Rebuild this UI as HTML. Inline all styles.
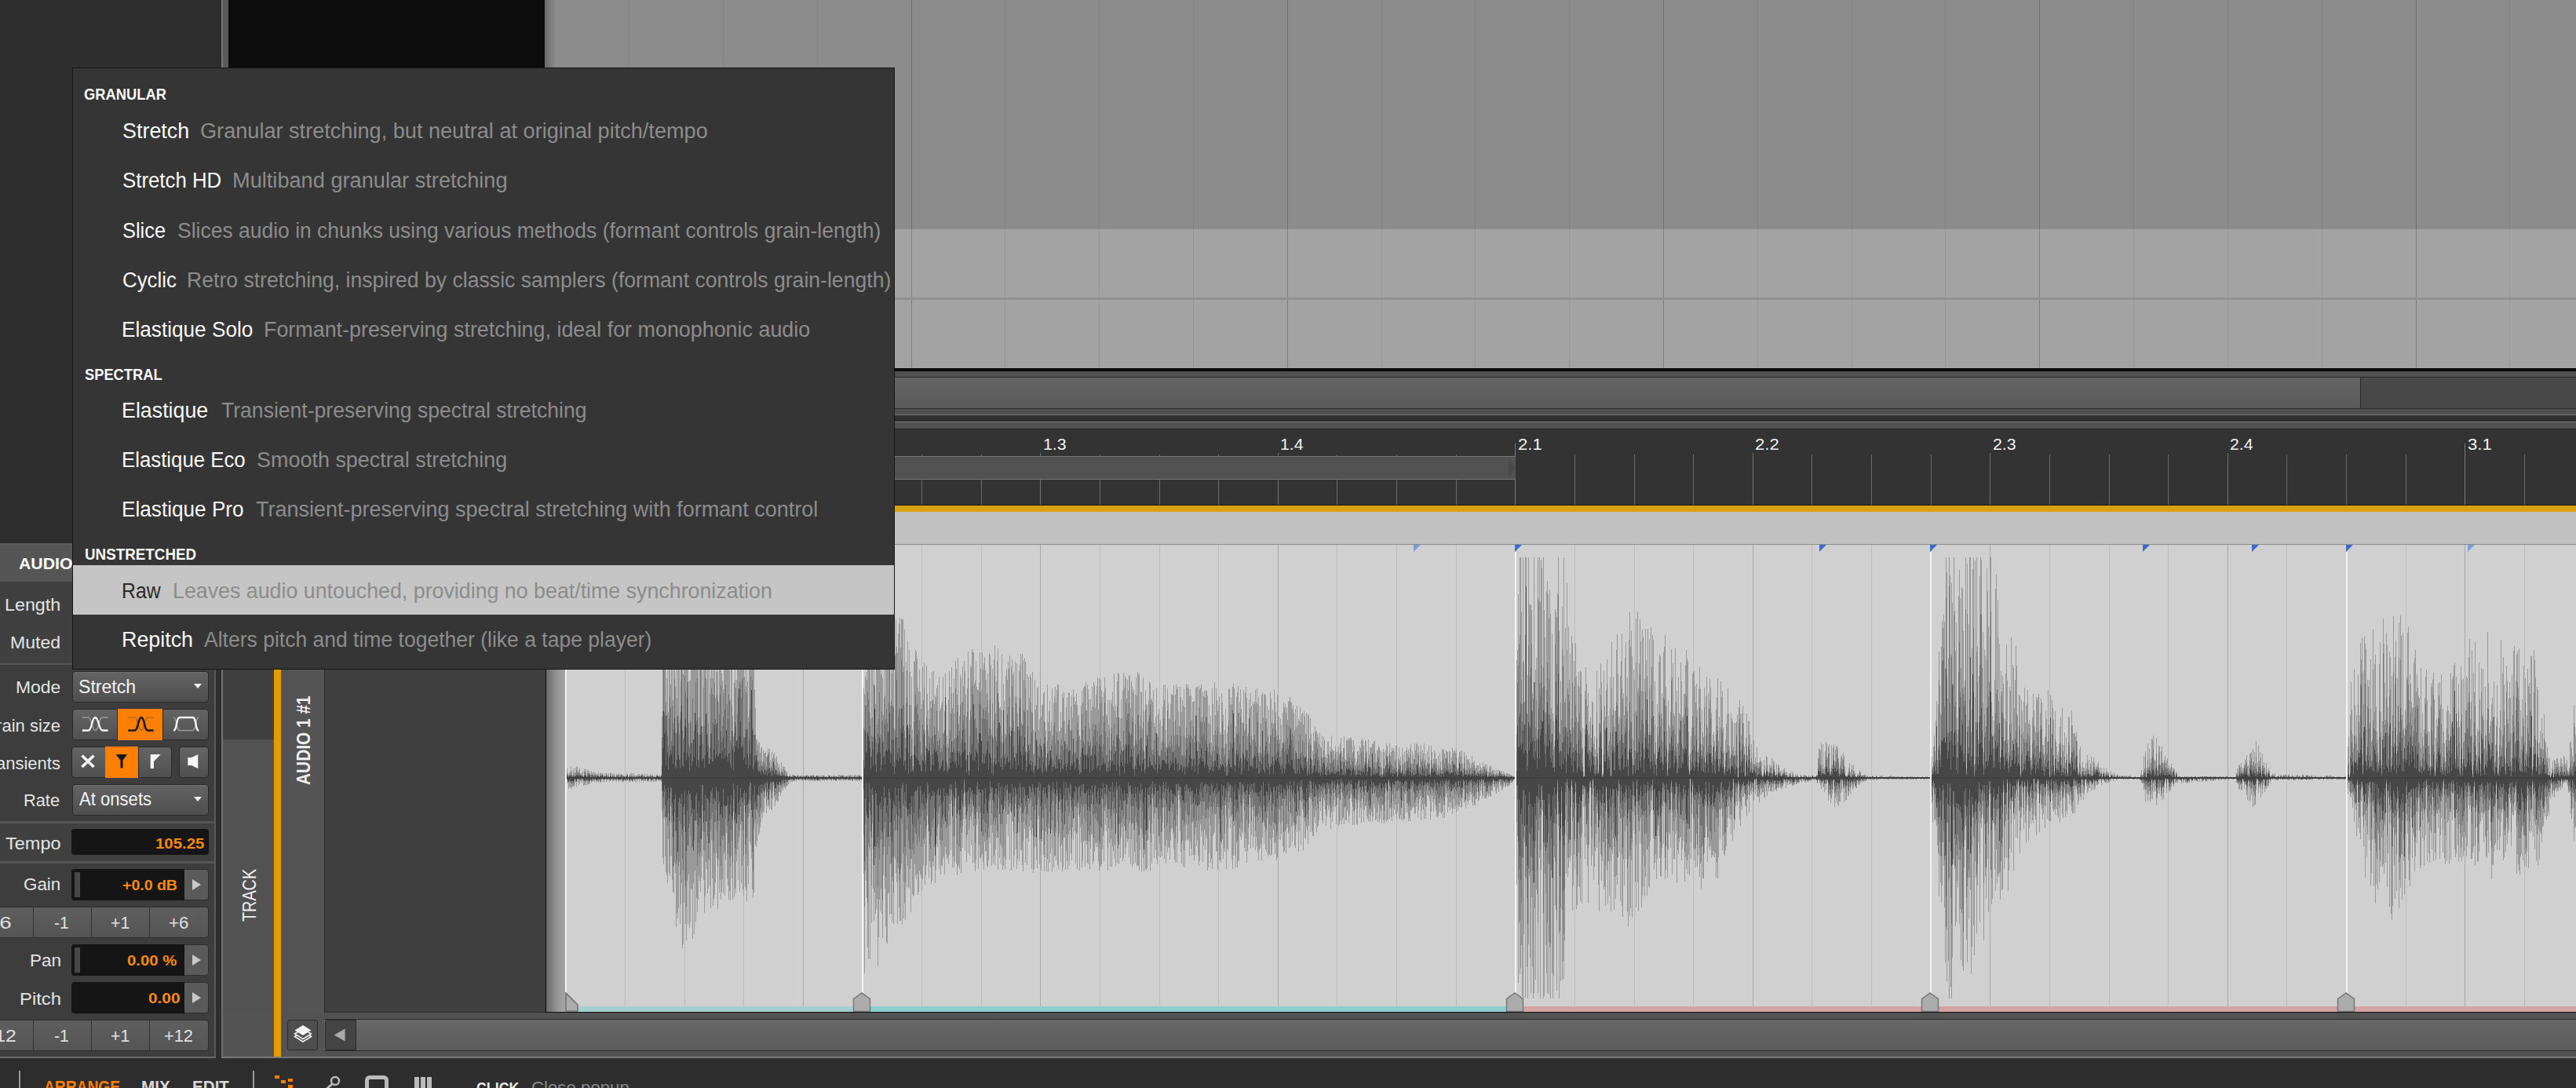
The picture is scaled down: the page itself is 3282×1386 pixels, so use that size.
<!DOCTYPE html><html><head><meta charset="utf-8"><style>
*{margin:0;padding:0;box-sizing:border-box}
html,body{width:3282px;height:1386px;overflow:hidden;background:#2e2e2e;font-family:"Liberation Sans",sans-serif}
#r{position:relative;width:3282px;height:1386px;overflow:hidden}
#r div{position:absolute}
#r svg{position:absolute}
.t{white-space:nowrap;line-height:1}
</style></head><body><div id="r"><div style="left:0px;top:0px;width:282px;height:692px;background:#2e2e2e"></div><div style="left:282px;top:0px;width:9px;height:692px;background:#5a5a5a;border-left:2px solid #777"></div><div style="left:291px;top:0px;width:403px;height:470px;background:#0c0c0c"></div><div style="left:694px;top:0px;width:2588px;height:292px;background:#8c8c8c"></div><div style="left:694px;top:292px;width:2588px;height:178px;background:#a3a3a3"></div><div style="left:801px;top:0;width:1px;height:292px;background:#838383"></div><div style="left:801px;top:292px;width:1px;height:178px;background:#979797"></div><div style="left:921px;top:0;width:1px;height:292px;background:#838383"></div><div style="left:921px;top:292px;width:1px;height:178px;background:#979797"></div><div style="left:1041px;top:0;width:1px;height:292px;background:#838383"></div><div style="left:1041px;top:292px;width:1px;height:178px;background:#979797"></div><div style="left:1161px;top:0;width:1px;height:292px;background:#6f6f6f"></div><div style="left:1161px;top:292px;width:1px;height:178px;background:#7e7e7e"></div><div style="left:1280px;top:0;width:1px;height:292px;background:#838383"></div><div style="left:1280px;top:292px;width:1px;height:178px;background:#979797"></div><div style="left:1400px;top:0;width:1px;height:292px;background:#838383"></div><div style="left:1400px;top:292px;width:1px;height:178px;background:#979797"></div><div style="left:1520px;top:0;width:1px;height:292px;background:#838383"></div><div style="left:1520px;top:292px;width:1px;height:178px;background:#979797"></div><div style="left:1640px;top:0;width:1px;height:292px;background:#6f6f6f"></div><div style="left:1640px;top:292px;width:1px;height:178px;background:#7e7e7e"></div><div style="left:1760px;top:0;width:1px;height:292px;background:#838383"></div><div style="left:1760px;top:292px;width:1px;height:178px;background:#979797"></div><div style="left:1879px;top:0;width:1px;height:292px;background:#838383"></div><div style="left:1879px;top:292px;width:1px;height:178px;background:#979797"></div><div style="left:1999px;top:0;width:1px;height:292px;background:#838383"></div><div style="left:1999px;top:292px;width:1px;height:178px;background:#979797"></div><div style="left:2119px;top:0;width:1px;height:292px;background:#6f6f6f"></div><div style="left:2119px;top:292px;width:1px;height:178px;background:#7e7e7e"></div><div style="left:2239px;top:0;width:1px;height:292px;background:#838383"></div><div style="left:2239px;top:292px;width:1px;height:178px;background:#979797"></div><div style="left:2359px;top:0;width:1px;height:292px;background:#838383"></div><div style="left:2359px;top:292px;width:1px;height:178px;background:#979797"></div><div style="left:2478px;top:0;width:1px;height:292px;background:#838383"></div><div style="left:2478px;top:292px;width:1px;height:178px;background:#979797"></div><div style="left:2598px;top:0;width:1px;height:292px;background:#6f6f6f"></div><div style="left:2598px;top:292px;width:1px;height:178px;background:#7e7e7e"></div><div style="left:2718px;top:0;width:1px;height:292px;background:#838383"></div><div style="left:2718px;top:292px;width:1px;height:178px;background:#979797"></div><div style="left:2838px;top:0;width:1px;height:292px;background:#838383"></div><div style="left:2838px;top:292px;width:1px;height:178px;background:#979797"></div><div style="left:2958px;top:0;width:1px;height:292px;background:#838383"></div><div style="left:2958px;top:292px;width:1px;height:178px;background:#979797"></div><div style="left:3078px;top:0;width:1px;height:292px;background:#6f6f6f"></div><div style="left:3078px;top:292px;width:1px;height:178px;background:#7e7e7e"></div><div style="left:3197px;top:0;width:1px;height:292px;background:#838383"></div><div style="left:3197px;top:292px;width:1px;height:178px;background:#979797"></div><div style="left:694px;top:379px;width:2588px;height:3px;background:#919191"></div><div style="left:694px;top:0px;width:14px;height:470px;background:linear-gradient(90deg,#6a6a6a,rgba(140,140,140,0))"></div><div style="left:694px;top:469px;width:2588px;height:4px;background:#0a0a0a"></div><div style="left:694px;top:473px;width:2588px;height:7px;background:#505050"></div><div style="left:694px;top:480px;width:2588px;height:1px;background:#2a2a2a"></div><div style="left:694px;top:481px;width:2313px;height:39px;background:linear-gradient(180deg,#646464,#5a5a5a)"></div><div style="left:3007px;top:481px;width:275px;height:39px;background:#484848;border-left:1px solid #2a2a2a"></div><div style="left:694px;top:520px;width:2588px;height:1px;background:#2a2a2a"></div><div style="left:694px;top:521px;width:2588px;height:7px;background:#505050"></div><div style="left:694px;top:528px;width:2588px;height:1px;background:#7a7a7a"></div><div style="left:694px;top:529px;width:2588px;height:8px;background:#2e2e2e"></div><div style="left:694px;top:537px;width:2588px;height:1px;background:#7a7a7a"></div><div style="left:694px;top:538px;width:2588px;height:8px;background:#505050"></div><div style="left:694px;top:546px;width:2588px;height:1px;background:#1e1e1e"></div><div style="left:694px;top:547px;width:2588px;height:96px;background:#333333"></div><div style="left:720px;top:565px;width:1px;height:78px;background:#7a7a7a"></div><div style="left:796px;top:579px;width:1px;height:64px;background:#6a6a6a"></div><div style="left:872px;top:579px;width:1px;height:64px;background:#6a6a6a"></div><div style="left:947px;top:579px;width:1px;height:64px;background:#6a6a6a"></div><div style="left:1023px;top:577px;width:1px;height:66px;background:#747474"></div><div style="left:1099px;top:579px;width:1px;height:64px;background:#6a6a6a"></div><div style="left:1174px;top:579px;width:1px;height:64px;background:#6a6a6a"></div><div style="left:1250px;top:579px;width:1px;height:64px;background:#6a6a6a"></div><div style="left:1325px;top:577px;width:1px;height:66px;background:#747474"></div><div style="left:1401px;top:579px;width:1px;height:64px;background:#6a6a6a"></div><div style="left:1477px;top:579px;width:1px;height:64px;background:#6a6a6a"></div><div style="left:1552px;top:579px;width:1px;height:64px;background:#6a6a6a"></div><div style="left:1628px;top:577px;width:1px;height:66px;background:#747474"></div><div style="left:1703px;top:579px;width:1px;height:64px;background:#6a6a6a"></div><div style="left:1779px;top:579px;width:1px;height:64px;background:#6a6a6a"></div><div style="left:1855px;top:579px;width:1px;height:64px;background:#6a6a6a"></div><div style="left:1930px;top:565px;width:1px;height:78px;background:#7a7a7a"></div><div style="left:2006px;top:579px;width:1px;height:64px;background:#6a6a6a"></div><div style="left:2082px;top:579px;width:1px;height:64px;background:#6a6a6a"></div><div style="left:2157px;top:579px;width:1px;height:64px;background:#6a6a6a"></div><div style="left:2233px;top:577px;width:1px;height:66px;background:#747474"></div><div style="left:2308px;top:579px;width:1px;height:64px;background:#6a6a6a"></div><div style="left:2384px;top:579px;width:1px;height:64px;background:#6a6a6a"></div><div style="left:2460px;top:579px;width:1px;height:64px;background:#6a6a6a"></div><div style="left:2535px;top:577px;width:1px;height:66px;background:#747474"></div><div style="left:2611px;top:579px;width:1px;height:64px;background:#6a6a6a"></div><div style="left:2687px;top:579px;width:1px;height:64px;background:#6a6a6a"></div><div style="left:2762px;top:579px;width:1px;height:64px;background:#6a6a6a"></div><div style="left:2838px;top:577px;width:1px;height:66px;background:#747474"></div><div style="left:2913px;top:579px;width:1px;height:64px;background:#6a6a6a"></div><div style="left:2989px;top:579px;width:1px;height:64px;background:#6a6a6a"></div><div style="left:3065px;top:579px;width:1px;height:64px;background:#6a6a6a"></div><div style="left:3140px;top:565px;width:1px;height:78px;background:#7a7a7a"></div><div style="left:3216px;top:579px;width:1px;height:64px;background:#6a6a6a"></div><div style="left:694px;top:581px;width:1237px;height:30px;background:#525252;border-top:1px solid #777;border-bottom:1px solid #777"></div><svg style="left:1922px;top:582px" width="9" height="28"><path d="M0 0 L8 14 L0 28 Z" fill="#4a4a4a"/></svg><div class="t" style="left:1328.6px;top:554.5px;font-size:21px;color:#f2f2f2;transform:scaleX(1.0143);transform-origin:0 0;">1.3</div><div class="t" style="left:1631.1px;top:554.5px;font-size:21px;color:#f2f2f2;transform:scaleX(1.0143);transform-origin:0 0;">1.4</div><div class="t" style="left:1933.5px;top:554.5px;font-size:21px;color:#f2f2f2;transform:scaleX(1.0519);transform-origin:0 0;">2.1</div><div class="t" style="left:2236.0px;top:554.5px;font-size:21px;color:#f2f2f2;transform:scaleX(1.0519);transform-origin:0 0;">2.2</div><div class="t" style="left:2538.6px;top:554.5px;font-size:21px;color:#f2f2f2;transform:scaleX(1.0143);transform-origin:0 0;">2.3</div><div class="t" style="left:2841.1px;top:554.5px;font-size:21px;color:#f2f2f2;transform:scaleX(1.0143);transform-origin:0 0;">2.4</div><div class="t" style="left:3143.5px;top:554.5px;font-size:21px;color:#f2f2f2;transform:scaleX(1.0519);transform-origin:0 0;">3.1</div><div style="left:694px;top:643px;width:2588px;height:1px;background:#1a1a1a"></div><div style="left:694px;top:644px;width:2588px;height:8px;background:#d9a010"></div><div style="left:694px;top:652px;width:2588px;height:41px;background:#c1c1c1"></div><div style="left:694px;top:693px;width:2588px;height:1px;background:#8c8c8c"></div><div style="left:695px;top:694px;width:2587px;height:595px;background:#d0d0d0"></div><svg style="position:absolute;left:0;top:0" width="3282" height="1386"><rect x="720" y="694" width="1" height="595" fill="#a9a9a9"/><rect x="796" y="694" width="1" height="595" fill="#bdbdbd"/><rect x="872" y="694" width="1" height="595" fill="#bdbdbd"/><rect x="947" y="694" width="1" height="595" fill="#bdbdbd"/><rect x="1023" y="694" width="1" height="595" fill="#a9a9a9"/><rect x="1099" y="694" width="1" height="595" fill="#bdbdbd"/><rect x="1174" y="694" width="1" height="595" fill="#bdbdbd"/><rect x="1250" y="694" width="1" height="595" fill="#bdbdbd"/><rect x="1325" y="694" width="1" height="595" fill="#a9a9a9"/><rect x="1401" y="694" width="1" height="595" fill="#bdbdbd"/><rect x="1477" y="694" width="1" height="595" fill="#bdbdbd"/><rect x="1552" y="694" width="1" height="595" fill="#bdbdbd"/><rect x="1628" y="694" width="1" height="595" fill="#a9a9a9"/><rect x="1703" y="694" width="1" height="595" fill="#bdbdbd"/><rect x="1779" y="694" width="1" height="595" fill="#bdbdbd"/><rect x="1855" y="694" width="1" height="595" fill="#bdbdbd"/><rect x="1930" y="694" width="1" height="595" fill="#a9a9a9"/><rect x="2006" y="694" width="1" height="595" fill="#bdbdbd"/><rect x="2082" y="694" width="1" height="595" fill="#bdbdbd"/><rect x="2157" y="694" width="1" height="595" fill="#bdbdbd"/><rect x="2233" y="694" width="1" height="595" fill="#a9a9a9"/><rect x="2308" y="694" width="1" height="595" fill="#bdbdbd"/><rect x="2384" y="694" width="1" height="595" fill="#bdbdbd"/><rect x="2460" y="694" width="1" height="595" fill="#bdbdbd"/><rect x="2535" y="694" width="1" height="595" fill="#a9a9a9"/><rect x="2611" y="694" width="1" height="595" fill="#bdbdbd"/><rect x="2687" y="694" width="1" height="595" fill="#bdbdbd"/><rect x="2762" y="694" width="1" height="595" fill="#bdbdbd"/><rect x="2838" y="694" width="1" height="595" fill="#a9a9a9"/><rect x="2913" y="694" width="1" height="595" fill="#bdbdbd"/><rect x="2989" y="694" width="1" height="595" fill="#bdbdbd"/><rect x="3065" y="694" width="1" height="595" fill="#bdbdbd"/><rect x="3140" y="694" width="1" height="595" fill="#a9a9a9"/><rect x="3216" y="694" width="1" height="595" fill="#bdbdbd"/><path d="M721.5 981V997M722.5 978V994M723.5 985V998M724.5 987V1005M725.5 984V1002M726.5 983V1003M727.5 976V1003M728.5 982V1005M729.5 988V1002M730.5 979V1001M731.5 987V1002M732.5 978V993M733.5 985V997M734.5 977V1002M735.5 976V996M736.5 983V992M737.5 981V1000M738.5 978V998M739.5 985V996M740.5 986V995M741.5 984V997M742.5 982V994M743.5 989V1001M744.5 979V1000M745.5 982V1000M746.5 980V1000M747.5 989V996M748.5 980V1000M749.5 982V999M750.5 982V999M751.5 985V998M752.5 987V994M753.5 982V997M754.5 984V996M755.5 987V995M756.5 983V995M757.5 985V996M758.5 984V994M759.5 986V997M760.5 986V995M761.5 986V996M762.5 984V997M763.5 989V995M764.5 985V996M765.5 985V997M766.5 985V993M767.5 985V992M768.5 987V996M769.5 989V994M770.5 985V996M771.5 989V992M772.5 985V996M773.5 986V994M774.5 988V993M775.5 985V994M776.5 990V996M777.5 985V995M778.5 984V994M779.5 989V993M780.5 985V996M781.5 988V995M782.5 985V994M783.5 988V995M784.5 990V994M785.5 986V996M786.5 986V992M787.5 989V995M788.5 985V996M789.5 989V994M790.5 986V995M791.5 986V992M792.5 988V996M793.5 987V996M794.5 988V996M795.5 989V994M796.5 987V995M797.5 990V995M798.5 985V994M799.5 986V995M800.5 990V991M801.5 988V996M802.5 986V996M803.5 987V995M804.5 985V994M805.5 985V996M806.5 990V996M807.5 985V993M808.5 988V995M809.5 988V996M810.5 989V993M811.5 987V996M812.5 988V992M813.5 986V993M814.5 986V996M815.5 987V991M816.5 988V993M817.5 986V996M818.5 986V994M819.5 987V995M820.5 988V995M821.5 986V995M822.5 990V995M823.5 988V992M824.5 986V995M825.5 988V996M826.5 988V995M827.5 989V992M828.5 986V996M829.5 987V994M830.5 988V996M831.5 986V994M832.5 988V996M833.5 990V992M834.5 988V996M835.5 991V995M836.5 987V996M837.5 986V993M838.5 988V994M839.5 989V995M840.5 987V994M841.5 989V995M842.5 987V995M843.5 913V1033M844.5 808V1093M845.5 813V1101M846.5 806V1041M847.5 805V1091M848.5 894V1111M849.5 864V1115M850.5 854V1125M851.5 907V1069M852.5 819V1112M853.5 850V1116M854.5 872V1027M855.5 839V1090M856.5 824V1121M857.5 892V1136M858.5 800V1138M859.5 809V1099M860.5 875V1112M861.5 816V1181M862.5 889V1163M863.5 841V1170M864.5 823V1157M865.5 836V1098M866.5 917V1177M867.5 833V1152M868.5 808V1125M869.5 810V1208M870.5 859V1203M871.5 832V1150M872.5 803V1122M873.5 804V1177M874.5 844V1198M875.5 839V1122M876.5 798V1178M877.5 921V1114M878.5 867V1182M879.5 867V1175M880.5 801V1132M881.5 844V1133M882.5 840V1196M883.5 844V1125M884.5 830V1190M885.5 810V1109M886.5 805V1174M887.5 815V1144M888.5 815V1162M889.5 812V1146M890.5 936V1115M891.5 807V1122M892.5 801V1136M893.5 829V1118M894.5 805V1091M895.5 925V1059M896.5 828V1121M897.5 806V1163M898.5 812V1142M899.5 816V1098M900.5 865V1107M901.5 810V1138M902.5 820V1132M903.5 965V1096M904.5 838V1128M905.5 864V1157M906.5 826V1070M907.5 847V1119M908.5 864V1154M909.5 834V1146M910.5 811V1140M911.5 889V1124M912.5 811V1087M913.5 856V1093M914.5 849V1158M915.5 895V1095M916.5 838V1137M917.5 808V1121M918.5 810V1146M919.5 858V1136M920.5 867V1120M921.5 878V1138M922.5 834V1087M923.5 835V1141M924.5 806V1095M925.5 853V1061M926.5 847V1119M927.5 807V1128M928.5 817V1146M929.5 854V1135M930.5 891V1147M931.5 846V1090M932.5 841V1119M933.5 912V1146M934.5 938V1034M935.5 870V1143M936.5 811V1132M937.5 876V1138M938.5 866V1097M939.5 843V1082M940.5 814V1121M941.5 807V1066M942.5 831V1136M943.5 811V1050M944.5 842V1125M945.5 815V1103M946.5 807V1133M947.5 829V1141M948.5 862V1026M949.5 811V1130M950.5 874V1134M951.5 819V1148M952.5 868V1103M953.5 914V1126M954.5 846V1036M955.5 849V1072M956.5 826V1076M957.5 823V1094M958.5 820V1133M959.5 844V1144M960.5 828V1137M961.5 878V1049M962.5 902V1076M963.5 942V1079M964.5 942V1071M965.5 949V1050M966.5 945V1064M967.5 946V1061M968.5 959V1054M969.5 953V1048M970.5 951V1035M971.5 970V1042M972.5 955V1033M973.5 959V1035M974.5 959V1017M975.5 957V1006M976.5 964V1036M977.5 964V1009M978.5 953V1028M979.5 958V1026M980.5 954V1031M981.5 968V1007M982.5 977V1031M983.5 958V1032M984.5 966V1018M985.5 961V1001M986.5 959V1015M987.5 975V1027M988.5 966V1021M989.5 963V1019M990.5 971V1021M991.5 977V1021M992.5 973V1009M993.5 979V1009M994.5 985V1014M995.5 971V1010M996.5 980V1004M997.5 976V1007M998.5 977V1002M999.5 977V1003M1000.5 981V1005M1001.5 983V1002M1002.5 983V1002M1003.5 988V1000M1004.5 989V999M1005.5 989V994M1006.5 986V997M1007.5 989V994M1008.5 989V996M1009.5 987V996M1010.5 987V995M1011.5 987V995M1012.5 988V995M1013.5 988V993M1014.5 989V995M1015.5 987V992M1016.5 987V994M1017.5 988V994M1018.5 988V994M1019.5 988V994M1020.5 988V993M1021.5 988V994M1022.5 988V995M1023.5 988V995M1024.5 988V994M1025.5 989V994M1026.5 988V995M1027.5 987V993M1028.5 987V994M1029.5 988V994M1030.5 988V995M1031.5 989V994M1032.5 987V995M1033.5 988V994M1034.5 988V995M1035.5 987V994M1036.5 987V995M1037.5 988V995M1038.5 989V995M1039.5 989V994M1040.5 988V994M1041.5 988V995M1042.5 988V995M1043.5 988V994M1044.5 989V995M1045.5 988V995M1046.5 988V993M1047.5 988V994M1048.5 988V994M1049.5 987V994M1050.5 988V995M1051.5 989V993M1052.5 989V994M1053.5 989V995M1054.5 990V994M1055.5 987V993M1056.5 987V994M1057.5 988V993M1058.5 989V994M1059.5 988V995M1060.5 989V993M1061.5 988V994M1062.5 987V994M1063.5 989V994M1064.5 988V995M1065.5 989V995M1066.5 990V993M1067.5 988V993M1068.5 987V994M1069.5 987V994M1070.5 987V995M1071.5 988V993M1072.5 987V994M1073.5 987V993M1074.5 988V995M1075.5 988V993M1076.5 989V994M1077.5 989V994M1078.5 988V994M1079.5 988V993M1080.5 989V994M1081.5 987V995M1082.5 988V994M1083.5 987V994M1084.5 989V992M1085.5 987V995M1086.5 989V995M1087.5 989V992M1088.5 987V994M1089.5 987V993M1090.5 989V995M1091.5 988V994M1092.5 987V995M1093.5 989V993M1094.5 987V995M1095.5 988V994M1096.5 988V994M1097.5 989V994M1098.5 955V1033M1099.5 932V1068M1100.5 876V1113M1101.5 884V1240M1102.5 862V1109M1103.5 856V1122M1104.5 866V1144M1105.5 846V1207M1106.5 850V1222M1107.5 850V1079M1108.5 835V1222M1109.5 915V1059M1110.5 846V1176M1111.5 827V1049M1112.5 939V1132M1113.5 830V1173M1114.5 874V1137M1115.5 897V1164M1116.5 845V1158M1117.5 836V1145M1118.5 814V1230M1119.5 836V1194M1120.5 830V1146M1121.5 840V1161M1122.5 859V1132M1123.5 847V1164M1124.5 864V1195M1125.5 911V1115M1126.5 805V1079M1127.5 886V1132M1128.5 802V1181M1129.5 804V1200M1130.5 817V1202M1131.5 812V1139M1132.5 815V1137M1133.5 788V1165M1134.5 899V1101M1135.5 820V1164M1136.5 858V1175M1137.5 827V1122M1138.5 803V1177M1139.5 928V1091M1140.5 835V1094M1141.5 789V1112M1142.5 824V1124M1143.5 832V1177M1144.5 807V1106M1145.5 795V1156M1146.5 787V1173M1147.5 825V1173M1148.5 788V1100M1149.5 790V1178M1150.5 788V1087M1151.5 849V1170M1152.5 802V1151M1153.5 940V1172M1154.5 843V1090M1155.5 854V1131M1156.5 817V1103M1157.5 927V1130M1158.5 828V1132M1159.5 856V1107M1160.5 898V1162M1161.5 862V1094M1162.5 929V1139M1163.5 976V1142M1164.5 843V1140M1165.5 842V1101M1166.5 828V1116M1167.5 830V1120M1168.5 839V1113M1169.5 876V1140M1170.5 881V1136M1171.5 853V1109M1172.5 881V1114M1173.5 903V1118M1174.5 897V1135M1175.5 850V1120M1176.5 892V1102M1177.5 844V1075M1178.5 931V1127M1179.5 950V1115M1180.5 848V1102M1181.5 884V1039M1182.5 904V1050M1183.5 938V1118M1184.5 864V1097M1185.5 893V1105M1186.5 902V1126M1187.5 856V1122M1188.5 891V1098M1189.5 855V1104M1190.5 897V1079M1191.5 886V1125M1192.5 888V1108M1193.5 877V1065M1194.5 873V1079M1195.5 931V1050M1196.5 862V1107M1197.5 905V1070M1198.5 902V1114M1199.5 898V1102M1200.5 894V1104M1201.5 862V1094M1202.5 933V1091M1203.5 906V1114M1204.5 857V1079M1205.5 898V1088M1206.5 937V1095M1207.5 948V1092M1208.5 891V1101M1209.5 855V1089M1210.5 875V1051M1211.5 909V1083M1212.5 850V1020M1213.5 902V1105M1214.5 883V1091M1215.5 865V1106M1216.5 941V1097M1217.5 842V1017M1218.5 852V1100M1219.5 885V1115M1220.5 838V1104M1221.5 922V1102M1222.5 912V1107M1223.5 859V1084M1224.5 863V1112M1225.5 895V1061M1226.5 849V1080M1227.5 874V1043M1228.5 842V1010M1229.5 855V1084M1230.5 885V1043M1231.5 913V1098M1232.5 877V1063M1233.5 830V1087M1234.5 981V1057M1235.5 917V1090M1236.5 848V1040M1237.5 850V1077M1238.5 827V1035M1239.5 831V1099M1240.5 831V1052M1241.5 871V1099M1242.5 867V1110M1243.5 842V1096M1244.5 875V1051M1245.5 879V1034M1246.5 879V1107M1247.5 869V1076M1248.5 831V1092M1249.5 852V1094M1250.5 880V1091M1251.5 831V1088M1252.5 853V1098M1253.5 845V1108M1254.5 837V1072M1255.5 854V1085M1256.5 866V1084M1257.5 883V1103M1258.5 858V1105M1259.5 908V1096M1260.5 832V1067M1261.5 834V1074M1262.5 847V1051M1263.5 936V1103M1264.5 852V1061M1265.5 941V1100M1266.5 840V1090M1267.5 822V1102M1268.5 908V1082M1269.5 868V1068M1270.5 842V1059M1271.5 826V1108M1272.5 894V1017M1273.5 902V1093M1274.5 900V1075M1275.5 904V1101M1276.5 834V1050M1277.5 947V1108M1278.5 871V1103M1279.5 893V1091M1280.5 935V1107M1281.5 861V1095M1282.5 852V1050M1283.5 866V1038M1284.5 843V1065M1285.5 852V1037M1286.5 835V1095M1287.5 938V1033M1288.5 849V1109M1289.5 840V1046M1290.5 860V1047M1291.5 856V1105M1292.5 932V1090M1293.5 843V1024M1294.5 896V1082M1295.5 845V1107M1296.5 908V1094M1297.5 925V1048M1298.5 855V1097M1299.5 847V1027M1300.5 833V1083M1301.5 921V1083M1302.5 833V1102M1303.5 841V1110M1304.5 866V1047M1305.5 839V1056M1306.5 843V1099M1307.5 957V1068M1308.5 859V1102M1309.5 905V1067M1310.5 862V1072M1311.5 889V1053M1312.5 859V1058M1313.5 863V1045M1314.5 907V1107M1315.5 856V1055M1316.5 930V1112M1317.5 960V1107M1318.5 866V1066M1319.5 904V1078M1320.5 898V1095M1321.5 877V1106M1322.5 875V1044M1323.5 930V1039M1324.5 916V1101M1325.5 868V1088M1326.5 913V1109M1327.5 898V1072M1328.5 897V1058M1329.5 883V1089M1330.5 881V1110M1331.5 920V1092M1332.5 931V1059M1333.5 965V1110M1334.5 872V1094M1335.5 920V1111M1336.5 906V1055M1337.5 893V1099M1338.5 931V1087M1339.5 919V1056M1340.5 877V1110M1341.5 937V1020M1342.5 895V1105M1343.5 887V1091M1344.5 875V1090M1345.5 895V1096M1346.5 879V1015M1347.5 872V1102M1348.5 872V1107M1349.5 932V1062M1350.5 931V1079M1351.5 907V1098M1352.5 927V1076M1353.5 884V1110M1354.5 889V1105M1355.5 882V1067M1356.5 918V1067M1357.5 934V1108M1358.5 901V1084M1359.5 888V1097M1360.5 923V1108M1361.5 882V1063M1362.5 883V1102M1363.5 930V1058M1364.5 900V1087M1365.5 886V1096M1366.5 914V1054M1367.5 878V1070M1368.5 888V1042M1369.5 897V1059M1370.5 893V1100M1371.5 884V1062M1372.5 898V1107M1373.5 912V1029M1374.5 910V1038M1375.5 937V1109M1376.5 942V1054M1377.5 899V1073M1378.5 880V1105M1379.5 896V1097M1380.5 876V1072M1381.5 874V1071M1382.5 875V1104M1383.5 869V1071M1384.5 905V1076M1385.5 872V1099M1386.5 878V1101M1387.5 891V1072M1388.5 928V1107M1389.5 890V1081M1390.5 905V1064M1391.5 875V1062M1392.5 900V1101M1393.5 869V1097M1394.5 873V1085M1395.5 902V1074M1396.5 885V1079M1397.5 874V1073M1398.5 863V1079M1399.5 904V1097M1400.5 864V1109M1401.5 874V1103M1402.5 866V1105M1403.5 880V1101M1404.5 888V1082M1405.5 912V1065M1406.5 882V1097M1407.5 863V1033M1408.5 876V1051M1409.5 910V1059M1410.5 913V1041M1411.5 891V1109M1412.5 923V1055M1413.5 892V1074M1414.5 968V1104M1415.5 891V1069M1416.5 896V1104M1417.5 881V1078M1418.5 900V1084M1419.5 858V1094M1420.5 906V1076M1421.5 898V1104M1422.5 914V1036M1423.5 868V1099M1424.5 857V1081M1425.5 859V1101M1426.5 941V1049M1427.5 915V1093M1428.5 891V1066M1429.5 915V1054M1430.5 879V1097M1431.5 857V1093M1432.5 876V1052M1433.5 861V1088M1434.5 864V1080M1435.5 890V1068M1436.5 866V1073M1437.5 880V1069M1438.5 861V1092M1439.5 860V1046M1440.5 902V1101M1441.5 868V1069M1442.5 874V1105M1443.5 882V1049M1444.5 878V1101M1445.5 949V1085M1446.5 885V1099M1447.5 863V1048M1448.5 886V1103M1449.5 856V1102M1450.5 860V1103M1451.5 858V1109M1452.5 925V1083M1453.5 881V1054M1454.5 882V1110M1455.5 928V1068M1456.5 863V1093M1457.5 906V1110M1458.5 966V1088M1459.5 879V1107M1460.5 897V1109M1461.5 898V1106M1462.5 920V1056M1463.5 892V1070M1464.5 868V1045M1465.5 870V1109M1466.5 892V1073M1467.5 890V1100M1468.5 894V1017M1469.5 879V1062M1470.5 921V1093M1471.5 926V1036M1472.5 913V1083M1473.5 876V1094M1474.5 935V1101M1475.5 910V1043M1476.5 903V1091M1477.5 921V1075M1478.5 917V1092M1479.5 945V1084M1480.5 925V1091M1481.5 900V1048M1482.5 873V1029M1483.5 892V1094M1484.5 872V1077M1485.5 930V1100M1486.5 952V1070M1487.5 877V1086M1488.5 896V1079M1489.5 915V1080M1490.5 916V1095M1491.5 897V1071M1492.5 884V1056M1493.5 884V1055M1494.5 886V1062M1495.5 873V1081M1496.5 937V1095M1497.5 885V1099M1498.5 872V1052M1499.5 878V1099M1500.5 875V1074M1501.5 906V1013M1502.5 925V1019M1503.5 875V1058M1504.5 888V1085M1505.5 907V1100M1506.5 892V1071M1507.5 899V1104M1508.5 878V1083M1509.5 901V1105M1510.5 940V1071M1511.5 871V1051M1512.5 876V1070M1513.5 872V1071M1514.5 877V1069M1515.5 887V1091M1516.5 878V1072M1517.5 886V1081M1518.5 917V1090M1519.5 894V1047M1520.5 894V1089M1521.5 893V1096M1522.5 937V1089M1523.5 877V1054M1524.5 875V1078M1525.5 875V1070M1526.5 944V1090M1527.5 874V1103M1528.5 879V1097M1529.5 876V1050M1530.5 872V1066M1531.5 920V1059M1532.5 882V1098M1533.5 887V1077M1534.5 880V1057M1535.5 888V1083M1536.5 879V1064M1537.5 880V1068M1538.5 886V1109M1539.5 921V1105M1540.5 898V1087M1541.5 923V1028M1542.5 912V1099M1543.5 946V1094M1544.5 877V1107M1545.5 897V1065M1546.5 936V1062M1547.5 869V1060M1548.5 911V1038M1549.5 877V1085M1550.5 892V1084M1551.5 906V1108M1552.5 898V1049M1553.5 887V1096M1554.5 933V1096M1555.5 936V1099M1556.5 883V1075M1557.5 895V1069M1558.5 911V1094M1559.5 953V1081M1560.5 930V1085M1561.5 903V1026M1562.5 947V1107M1563.5 934V1081M1564.5 925V1084M1565.5 878V1030M1566.5 877V1042M1567.5 898V1055M1568.5 888V1039M1569.5 897V1095M1570.5 875V1107M1571.5 871V1090M1572.5 877V1052M1573.5 940V1090M1574.5 925V1105M1575.5 888V1073M1576.5 882V1105M1577.5 874V1098M1578.5 908V1096M1579.5 894V1055M1580.5 878V1066M1581.5 903V1070M1582.5 921V1059M1583.5 920V1062M1584.5 879V1018M1585.5 931V1080M1586.5 882V1085M1587.5 875V1068M1588.5 889V1099M1589.5 938V1084M1590.5 934V1076M1591.5 891V1049M1592.5 902V1016M1593.5 883V1081M1594.5 899V1063M1595.5 942V1028M1596.5 894V1080M1597.5 897V1066M1598.5 894V1040M1599.5 879V1083M1600.5 895V1066M1601.5 877V1078M1602.5 897V1086M1603.5 888V1096M1604.5 959V1082M1605.5 899V1080M1606.5 922V1075M1607.5 885V1096M1608.5 882V1067M1609.5 914V1045M1610.5 884V1075M1611.5 884V1053M1612.5 886V1082M1613.5 916V1085M1614.5 899V1042M1615.5 938V1089M1616.5 904V1091M1617.5 947V1088M1618.5 882V1069M1619.5 890V1090M1620.5 920V1088M1621.5 904V1067M1622.5 922V1057M1623.5 878V1074M1624.5 895V1088M1625.5 907V1073M1626.5 937V1096M1627.5 885V1092M1628.5 910V1050M1629.5 913V1069M1630.5 942V1031M1631.5 915V1070M1632.5 924V1062M1633.5 953V1046M1634.5 908V1078M1635.5 895V1086M1636.5 901V1084M1637.5 897V1059M1638.5 908V1087M1639.5 901V1050M1640.5 917V1054M1641.5 894V1061M1642.5 893V1080M1643.5 888V1021M1644.5 894V1079M1645.5 895V1053M1646.5 903V1072M1647.5 899V1051M1648.5 908V1048M1649.5 930V1077M1650.5 903V1080M1651.5 926V1050M1652.5 899V1060M1653.5 924V1039M1654.5 916V1085M1655.5 919V1059M1656.5 901V1019M1657.5 920V1076M1658.5 910V1021M1659.5 908V1031M1660.5 923V1083M1661.5 906V1042M1662.5 913V1067M1663.5 935V1069M1664.5 908V1053M1665.5 970V1057M1666.5 910V1075M1667.5 911V1052M1668.5 941V1016M1669.5 915V1060M1670.5 935V1018M1671.5 968V1059M1672.5 957V1065M1673.5 933V1065M1674.5 945V1041M1675.5 925V1049M1676.5 932V1033M1677.5 931V1060M1678.5 935V1054M1679.5 939V1052M1680.5 948V1045M1681.5 933V1021M1682.5 951V1033M1683.5 953V1016M1684.5 937V1045M1685.5 965V1049M1686.5 939V1017M1687.5 943V1020M1688.5 965V1031M1689.5 961V1052M1690.5 966V1040M1691.5 945V1026M1692.5 944V1032M1693.5 962V1027M1694.5 951V1041M1695.5 957V1056M1696.5 937V1035M1697.5 954V1047M1698.5 957V1027M1699.5 956V1034M1700.5 966V1010M1701.5 950V1028M1702.5 958V1050M1703.5 968V1025M1704.5 957V1016M1705.5 951V1052M1706.5 962V1050M1707.5 947V1046M1708.5 940V1005M1709.5 957V1050M1710.5 964V1044M1711.5 953V1041M1712.5 938V1050M1713.5 967V1028M1714.5 968V1045M1715.5 943V1045M1716.5 941V1032M1717.5 944V1035M1718.5 940V1048M1719.5 942V1039M1720.5 940V1017M1721.5 940V1011M1722.5 943V1021M1723.5 959V1051M1724.5 943V1033M1725.5 950V1051M1726.5 966V1031M1727.5 975V1018M1728.5 971V1050M1729.5 957V1051M1730.5 957V1019M1731.5 962V1005M1732.5 950V1041M1733.5 953V1029M1734.5 943V1048M1735.5 941V1017M1736.5 944V1031M1737.5 950V1047M1738.5 970V1032M1739.5 943V1027M1740.5 944V1027M1741.5 957V1040M1742.5 973V1043M1743.5 942V1046M1744.5 961V1037M1745.5 952V1047M1746.5 953V1039M1747.5 952V1034M1748.5 947V1047M1749.5 948V1040M1750.5 944V1024M1751.5 944V1029M1752.5 960V1045M1753.5 971V1044M1754.5 956V1035M1755.5 954V1047M1756.5 950V1025M1757.5 952V1047M1758.5 956V1043M1759.5 978V1033M1760.5 958V1049M1761.5 986V1025M1762.5 954V1045M1763.5 958V1049M1764.5 979V1045M1765.5 956V1004M1766.5 947V1047M1767.5 950V1044M1768.5 973V1045M1769.5 962V996M1770.5 947V1043M1771.5 963V1029M1772.5 958V1041M1773.5 953V1046M1774.5 956V1012M1775.5 953V1039M1776.5 957V1031M1777.5 969V1025M1778.5 950V1037M1779.5 949V1043M1780.5 982V1034M1781.5 966V1024M1782.5 952V1042M1783.5 968V1044M1784.5 964V1038M1785.5 982V1044M1786.5 953V1020M1787.5 962V1046M1788.5 973V1043M1789.5 958V1044M1790.5 971V1012M1791.5 956V1035M1792.5 952V1023M1793.5 960V1035M1794.5 955V1046M1795.5 966V1042M1796.5 953V1046M1797.5 948V1032M1798.5 973V1033M1799.5 957V1029M1800.5 962V1027M1801.5 967V1029M1802.5 947V1037M1803.5 956V1036M1804.5 948V1028M1805.5 947V1015M1806.5 959V1041M1807.5 950V1032M1808.5 977V1018M1809.5 958V1014M1810.5 949V1045M1811.5 970V1033M1812.5 956V1025M1813.5 960V1031M1814.5 947V1043M1815.5 968V1024M1816.5 960V1043M1817.5 975V1028M1818.5 957V1013M1819.5 972V1013M1820.5 950V1015M1821.5 972V1020M1822.5 984V1044M1823.5 950V1034M1824.5 958V1014M1825.5 973V1022M1826.5 967V1034M1827.5 956V1018M1828.5 959V1025M1829.5 967V1032M1830.5 967V1040M1831.5 981V1041M1832.5 963V1039M1833.5 980V1035M1834.5 960V1023M1835.5 970V1035M1836.5 981V1037M1837.5 954V1034M1838.5 956V1042M1839.5 954V1025M1840.5 960V1042M1841.5 965V1015M1842.5 956V1010M1843.5 957V1016M1844.5 958V1035M1845.5 972V1028M1846.5 956V1022M1847.5 958V1032M1848.5 974V1022M1849.5 965V1029M1850.5 953V1037M1851.5 959V1030M1852.5 956V1018M1853.5 956V1031M1854.5 959V1027M1855.5 955V1035M1856.5 978V1025M1857.5 980V1033M1858.5 965V1027M1859.5 958V1028M1860.5 957V1020M1861.5 963V1029M1862.5 956V1028M1863.5 973V1018M1864.5 979V1005M1865.5 958V1023M1866.5 964V1021M1867.5 980V1030M1868.5 962V1010M1869.5 967V1021M1870.5 968V1025M1871.5 967V1015M1872.5 971V1019M1873.5 978V1009M1874.5 973V1012M1875.5 963V1022M1876.5 971V1026M1877.5 971V1015M1878.5 969V1026M1879.5 979V1026M1880.5 978V1018M1881.5 975V1018M1882.5 975V1003M1883.5 975V1021M1884.5 982V1019M1885.5 972V1014M1886.5 977V1007M1887.5 979V999M1888.5 981V1017M1889.5 971V1014M1890.5 977V1002M1891.5 975V1017M1892.5 973V1017M1893.5 979V1017M1894.5 974V1014M1895.5 988V1011M1896.5 983V1015M1897.5 978V1011M1898.5 975V1014M1899.5 976V1015M1900.5 983V1007M1901.5 981V1008M1902.5 980V995M1903.5 986V1003M1904.5 981V1002M1905.5 986V1008M1906.5 981V1011M1907.5 987V1005M1908.5 981V1003M1909.5 986V1009M1910.5 981V996M1911.5 982V1000M1912.5 984V1002M1913.5 982V1007M1914.5 986V1005M1915.5 983V1003M1916.5 985V998M1917.5 985V1003M1918.5 989V1002M1919.5 985V1000M1920.5 985V1002M1921.5 986V1001M1922.5 986V1001M1923.5 987V1000M1924.5 987V997M1925.5 987V997M1926.5 988V997M1927.5 989V996M1928.5 988V994M1929.5 991V993M1930.5 967V1056M1931.5 901V1123M1932.5 841V1127M1933.5 828V1065M1934.5 757V1252M1935.5 820V1176M1936.5 710V1242M1937.5 710V1233M1938.5 780V1204M1939.5 897V1269M1940.5 710V1272M1941.5 842V1190M1942.5 894V1073M1943.5 710V1271M1944.5 710V1119M1945.5 909V1232M1946.5 860V1272M1947.5 710V1203M1948.5 769V1116M1949.5 771V1220M1950.5 770V1265M1951.5 777V1143M1952.5 883V1232M1953.5 890V1272M1954.5 710V1265M1955.5 869V1157M1956.5 853V1248M1957.5 838V1133M1958.5 940V1139M1959.5 710V1265M1960.5 765V1058M1961.5 710V1093M1962.5 767V1272M1963.5 713V1108M1964.5 723V1031M1965.5 876V1034M1966.5 710V1272M1967.5 777V1269M1968.5 812V1113M1969.5 907V1204M1970.5 753V1240M1971.5 740V1265M1972.5 757V1100M1973.5 788V1267M1974.5 751V1207M1975.5 782V1272M1976.5 902V1109M1977.5 807V1239M1978.5 909V1272M1979.5 919V1243M1980.5 951V1092M1981.5 776V1153M1982.5 780V1159M1983.5 786V1262M1984.5 756V1009M1985.5 710V1052M1986.5 804V1272M1987.5 935V1186M1988.5 867V1250M1989.5 917V1036M1990.5 773V1248M1991.5 849V1224M1992.5 710V1247M1993.5 895V1198M1994.5 800V1044M1995.5 927V1113M1996.5 743V1000M1997.5 877V1117M1998.5 798V1105M1999.5 866V1093M2000.5 833V1097M2001.5 935V1090M2002.5 810V1000M2003.5 819V1160M2004.5 927V1128M2005.5 842V1089M2006.5 863V1108M2007.5 819V1009M2008.5 861V1158M2009.5 959V1153M2010.5 873V1129M2011.5 856V1086M2012.5 875V1130M2013.5 854V1148M2014.5 856V1066M2015.5 954V1151M2016.5 927V1012M2017.5 983V1028M2018.5 989V1005M2019.5 880V1094M2020.5 850V1025M2021.5 871V1076M2022.5 899V1103M2023.5 883V1150M2024.5 935V1076M2025.5 919V1003M2026.5 914V1003M2027.5 940V1103M2028.5 893V1090M2029.5 895V995M2030.5 948V1121M2031.5 938V1104M2032.5 955V1084M2033.5 964V1062M2034.5 855V1080M2035.5 959V1036M2036.5 982V1127M2037.5 877V1161M2038.5 922V1046M2039.5 845V1088M2040.5 869V1122M2041.5 987V1097M2042.5 984V1072M2043.5 855V1133M2044.5 899V1130M2045.5 913V1154M2046.5 879V1005M2047.5 840V1109M2048.5 957V1151M2049.5 912V1097M2050.5 944V1141M2051.5 862V1079M2052.5 988V1161M2053.5 818V1083M2054.5 911V1088M2055.5 862V1068M2056.5 926V1159M2057.5 906V1117M2058.5 905V1145M2059.5 828V1115M2060.5 808V1127M2061.5 858V1092M2062.5 922V1008M2063.5 914V1086M2064.5 861V1148M2065.5 842V1043M2066.5 807V1154M2067.5 890V1168M2068.5 883V1095M2069.5 911V1128M2070.5 838V1059M2071.5 818V1094M2072.5 887V1052M2073.5 863V1161M2074.5 968V1180M2075.5 815V1031M2076.5 780V1167M2077.5 824V1157M2078.5 804V1096M2079.5 836V1168M2080.5 975V1034M2081.5 853V1058M2082.5 866V1039M2083.5 956V1123M2084.5 788V1156M2085.5 912V1005M2086.5 779V1124M2087.5 877V1161M2088.5 845V1059M2089.5 789V1074M2090.5 817V1041M2091.5 880V1156M2092.5 802V1141M2093.5 812V1130M2094.5 954V1034M2095.5 865V1142M2096.5 801V1117M2097.5 841V1062M2098.5 861V1141M2099.5 801V1007M2100.5 936V1129M2101.5 814V1131M2102.5 937V1072M2103.5 799V1019M2104.5 850V1032M2105.5 809V1007M2106.5 815V1068M2107.5 959V1108M2108.5 868V1099M2109.5 946V1089M2110.5 967V1120M2111.5 897V1094M2112.5 937V1051M2113.5 843V1065M2114.5 834V1093M2115.5 836V1116M2116.5 909V1117M2117.5 883V1080M2118.5 945V1027M2119.5 831V1075M2120.5 824V1022M2121.5 809V1120M2122.5 875V1108M2123.5 899V1060M2124.5 981V1118M2125.5 892V1083M2126.5 923V1060M2127.5 927V1063M2128.5 907V1080M2129.5 827V1009M2130.5 863V1114M2131.5 845V1059M2132.5 909V1094M2133.5 912V1095M2134.5 826V1062M2135.5 894V1002M2136.5 880V1125M2137.5 947V1083M2138.5 862V1088M2139.5 908V1073M2140.5 910V1067M2141.5 844V1066M2142.5 868V1096M2143.5 913V1081M2144.5 915V1071M2145.5 884V1045M2146.5 884V1123M2147.5 847V1092M2148.5 828V1107M2149.5 839V1096M2150.5 842V1113M2151.5 932V1089M2152.5 984V1115M2153.5 960V992M2154.5 938V1094M2155.5 927V1037M2156.5 858V1001M2157.5 856V1081M2158.5 855V1096M2159.5 874V1082M2160.5 895V1105M2161.5 871V1062M2162.5 904V1104M2163.5 958V1090M2164.5 877V1025M2165.5 850V1117M2166.5 877V1100M2167.5 956V1132M2168.5 904V1079M2169.5 933V1119M2170.5 939V1119M2171.5 876V1087M2172.5 971V1067M2173.5 887V1021M2174.5 862V1053M2175.5 927V1098M2176.5 883V1067M2177.5 903V1079M2178.5 865V1083M2179.5 876V1077M2180.5 908V1093M2181.5 964V1089M2182.5 936V1091M2183.5 933V1084M2184.5 944V1092M2185.5 957V1087M2186.5 903V1118M2187.5 888V1099M2188.5 864V1119M2189.5 944V1092M2190.5 913V1032M2191.5 926V1069M2192.5 868V1032M2193.5 888V1030M2194.5 880V1083M2195.5 927V1064M2196.5 957V1088M2197.5 980V1090M2198.5 942V1083M2199.5 922V1078M2200.5 910V1054M2201.5 877V1042M2202.5 909V1027M2203.5 950V1043M2204.5 965V1038M2205.5 908V1063M2206.5 915V1038M2207.5 919V1071M2208.5 951V997M2209.5 921V1057M2210.5 963V1045M2211.5 921V1027M2212.5 919V1021M2213.5 910V1026M2214.5 990V999M2215.5 901V1021M2216.5 892V1044M2217.5 909V1052M2218.5 937V1027M2219.5 909V1032M2220.5 899V1015M2221.5 921V1015M2222.5 951V1010M2223.5 988V1026M2224.5 940V1028M2225.5 909V1040M2226.5 962V1018M2227.5 919V1000M2228.5 918V1035M2229.5 936V1013M2230.5 971V1008M2231.5 948V1012M2232.5 972V1004M2233.5 959V1017M2234.5 943V1020M2235.5 973V994M2236.5 965V1011M2237.5 976V992M2238.5 952V1015M2239.5 978V1015M2240.5 972V1015M2241.5 971V1022M2242.5 965V1013M2243.5 969V1005M2244.5 971V1012M2245.5 988V1009M2246.5 987V1009M2247.5 968V1015M2248.5 975V1017M2249.5 986V1002M2250.5 963V1008M2251.5 965V1014M2252.5 981V995M2253.5 984V1008M2254.5 974V1001M2255.5 975V1008M2256.5 978V1008M2257.5 966V1009M2258.5 985V999M2259.5 969V1008M2260.5 971V998M2261.5 983V1006M2262.5 987V1006M2263.5 973V1008M2264.5 987V1003M2265.5 974V1004M2266.5 975V1003M2267.5 983V998M2268.5 982V1004M2269.5 989V1004M2270.5 981V1005M2271.5 985V1002M2272.5 980V998M2273.5 978V996M2274.5 984V996M2275.5 983V1004M2276.5 984V996M2277.5 987V1000M2278.5 989V995M2279.5 985V999M2280.5 985V999M2281.5 983V998M2282.5 991V998M2283.5 983V1001M2284.5 985V1001M2285.5 989V999M2286.5 990V1000M2287.5 986V996M2288.5 989V999M2289.5 986V999M2290.5 988V997M2291.5 989V998M2292.5 990V997M2293.5 991V994M2294.5 987V995M2295.5 989V996M2296.5 990V992M2297.5 989V995M2298.5 987V993M2299.5 987V996M2300.5 988V997M2301.5 988V994M2302.5 990V996M2303.5 990V996M2304.5 988V995M2305.5 991V995M2306.5 988V995M2307.5 990V994M2308.5 988V993M2309.5 988V992M2310.5 990V994M2311.5 989V993M2312.5 989V993M2313.5 989V994M2314.5 987V994M2315.5 987V998M2316.5 966V994M2317.5 953V994M2318.5 955V997M2319.5 955V1000M2320.5 947V1005M2321.5 979V997M2322.5 948V1003M2323.5 980V1002M2324.5 979V1009M2325.5 957V999M2326.5 945V1006M2327.5 948V998M2328.5 965V995M2329.5 951V1020M2330.5 948V1013M2331.5 979V1011M2332.5 983V1023M2333.5 950V1017M2334.5 974V1012M2335.5 952V1006M2336.5 948V994M2337.5 975V1028M2338.5 955V1016M2339.5 951V1022M2340.5 950V1005M2341.5 953V1025M2342.5 966V1027M2343.5 979V1021M2344.5 975V1021M2345.5 964V994M2346.5 962V1009M2347.5 966V996M2348.5 959V1005M2349.5 963V1022M2350.5 977V1004M2351.5 988V1019M2352.5 988V1020M2353.5 988V1001M2354.5 984V1014M2355.5 978V1013M2356.5 972V1002M2357.5 983V1011M2358.5 990V1002M2359.5 975V999M2360.5 987V1006M2361.5 974V1004M2362.5 982V999M2363.5 985V1002M2364.5 990V1004M2365.5 990V1004M2366.5 987V994M2367.5 986V999M2368.5 985V1000M2369.5 981V999M2370.5 984V996M2371.5 988V993M2372.5 988V997M2373.5 987V995M2374.5 988V996M2375.5 986V995M2376.5 987V995M2377.5 988V995M2378.5 990V993M2379.5 988V992M2380.5 990V993M2381.5 989V993M2382.5 989V993M2383.5 989V994M2384.5 990V992M2385.5 988V993M2386.5 989V993M2387.5 990V994M2388.5 990V992M2389.5 991V992M2390.5 988V994M2391.5 989V994M2392.5 990V993M2393.5 990V993M2394.5 990V991M2395.5 988V993M2396.5 991V992M2397.5 988V992M2398.5 988V992M2399.5 990V993M2400.5 990V991M2401.5 990V993M2402.5 990V992M2403.5 989V993M2404.5 991V993M2405.5 989V993M2406.5 989V994M2407.5 989V992M2408.5 988V992M2409.5 988V992M2410.5 990V993M2411.5 989V993M2412.5 989V993M2413.5 989V993M2414.5 991V992M2415.5 989V993M2416.5 990V993M2417.5 989V992M2418.5 989V993M2419.5 989V992M2420.5 990V993M2421.5 991V993M2422.5 989V993M2423.5 989V993M2424.5 990V993M2425.5 990V993M2426.5 990V992M2427.5 990V991M2428.5 990V993M2429.5 989V993M2430.5 989V993M2431.5 990V992M2432.5 991V993M2433.5 989V992M2434.5 990V993M2435.5 989V993M2436.5 989V992M2437.5 990V993M2438.5 990V992M2439.5 989V992M2440.5 990V993M2441.5 990V993M2442.5 990V992M2443.5 989V992M2444.5 990V992M2445.5 990V992M2446.5 991V992M2447.5 990V993M2448.5 990V992M2449.5 989V992M2450.5 990V992M2451.5 990V993M2452.5 990V993M2453.5 989V992M2454.5 990V993M2455.5 989V991M2456.5 990V992M2457.5 990V991M2458.5 990V992M2459.5 990V993M2460.5 976V1010M2461.5 964V1023M2462.5 977V1048M2463.5 951V1005M2464.5 937V1045M2465.5 957V1043M2466.5 918V1046M2467.5 893V1052M2468.5 968V1077M2469.5 897V1086M2470.5 830V1142M2471.5 873V1072M2472.5 909V1124M2473.5 824V1150M2474.5 791V1128M2475.5 800V1073M2476.5 783V1103M2477.5 792V1156M2478.5 851V1226M2479.5 710V1181M2480.5 729V1250M2481.5 890V1049M2482.5 839V1224M2483.5 710V1272M2484.5 733V1027M2485.5 833V1257M2486.5 743V1272M2487.5 768V1220M2488.5 871V1094M2489.5 710V1102M2490.5 778V1107M2491.5 829V1180M2492.5 793V1174M2493.5 914V1122M2494.5 945V1131M2495.5 759V1095M2496.5 726V1177M2497.5 762V1158M2498.5 851V1223M2499.5 748V1163M2500.5 750V1231M2501.5 804V1237M2502.5 875V1105M2503.5 867V1070M2504.5 710V1052M2505.5 979V1197M2506.5 718V1226M2507.5 925V1118M2508.5 795V1171M2509.5 710V1118M2510.5 710V1133M2511.5 933V1241M2512.5 826V1206M2513.5 725V1041M2514.5 710V1179M2515.5 975V1217M2516.5 714V1097M2517.5 920V1118M2518.5 710V1189M2519.5 823V1128M2520.5 942V1073M2521.5 861V1021M2522.5 734V1175M2523.5 710V1049M2524.5 713V1055M2525.5 851V1038M2526.5 805V1020M2527.5 958V1198M2528.5 827V1050M2529.5 835V1116M2530.5 925V1145M2531.5 724V1049M2532.5 753V1094M2533.5 798V1162M2534.5 869V1012M2535.5 710V1011M2536.5 710V1108M2537.5 894V1152M2538.5 912V1145M2539.5 937V1048M2540.5 918V1049M2541.5 866V1107M2542.5 750V1135M2543.5 732V1082M2544.5 878V1125M2545.5 765V1114M2546.5 893V1117M2547.5 820V1112M2548.5 965V1146M2549.5 855V1097M2550.5 881V1134M2551.5 861V1133M2552.5 871V1009M2553.5 944V1107M2554.5 916V1092M2555.5 858V1046M2556.5 821V1093M2557.5 867V998M2558.5 942V1135M2559.5 958V1109M2560.5 875V1081M2561.5 880V1031M2562.5 812V1086M2563.5 956V1021M2564.5 847V1021M2565.5 851V1109M2566.5 902V1044M2567.5 866V1017M2568.5 823V1067M2569.5 848V1006M2570.5 912V1068M2571.5 952V996M2572.5 885V1033M2573.5 886V1087M2574.5 986V1058M2575.5 892V1041M2576.5 906V1002M2577.5 933V1029M2578.5 894V1056M2579.5 876V1001M2580.5 921V1048M2581.5 899V1074M2582.5 896V1025M2583.5 879V1009M2584.5 922V1071M2585.5 917V1055M2586.5 923V1034M2587.5 968V1050M2588.5 965V1029M2589.5 914V1045M2590.5 884V1049M2591.5 905V992M2592.5 926V1039M2593.5 932V1044M2594.5 888V1064M2595.5 892V1010M2596.5 888V995M2597.5 884V1011M2598.5 958V1060M2599.5 908V1012M2600.5 890V1025M2601.5 895V1030M2602.5 949V1044M2603.5 949V1037M2604.5 960V1026M2605.5 939V1055M2606.5 906V1027M2607.5 916V998M2608.5 945V1043M2609.5 879V1013M2610.5 923V1045M2611.5 988V1047M2612.5 885V1046M2613.5 953V1005M2614.5 891V1012M2615.5 902V1030M2616.5 917V1034M2617.5 982V1031M2618.5 906V1038M2619.5 945V1015M2620.5 951V1031M2621.5 962V1039M2622.5 958V1042M2623.5 947V1013M2624.5 926V1048M2625.5 913V1020M2626.5 965V1008M2627.5 902V1037M2628.5 957V1042M2629.5 949V1016M2630.5 933V1005M2631.5 972V1041M2632.5 939V1033M2633.5 961V1037M2634.5 985V1010M2635.5 913V1013M2636.5 914V1024M2637.5 969V1009M2638.5 965V1026M2639.5 905V1033M2640.5 924V1036M2641.5 934V1036M2642.5 935V995M2643.5 934V1036M2644.5 938V1001M2645.5 932V1004M2646.5 944V1011M2647.5 977V1025M2648.5 983V1020M2649.5 955V1011M2650.5 951V1015M2651.5 988V1019M2652.5 977V994M2653.5 970V1010M2654.5 978V1019M2655.5 978V1011M2656.5 982V997M2657.5 972V993M2658.5 979V1001M2659.5 962V1010M2660.5 980V1008M2661.5 968V1004M2662.5 986V1004M2663.5 973V996M2664.5 964V1007M2665.5 988V1000M2666.5 970V1006M2667.5 965V996M2668.5 971V1006M2669.5 980V1004M2670.5 975V996M2671.5 977V1000M2672.5 973V1000M2673.5 971V999M2674.5 981V993M2675.5 978V995M2676.5 984V993M2677.5 978V1000M2678.5 990V991M2679.5 984V994M2680.5 978V994M2681.5 984V996M2682.5 986V997M2683.5 979V998M2684.5 983V993M2685.5 984V997M2686.5 984V997M2687.5 990V996M2688.5 991V995M2689.5 983V994M2690.5 987V992M2691.5 986V991M2692.5 988V995M2693.5 984V993M2694.5 986V992M2695.5 989V991M2696.5 988V994M2697.5 987V993M2698.5 986V991M2699.5 990V992M2700.5 988V992M2701.5 990V992M2702.5 988V991M2703.5 988V993M2704.5 988V991M2705.5 989V993M2706.5 988V993M2707.5 989V992M2708.5 988V993M2709.5 988V992M2710.5 990V993M2711.5 989V993M2712.5 989V993M2713.5 988V992M2714.5 988V991M2715.5 991V992M2716.5 990V992M2717.5 990V993M2718.5 990V993M2719.5 989V993M2720.5 989V992M2721.5 991V992M2722.5 991V993M2723.5 990V993M2724.5 990V992M2725.5 990V993M2726.5 990V994M2727.5 985V994M2728.5 981V997M2729.5 987V998M2730.5 987V998M2731.5 963V1007M2732.5 979V1004M2733.5 957V1021M2734.5 990V1006M2735.5 978V1011M2736.5 947V1020M2737.5 978V1012M2738.5 954V1008M2739.5 967V1021M2740.5 972V1018M2741.5 941V994M2742.5 943V1018M2743.5 937V998M2744.5 967V1009M2745.5 969V994M2746.5 969V1008M2747.5 940V1026M2748.5 975V1017M2749.5 981V1011M2750.5 950V1006M2751.5 951V1011M2752.5 975V1002M2753.5 957V1014M2754.5 951V1019M2755.5 972V1003M2756.5 971V1018M2757.5 968V1003M2758.5 963V997M2759.5 972V992M2760.5 969V1010M2761.5 966V993M2762.5 978V997M2763.5 975V1007M2764.5 980V1009M2765.5 978V1006M2766.5 973V1003M2767.5 984V996M2768.5 978V998M2769.5 979V1002M2770.5 980V992M2771.5 988V997M2772.5 983V997M2773.5 984V996M2774.5 991V997M2775.5 989V993M2776.5 989V994M2777.5 989V994M2778.5 990V995M2779.5 990V998M2780.5 989V991M2781.5 990V997M2782.5 990V995M2783.5 989V993M2784.5 990V997M2785.5 989V996M2786.5 989V998M2787.5 989V997M2788.5 991V996M2789.5 990V997M2790.5 989V993M2791.5 990V993M2792.5 989V997M2793.5 991V995M2794.5 991V992M2795.5 990V993M2796.5 989V995M2797.5 989V994M2798.5 991V995M2799.5 991V996M2800.5 989V992M2801.5 991V993M2802.5 989V996M2803.5 989V992M2804.5 989V992M2805.5 989V996M2806.5 989V995M2807.5 991V995M2808.5 989V993M2809.5 989V993M2810.5 989V995M2811.5 989V996M2812.5 989V993M2813.5 989V994M2814.5 990V993M2815.5 989V993M2816.5 989V995M2817.5 989V994M2818.5 991V992M2819.5 989V995M2820.5 989V995M2821.5 989V992M2822.5 989V994M2823.5 989V993M2824.5 990V992M2825.5 989V992M2826.5 990V994M2827.5 989V992M2828.5 989V994M2829.5 989V992M2830.5 991V994M2831.5 989V992M2832.5 989V993M2833.5 990V992M2834.5 990V994M2835.5 989V994M2836.5 989V992M2837.5 989V992M2838.5 990V993M2839.5 990V994M2840.5 991V992M2841.5 990V992M2842.5 989V991M2843.5 990V992M2844.5 990V993M2845.5 990V993M2846.5 990V993M2847.5 990V992M2848.5 989V992M2849.5 985V997M2850.5 979V998M2851.5 988V998M2852.5 975V1005M2853.5 974V1006M2854.5 977V1000M2855.5 972V1007M2856.5 983V1006M2857.5 978V991M2858.5 979V996M2859.5 974V1005M2860.5 967V999M2861.5 969V1000M2862.5 962V1013M2863.5 976V1019M2864.5 975V995M2865.5 987V1021M2866.5 960V1001M2867.5 959V1020M2868.5 958V1012M2869.5 975V1003M2870.5 954V1028M2871.5 971V1008M2872.5 958V1026M2873.5 973V1025M2874.5 944V1006M2875.5 982V993M2876.5 971V995M2877.5 949V1010M2878.5 969V1001M2879.5 958V1004M2880.5 965V1016M2881.5 986V998M2882.5 960V1011M2883.5 975V1000M2884.5 971V993M2885.5 978V1009M2886.5 986V1004M2887.5 972V1005M2888.5 988V994M2889.5 983V1003M2890.5 978V997M2891.5 982V993M2892.5 988V998M2893.5 989V994M2894.5 987V992M2895.5 985V993M2896.5 986V992M2897.5 987V992M2898.5 985V994M2899.5 991V992M2900.5 989V994M2901.5 989V994M2902.5 989V994M2903.5 987V992M2904.5 991V991M2905.5 987V993M2906.5 987V991M2907.5 989V993M2908.5 989V994M2909.5 987V993M2910.5 987V993M2911.5 987V993M2912.5 986V991M2913.5 988V993M2914.5 989V993M2915.5 987V994M2916.5 986V994M2917.5 989V993M2918.5 989V992M2919.5 989V994M2920.5 987V992M2921.5 989V994M2922.5 988V994M2923.5 989V994M2924.5 990V994M2925.5 988V993M2926.5 987V992M2927.5 987V992M2928.5 989V994M2929.5 988V991M2930.5 990V994M2931.5 989V993M2932.5 990V994M2933.5 987V993M2934.5 987V993M2935.5 989V993M2936.5 990V993M2937.5 988V993M2938.5 988V994M2939.5 987V993M2940.5 987V993M2941.5 989V993M2942.5 988V994M2943.5 990V993M2944.5 988V992M2945.5 987V994M2946.5 989V993M2947.5 990V992M2948.5 991V992M2949.5 988V992M2950.5 988V991M2951.5 990V992M2952.5 989V992M2953.5 990V993M2954.5 989V993M2955.5 990V993M2956.5 989V993M2957.5 989V992M2958.5 990V992M2959.5 990V991M2960.5 990V993M2961.5 989V992M2962.5 989V992M2963.5 990V992M2964.5 988V993M2965.5 989V993M2966.5 989V993M2967.5 988V992M2968.5 988V991M2969.5 988V993M2970.5 989V993M2971.5 989V993M2972.5 989V993M2973.5 989V992M2974.5 990V992M2975.5 990V992M2976.5 990V992M2977.5 989V993M2978.5 990V993M2979.5 989V993M2980.5 990V993M2981.5 989V993M2982.5 990V993M2983.5 990V991M2984.5 990V993M2985.5 990V993M2986.5 990V993M2987.5 989V993M2988.5 989V991M2989.5 991V996M2990.5 976V1009M2991.5 951V1012M2992.5 938V997M2993.5 989V1008M2994.5 910V1014M2995.5 869V1016M2996.5 904V1010M2997.5 935V1029M2998.5 953V1013M2999.5 852V1047M3000.5 898V1025M3001.5 947V1032M3002.5 911V1065M3003.5 956V1000M3004.5 859V1055M3005.5 920V1042M3006.5 911V1061M3007.5 819V1069M3008.5 840V1021M3009.5 813V1004M3010.5 975V1040M3011.5 855V1078M3012.5 811V1038M3013.5 820V1118M3014.5 827V1033M3015.5 962V1091M3016.5 866V1063M3017.5 875V1016M3018.5 866V1070M3019.5 921V1003M3020.5 840V1128M3021.5 945V1112M3022.5 942V1070M3023.5 802V1027M3024.5 928V1129M3025.5 846V1069M3026.5 834V1151M3027.5 900V1127M3028.5 932V1094M3029.5 942V1133M3030.5 971V1062M3031.5 846V1124M3032.5 818V1097M3033.5 907V1104M3034.5 975V1067M3035.5 919V1104M3036.5 788V1101M3037.5 820V1113M3038.5 870V1050M3039.5 917V1099M3040.5 806V999M3041.5 822V1130M3042.5 901V1087M3043.5 937V1016M3044.5 830V1155M3045.5 837V1033M3046.5 976V1164M3047.5 861V1172M3048.5 911V1154M3049.5 785V1054M3050.5 947V1102M3051.5 837V1145M3052.5 816V1061M3053.5 960V1135M3054.5 864V1034M3055.5 899V1043M3056.5 793V1157M3057.5 933V1121M3058.5 784V1131M3059.5 810V1088M3060.5 911V1146M3061.5 806V1034M3062.5 927V1097M3063.5 937V1140M3064.5 904V1120M3065.5 907V1046M3066.5 863V1037M3067.5 806V1062M3068.5 799V1096M3069.5 892V1121M3070.5 859V1129M3071.5 871V1030M3072.5 894V1042M3073.5 902V1093M3074.5 901V1061M3075.5 844V1065M3076.5 838V1110M3077.5 828V1091M3078.5 881V1034M3079.5 859V1074M3080.5 876V1034M3081.5 886V1016M3082.5 889V1058M3083.5 969V1106M3084.5 851V1102M3085.5 976V1033M3086.5 908V1068M3087.5 950V1030M3088.5 929V1103M3089.5 889V1032M3090.5 862V1064M3091.5 853V1002M3092.5 892V1097M3093.5 931V1049M3094.5 950V1087M3095.5 933V1099M3096.5 977V1058M3097.5 871V1061M3098.5 875V1082M3099.5 866V1015M3100.5 857V1097M3101.5 891V1061M3102.5 985V1086M3103.5 940V1095M3104.5 916V1032M3105.5 925V1037M3106.5 870V1055M3107.5 886V1030M3108.5 869V1094M3109.5 898V1064M3110.5 859V1042M3111.5 980V1014M3112.5 903V1086M3113.5 932V998M3114.5 947V1093M3115.5 970V1101M3116.5 943V1022M3117.5 906V1097M3118.5 899V1048M3119.5 905V1045M3120.5 944V1100M3121.5 910V1030M3122.5 857V1095M3123.5 922V1008M3124.5 865V1045M3125.5 861V1011M3126.5 847V1032M3127.5 844V1082M3128.5 967V1092M3129.5 862V1087M3130.5 919V1036M3131.5 927V1077M3132.5 871V1097M3133.5 926V1050M3134.5 979V1092M3135.5 849V1080M3136.5 866V1097M3137.5 973V1066M3138.5 864V1091M3139.5 944V1084M3140.5 868V1024M3141.5 905V1066M3142.5 861V1091M3143.5 864V1078M3144.5 895V1015M3145.5 837V1026M3146.5 814V1030M3147.5 916V1026M3148.5 894V1094M3149.5 828V1094M3150.5 986V1086M3151.5 857V1079M3152.5 882V1002M3153.5 818V1102M3154.5 937V1054M3155.5 962V1026M3156.5 928V1097M3157.5 932V1098M3158.5 844V1085M3159.5 891V1050M3160.5 973V1046M3161.5 851V1035M3162.5 913V1042M3163.5 852V1035M3164.5 917V1073M3165.5 953V1035M3166.5 875V1065M3167.5 937V1091M3168.5 917V1093M3169.5 805V1058M3170.5 870V1086M3171.5 934V1032M3172.5 925V1026M3173.5 919V1071M3174.5 897V1120M3175.5 889V1101M3176.5 914V1102M3177.5 868V1085M3178.5 972V1077M3179.5 949V1074M3180.5 925V1000M3181.5 873V1083M3182.5 984V1070M3183.5 964V1044M3184.5 927V1083M3185.5 905V1066M3186.5 815V1047M3187.5 952V1035M3188.5 857V1031M3189.5 837V1096M3190.5 872V1092M3191.5 924V1064M3192.5 973V1085M3193.5 848V1042M3194.5 867V1075M3195.5 922V1061M3196.5 890V1057M3197.5 869V1016M3198.5 889V1023M3199.5 976V1078M3200.5 860V1035M3201.5 911V1038M3202.5 829V1039M3203.5 823V1022M3204.5 947V1033M3205.5 867V1005M3206.5 834V1113M3207.5 830V1089M3208.5 876V1101M3209.5 827V1109M3210.5 966V1114M3211.5 905V1091M3212.5 938V1088M3213.5 891V1052M3214.5 915V1096M3215.5 848V1063M3216.5 945V1103M3217.5 864V1088M3218.5 960V1104M3219.5 911V1085M3220.5 852V1014M3221.5 874V1106M3222.5 870V1058M3223.5 884V1061M3224.5 835V1032M3225.5 836V1059M3226.5 979V1000M3227.5 951V1066M3228.5 828V1011M3229.5 841V1082M3230.5 863V1051M3231.5 977V1097M3232.5 875V1063M3233.5 879V1102M3234.5 965V1056M3235.5 946V1095M3236.5 931V1059M3237.5 954V1062M3238.5 915V1073M3239.5 934V1054M3240.5 955V1052M3241.5 910V1036M3242.5 944V1040M3243.5 946V1015M3244.5 966V1044M3245.5 952V1040M3246.5 965V1034M3247.5 987V1039M3248.5 966V1014M3249.5 990V1017M3250.5 985V998M3251.5 979V1011M3252.5 970V1014M3253.5 991V1007M3254.5 968V1016M3255.5 969V1006M3256.5 973V1004M3257.5 966V1008M3258.5 966V1005M3259.5 972V1008M3260.5 976V1004M3261.5 984V1002M3262.5 965V1006M3263.5 967V994M3264.5 973V1004M3265.5 985V997M3266.5 963V998M3267.5 965V996M3268.5 974V997M3269.5 972V995M3270.5 968V998M3271.5 981V1001M3272.5 983V1010M3273.5 978V1009M3274.5 946V1008M3275.5 944V1037M3276.5 953V1043M3277.5 963V1030M3278.5 970V1015M3279.5 898V1071M3280.5 926V1055M3281.5 937V1053" stroke="#9a9a9a" stroke-width="1"/><path d="M721.5 985V993M722.5 985V992M723.5 987V997M724.5 989V996M725.5 987V996M726.5 987V996M727.5 985V998M728.5 988V998M729.5 989V998M730.5 984V998M731.5 989V1000M732.5 984V992M733.5 988V996M734.5 981V996M735.5 985V993M736.5 987V991M737.5 984V994M738.5 985V994M739.5 988V992M740.5 988V992M741.5 988V993M742.5 988V992M743.5 990V995M744.5 983V995M745.5 987V995M746.5 984V995M747.5 990V994M748.5 986V995M749.5 985V995M750.5 985V996M751.5 986V995M752.5 989V993M753.5 987V995M754.5 985V994M755.5 989V993M756.5 987V993M757.5 988V993M758.5 987V993M759.5 989V994M760.5 988V994M761.5 988V994M762.5 988V994M763.5 990V993M764.5 987V993M765.5 988V996M766.5 988V992M767.5 988V991M768.5 989V993M769.5 990V993M770.5 988V993M771.5 990V992M772.5 986V993M773.5 988V994M774.5 990V992M775.5 988V992M776.5 991V993M777.5 988V994M778.5 986V993M779.5 990V992M780.5 987V993M781.5 990V994M782.5 988V992M783.5 990V993M784.5 991V993M785.5 988V993M786.5 987V992M787.5 990V994M788.5 987V993M789.5 990V993M790.5 989V994M791.5 988V992M792.5 990V994M793.5 988V994M794.5 990V994M795.5 990V993M796.5 990V994M797.5 990V994M798.5 988V992M799.5 987V994M800.5 990V991M801.5 990V994M802.5 989V994M803.5 989V992M804.5 989V993M805.5 988V995M806.5 990V994M807.5 988V992M808.5 990V994M809.5 990V993M810.5 990V992M811.5 988V994M812.5 990V992M813.5 989V992M814.5 989V993M815.5 989V991M816.5 990V992M817.5 989V994M818.5 987V993M819.5 989V992M820.5 990V993M821.5 989V993M822.5 990V993M823.5 990V991M824.5 989V994M825.5 990V995M826.5 988V993M827.5 990V992M828.5 989V993M829.5 989V992M830.5 990V995M831.5 989V993M832.5 990V993M833.5 990V992M834.5 989V993M835.5 991V994M836.5 988V993M837.5 988V992M838.5 990V993M839.5 990V992M840.5 988V993M841.5 990V993M842.5 988V994M843.5 939V1008M844.5 906V1042M845.5 849V1030M846.5 908V1009M847.5 854V1044M848.5 932V1040M849.5 912V1041M850.5 937V1052M851.5 949V1036M852.5 915V1046M853.5 888V1091M854.5 902V1009M855.5 944V1048M856.5 899V1039M857.5 921V1104M858.5 929V1103M859.5 865V1035M860.5 933V1059M861.5 935V1101M862.5 932V1096M863.5 913V1084M864.5 921V1104M865.5 935V1046M866.5 966V1115M867.5 868V1050M868.5 846V1064M869.5 931V1094M870.5 942V1108M871.5 940V1053M872.5 861V1038M873.5 881V1129M874.5 927V1155M875.5 889V1033M876.5 869V1076M877.5 948V1055M878.5 952V1049M879.5 918V1065M880.5 920V1040M881.5 946V1080M882.5 890V1078M883.5 943V1083M884.5 931V1071M885.5 909V1044M886.5 869V1046M887.5 918V1045M888.5 864V1103M889.5 914V1087M890.5 968V1074M891.5 914V1090M892.5 854V1085M893.5 925V1068M894.5 933V1026M895.5 948V1033M896.5 876V1083M897.5 925V1060M898.5 864V1084M899.5 911V1046M900.5 908V1047M901.5 934V1065M902.5 921V1094M903.5 973V1074M904.5 884V1045M905.5 935V1059M906.5 876V1043M907.5 884V1035M908.5 921V1071M909.5 885V1087M910.5 870V1048M911.5 916V1047M912.5 923V1032M913.5 885V1059M914.5 892V1102M915.5 943V1024M916.5 910V1045M917.5 884V1079M918.5 873V1103M919.5 945V1065M920.5 925V1070M921.5 913V1063M922.5 883V1065M923.5 904V1084M924.5 872V1043M925.5 931V1026M926.5 897V1052M927.5 916V1087M928.5 884V1074M929.5 894V1093M930.5 943V1104M931.5 947V1057M932.5 898V1071M933.5 931V1099M934.5 950V1018M935.5 934V1048M936.5 866V1080M937.5 926V1089M938.5 945V1049M939.5 910V1041M940.5 888V1073M941.5 877V1037M942.5 868V1058M943.5 872V1027M944.5 889V1045M945.5 866V1047M946.5 863V1057M947.5 939V1090M948.5 940V1018M949.5 881V1076M950.5 929V1088M951.5 883V1067M952.5 928V1042M953.5 966V1040M954.5 919V1018M955.5 903V1024M956.5 862V1020M957.5 879V1032M958.5 866V1085M959.5 928V1110M960.5 936V1057M961.5 936V1025M962.5 936V1043M963.5 962V1030M964.5 956V1028M965.5 970V1035M966.5 970V1013M967.5 977V1041M968.5 969V1032M969.5 976V1029M970.5 975V1010M971.5 976V1012M972.5 970V1008M973.5 975V1015M974.5 972V1009M975.5 980V1003M976.5 977V1026M977.5 980V998M978.5 962V1019M979.5 979V1018M980.5 972V1012M981.5 981V999M982.5 982V1016M983.5 970V1010M984.5 982V1006M985.5 971V995M986.5 966V1009M987.5 980V1013M988.5 982V1003M989.5 981V1011M990.5 982V1002M991.5 986V1013M992.5 984V1000M993.5 982V997M994.5 988V1000M995.5 983V1001M996.5 984V999M997.5 984V997M998.5 986V998M999.5 981V1000M1000.5 987V997M1001.5 989V997M1002.5 985V996M1003.5 989V996M1004.5 990V994M1005.5 990V992M1006.5 988V995M1007.5 990V993M1008.5 989V993M1009.5 989V993M1010.5 989V993M1011.5 988V994M1012.5 989V993M1013.5 989V992M1014.5 990V994M1015.5 989V992M1016.5 989V993M1017.5 990V993M1018.5 990V992M1019.5 990V992M1020.5 989V992M1021.5 990V992M1022.5 990V993M1023.5 990V992M1024.5 989V992M1025.5 990V993M1026.5 989V993M1027.5 988V992M1028.5 989V993M1029.5 989V992M1030.5 989V993M1031.5 990V992M1032.5 989V993M1033.5 988V993M1034.5 989V993M1035.5 990V993M1036.5 989V993M1037.5 990V993M1038.5 990V994M1039.5 990V992M1040.5 988V993M1041.5 990V993M1042.5 989V993M1043.5 990V994M1044.5 990V992M1045.5 990V992M1046.5 990V992M1047.5 990V993M1048.5 990V993M1049.5 989V993M1050.5 990V993M1051.5 990V992M1052.5 990V993M1053.5 990V993M1054.5 990V992M1055.5 989V992M1056.5 988V992M1057.5 989V992M1058.5 990V993M1059.5 990V993M1060.5 990V992M1061.5 990V992M1062.5 989V993M1063.5 990V993M1064.5 990V994M1065.5 990V994M1066.5 990V992M1067.5 989V992M1068.5 990V993M1069.5 990V992M1070.5 990V993M1071.5 989V992M1072.5 989V992M1073.5 988V992M1074.5 989V993M1075.5 990V992M1076.5 990V993M1077.5 990V993M1078.5 989V993M1079.5 990V992M1080.5 990V992M1081.5 990V993M1082.5 990V993M1083.5 989V994M1084.5 990V992M1085.5 990V994M1086.5 990V993M1087.5 990V992M1088.5 989V992M1089.5 989V993M1090.5 990V994M1091.5 990V993M1092.5 990V993M1093.5 990V992M1094.5 989V994M1095.5 989V993M1096.5 989V992M1097.5 990V993M1098.5 977V1022M1099.5 958V1024M1100.5 927V1064M1101.5 930V1155M1102.5 899V1050M1103.5 898V1034M1104.5 935V1091M1105.5 881V1150M1106.5 891V1074M1107.5 907V1022M1108.5 925V1082M1109.5 964V1038M1110.5 937V1128M1111.5 914V1013M1112.5 954V1081M1113.5 873V1101M1114.5 904V1078M1115.5 941V1093M1116.5 946V1079M1117.5 923V1075M1118.5 935V1130M1119.5 916V1080M1120.5 882V1095M1121.5 941V1070M1122.5 936V1058M1123.5 907V1069M1124.5 918V1147M1125.5 944V1089M1126.5 890V1056M1127.5 923V1048M1128.5 916V1117M1129.5 903V1068M1130.5 921V1089M1131.5 933V1066M1132.5 895V1078M1133.5 830V1048M1134.5 957V1066M1135.5 893V1100M1136.5 900V1117M1137.5 899V1092M1138.5 901V1138M1139.5 970V1046M1140.5 931V1059M1141.5 832V1057M1142.5 866V1038M1143.5 939V1099M1144.5 913V1040M1145.5 903V1122M1146.5 903V1114M1147.5 928V1107M1148.5 841V1043M1149.5 902V1049M1150.5 856V1024M1151.5 898V1123M1152.5 931V1079M1153.5 968V1124M1154.5 896V1028M1155.5 888V1057M1156.5 924V1039M1157.5 959V1071M1158.5 898V1081M1159.5 923V1082M1160.5 963V1094M1161.5 940V1028M1162.5 962V1083M1163.5 980V1074M1164.5 919V1088M1165.5 900V1054M1166.5 884V1061M1167.5 901V1063M1168.5 897V1077M1169.5 910V1044M1170.5 930V1067M1171.5 917V1073M1172.5 945V1050M1173.5 962V1040M1174.5 959V1079M1175.5 923V1032M1176.5 929V1069M1177.5 876V1046M1178.5 962V1067M1179.5 969V1056M1180.5 914V1052M1181.5 923V1018M1182.5 930V1012M1183.5 957V1059M1184.5 916V1075M1185.5 962V1081M1186.5 940V1065M1187.5 893V1046M1188.5 937V1054M1189.5 947V1042M1190.5 926V1030M1191.5 937V1089M1192.5 958V1076M1193.5 905V1034M1194.5 944V1054M1195.5 950V1036M1196.5 943V1029M1197.5 940V1027M1198.5 958V1076M1199.5 953V1054M1200.5 957V1071M1201.5 935V1039M1202.5 949V1050M1203.5 930V1041M1204.5 888V1046M1205.5 952V1055M1206.5 972V1050M1207.5 976V1053M1208.5 953V1033M1209.5 941V1024M1210.5 930V1013M1211.5 958V1024M1212.5 883V1007M1213.5 958V1039M1214.5 944V1065M1215.5 909V1028M1216.5 959V1065M1217.5 877V1004M1218.5 940V1042M1219.5 907V1076M1220.5 898V1035M1221.5 959V1032M1222.5 931V1078M1223.5 898V1054M1224.5 946V1085M1225.5 941V1020M1226.5 894V1052M1227.5 918V1028M1228.5 911V997M1229.5 929V1028M1230.5 946V1025M1231.5 967V1066M1232.5 907V1034M1233.5 864V1028M1234.5 983V1025M1235.5 938V1045M1236.5 905V1016M1237.5 913V1045M1238.5 874V1019M1239.5 885V1024M1240.5 897V1026M1241.5 917V1038M1242.5 915V1073M1243.5 927V1030M1244.5 927V1035M1245.5 942V1012M1246.5 947V1044M1247.5 896V1027M1248.5 882V1036M1249.5 898V1035M1250.5 944V1059M1251.5 916V1065M1252.5 904V1044M1253.5 902V1065M1254.5 916V1047M1255.5 906V1061M1256.5 901V1049M1257.5 917V1070M1258.5 892V1067M1259.5 937V1054M1260.5 928V1021M1261.5 891V1018M1262.5 929V1010M1263.5 972V1036M1264.5 896V1019M1265.5 976V1050M1266.5 917V1045M1267.5 861V1041M1268.5 938V1050M1269.5 944V1042M1270.5 928V1030M1271.5 883V1067M1272.5 921V1008M1273.5 921V1036M1274.5 924V1049M1275.5 945V1078M1276.5 937V1025M1277.5 963V1080M1278.5 906V1031M1279.5 944V1020M1280.5 960V1029M1281.5 940V1034M1282.5 937V1021M1283.5 910V1006M1284.5 900V1038M1285.5 934V1027M1286.5 888V1023M1287.5 969V1023M1288.5 931V1034M1289.5 874V1026M1290.5 901V1032M1291.5 918V1059M1292.5 965V1039M1293.5 887V1014M1294.5 959V1062M1295.5 887V1030M1296.5 926V1060M1297.5 949V1025M1298.5 889V1060M1299.5 901V1017M1300.5 890V1029M1301.5 937V1048M1302.5 924V1037M1303.5 923V1071M1304.5 904V1016M1305.5 907V1031M1306.5 877V1027M1307.5 969V1051M1308.5 904V1037M1309.5 925V1038M1310.5 950V1017M1311.5 956V1024M1312.5 947V1020M1313.5 895V1016M1314.5 933V1063M1315.5 908V1028M1316.5 962V1065M1317.5 980V1080M1318.5 932V1032M1319.5 933V1026M1320.5 942V1066M1321.5 945V1026M1322.5 951V1019M1323.5 963V1016M1324.5 948V1070M1325.5 941V1027M1326.5 951V1068M1327.5 955V1041M1328.5 964V1032M1329.5 947V1043M1330.5 919V1076M1331.5 939V1024M1332.5 951V1030M1333.5 981V1053M1334.5 944V1063M1335.5 959V1049M1336.5 932V1009M1337.5 956V1035M1338.5 957V1061M1339.5 949V1024M1340.5 943V1081M1341.5 968V1004M1342.5 925V1061M1343.5 920V1065M1344.5 947V1054M1345.5 960V1060M1346.5 933V1006M1347.5 943V1046M1348.5 943V1067M1349.5 968V1021M1350.5 961V1019M1351.5 949V1031M1352.5 942V1048M1353.5 950V1070M1354.5 918V1057M1355.5 956V1013M1356.5 944V1050M1357.5 947V1033M1358.5 954V1020M1359.5 948V1063M1360.5 953V1027M1361.5 917V1040M1362.5 917V1035M1363.5 956V1014M1364.5 932V1020M1365.5 929V1068M1366.5 961V1033M1367.5 941V1042M1368.5 959V1019M1369.5 959V1027M1370.5 958V1026M1371.5 944V1028M1372.5 921V1060M1373.5 930V1019M1374.5 938V1022M1375.5 974V1041M1376.5 964V1035M1377.5 959V1024M1378.5 909V1050M1379.5 929V1028M1380.5 944V1024M1381.5 948V1043M1382.5 925V1024M1383.5 905V1047M1384.5 962V1025M1385.5 943V1071M1386.5 945V1058M1387.5 921V1028M1388.5 950V1063M1389.5 945V1052M1390.5 962V1024M1391.5 954V1013M1392.5 922V1039M1393.5 938V1067M1394.5 929V1037M1395.5 923V1043M1396.5 923V1035M1397.5 945V1045M1398.5 931V1047M1399.5 958V1050M1400.5 920V1071M1401.5 937V1075M1402.5 896V1052M1403.5 936V1055M1404.5 957V1017M1405.5 948V1018M1406.5 920V1058M1407.5 895V1012M1408.5 932V1027M1409.5 962V1024M1410.5 962V1013M1411.5 939V1080M1412.5 970V1031M1413.5 929V1031M1414.5 976V1043M1415.5 935V1039M1416.5 927V1056M1417.5 950V1021M1418.5 943V1034M1419.5 922V1037M1420.5 951V1030M1421.5 958V1061M1422.5 938V1007M1423.5 900V1072M1424.5 940V1050M1425.5 915V1075M1426.5 976V1028M1427.5 944V1069M1428.5 951V1048M1429.5 956V1032M1430.5 958V1044M1431.5 931V1040M1432.5 949V1020M1433.5 954V1057M1434.5 895V1059M1435.5 917V1043M1436.5 909V1025M1437.5 909V1016M1438.5 896V1049M1439.5 936V1009M1440.5 937V1027M1441.5 934V1049M1442.5 914V1049M1443.5 920V1011M1444.5 952V1057M1445.5 977V1057M1446.5 923V1040M1447.5 943V1021M1448.5 948V1073M1449.5 911V1051M1450.5 910V1064M1451.5 943V1064M1452.5 956V1029M1453.5 911V1020M1454.5 940V1057M1455.5 954V1034M1456.5 920V1063M1457.5 957V1082M1458.5 981V1043M1459.5 904V1063M1460.5 950V1057M1461.5 938V1070M1462.5 942V1012M1463.5 916V1029M1464.5 911V1013M1465.5 897V1061M1466.5 919V1024M1467.5 955V1049M1468.5 961V1004M1469.5 955V1028M1470.5 943V1042M1471.5 970V1011M1472.5 933V1028M1473.5 934V1028M1474.5 957V1030M1475.5 939V1024M1476.5 962V1064M1477.5 965V1018M1478.5 962V1039M1479.5 955V1060M1480.5 956V1059M1481.5 944V1011M1482.5 916V1017M1483.5 947V1055M1484.5 958V1019M1485.5 952V1028M1486.5 963V1052M1487.5 905V1048M1488.5 949V1032M1489.5 951V1034M1490.5 944V1060M1491.5 951V1029M1492.5 937V1021M1493.5 949V1034M1494.5 959V1023M1495.5 919V1059M1496.5 956V1045M1497.5 917V1068M1498.5 949V1016M1499.5 936V1031M1500.5 936V1039M1501.5 952V1006M1502.5 951V1007M1503.5 925V1029M1504.5 937V1023M1505.5 963V1075M1506.5 962V1045M1507.5 963V1044M1508.5 938V1053M1509.5 962V1049M1510.5 966V1033M1511.5 927V1022M1512.5 940V1037M1513.5 952V1039M1514.5 936V1050M1515.5 939V1039M1516.5 919V1014M1517.5 937V1025M1518.5 966V1049M1519.5 941V1024M1520.5 926V1046M1521.5 946V1043M1522.5 975V1064M1523.5 913V1024M1524.5 911V1045M1525.5 958V1026M1526.5 975V1026M1527.5 901V1046M1528.5 947V1025M1529.5 919V1021M1530.5 914V1043M1531.5 938V1022M1532.5 913V1039M1533.5 935V1021M1534.5 920V1021M1535.5 943V1043M1536.5 914V1031M1537.5 913V1042M1538.5 952V1029M1539.5 958V1031M1540.5 945V1042M1541.5 947V1012M1542.5 960V1051M1543.5 963V1027M1544.5 957V1037M1545.5 951V1028M1546.5 976V1022M1547.5 956V1036M1548.5 931V1016M1549.5 950V1036M1550.5 936V1028M1551.5 926V1024M1552.5 952V1028M1553.5 961V1043M1554.5 967V1061M1555.5 974V1071M1556.5 952V1031M1557.5 919V1027M1558.5 936V1039M1559.5 964V1025M1560.5 961V1061M1561.5 948V1016M1562.5 977V1040M1563.5 975V1022M1564.5 968V1055M1565.5 918V1003M1566.5 956V1022M1567.5 945V1017M1568.5 922V1016M1569.5 948V1041M1570.5 905V1037M1571.5 910V1046M1572.5 945V1027M1573.5 975V1042M1574.5 960V1046M1575.5 934V1035M1576.5 936V1070M1577.5 908V1034M1578.5 933V1064M1579.5 948V1012M1580.5 913V1023M1581.5 967V1047M1582.5 971V1013M1583.5 937V1023M1584.5 921V1009M1585.5 967V1033M1586.5 929V1060M1587.5 954V1025M1588.5 923V1044M1589.5 955V1028M1590.5 966V1054M1591.5 915V1012M1592.5 946V1003M1593.5 949V1029M1594.5 938V1046M1595.5 967V1017M1596.5 964V1032M1597.5 942V1027M1598.5 936V1025M1599.5 945V1058M1600.5 951V1040M1601.5 908V1039M1602.5 920V1046M1603.5 963V1036M1604.5 969V1027M1605.5 951V1041M1606.5 959V1028M1607.5 962V1033M1608.5 932V1047M1609.5 965V1014M1610.5 955V1048M1611.5 962V1035M1612.5 919V1060M1613.5 945V1056M1614.5 927V1028M1615.5 957V1033M1616.5 961V1023M1617.5 977V1050M1618.5 937V1013M1619.5 937V1052M1620.5 964V1033M1621.5 928V1047M1622.5 969V1025M1623.5 939V1048M1624.5 921V1049M1625.5 930V1050M1626.5 959V1065M1627.5 943V1060M1628.5 937V1029M1629.5 947V1047M1630.5 965V1014M1631.5 964V1049M1632.5 956V1026M1633.5 974V1027M1634.5 947V1016M1635.5 947V1060M1636.5 957V1018M1637.5 945V1017M1638.5 954V1056M1639.5 923V1027M1640.5 940V1008M1641.5 954V1034M1642.5 925V1059M1643.5 936V1005M1644.5 928V1036M1645.5 943V1008M1646.5 935V1040M1647.5 952V1017M1648.5 938V1010M1649.5 967V1052M1650.5 956V1057M1651.5 960V1033M1652.5 966V1040M1653.5 967V1010M1654.5 944V1032M1655.5 967V1039M1656.5 936V1002M1657.5 965V1040M1658.5 958V1001M1659.5 943V1019M1660.5 962V1034M1661.5 945V1028M1662.5 966V1047M1663.5 965V1041M1664.5 936V1022M1665.5 985V1037M1666.5 966V1043M1667.5 946V1032M1668.5 974V1010M1669.5 949V1014M1670.5 948V1000M1671.5 979V1026M1672.5 975V1021M1673.5 961V1030M1674.5 976V1015M1675.5 944V1027M1676.5 959V1015M1677.5 946V1013M1678.5 954V1024M1679.5 964V1030M1680.5 968V1015M1681.5 975V1010M1682.5 980V1021M1683.5 964V1008M1684.5 966V1012M1685.5 972V1027M1686.5 956V1006M1687.5 964V1005M1688.5 980V1013M1689.5 978V1036M1690.5 977V1019M1691.5 972V1011M1692.5 960V1005M1693.5 981V1004M1694.5 972V1024M1695.5 973V1030M1696.5 958V1013M1697.5 971V1006M1698.5 968V1010M1699.5 968V1019M1700.5 982V999M1701.5 960V1015M1702.5 980V1026M1703.5 975V1017M1704.5 965V998M1705.5 975V1012M1706.5 982V1012M1707.5 960V1019M1708.5 969V996M1709.5 970V1010M1710.5 980V1009M1711.5 971V1014M1712.5 953V1029M1713.5 984V1017M1714.5 976V1027M1715.5 969V1014M1716.5 970V1012M1717.5 959V1019M1718.5 970V1008M1719.5 965V1017M1720.5 974V1007M1721.5 977V999M1722.5 966V1013M1723.5 970V1027M1724.5 957V1016M1725.5 980V1034M1726.5 975V1018M1727.5 986V1006M1728.5 978V1023M1729.5 966V1029M1730.5 975V1012M1731.5 980V995M1732.5 974V1022M1733.5 980V1010M1734.5 959V1020M1735.5 978V1002M1736.5 957V1008M1737.5 979V1021M1738.5 975V1013M1739.5 965V1007M1740.5 959V1001M1741.5 978V1021M1742.5 983V1008M1743.5 967V1027M1744.5 969V1020M1745.5 977V1030M1746.5 978V1026M1747.5 981V1004M1748.5 960V1011M1749.5 972V1004M1750.5 977V1011M1751.5 971V1010M1752.5 980V1008M1753.5 979V1015M1754.5 970V1016M1755.5 963V1021M1756.5 966V1017M1757.5 977V1015M1758.5 971V1029M1759.5 987V1013M1760.5 977V1024M1761.5 989V1015M1762.5 979V1026M1763.5 967V1033M1764.5 984V1022M1765.5 976V997M1766.5 962V1006M1767.5 964V1008M1768.5 979V1019M1769.5 970V993M1770.5 959V1030M1771.5 970V1002M1772.5 974V1023M1773.5 975V1029M1774.5 980V1000M1775.5 977V1021M1776.5 978V1004M1777.5 980V1001M1778.5 967V1017M1779.5 978V1007M1780.5 989V1008M1781.5 980V1006M1782.5 971V1004M1783.5 975V1008M1784.5 975V1018M1785.5 985V1029M1786.5 974V1001M1787.5 980V1021M1788.5 985V1008M1789.5 970V1010M1790.5 982V1006M1791.5 981V1004M1792.5 969V1008M1793.5 970V1024M1794.5 964V1026M1795.5 982V1022M1796.5 962V1027M1797.5 972V1002M1798.5 986V1005M1799.5 980V1001M1800.5 973V1009M1801.5 980V1008M1802.5 967V1022M1803.5 981V1019M1804.5 974V1017M1805.5 975V1007M1806.5 972V1024M1807.5 962V1011M1808.5 981V1006M1809.5 978V1007M1810.5 967V1006M1811.5 980V1011M1812.5 967V1016M1813.5 979V1016M1814.5 970V1007M1815.5 974V1000M1816.5 979V1027M1817.5 979V1007M1818.5 972V1001M1819.5 986V1000M1820.5 964V1006M1821.5 985V1008M1822.5 988V1012M1823.5 968V1002M1824.5 979V1004M1825.5 979V1007M1826.5 975V1010M1827.5 972V1002M1828.5 973V1013M1829.5 978V1006M1830.5 974V1027M1831.5 985V1012M1832.5 975V1017M1833.5 985V1023M1834.5 976V1014M1835.5 980V1013M1836.5 985V1017M1837.5 981V1005M1838.5 967V1020M1839.5 979V1015M1840.5 973V1026M1841.5 979V998M1842.5 967V1001M1843.5 966V1004M1844.5 975V1008M1845.5 980V1002M1846.5 981V1006M1847.5 974V1015M1848.5 979V1008M1849.5 984V1007M1850.5 969V1006M1851.5 971V1006M1852.5 975V1003M1853.5 973V1012M1854.5 975V1005M1855.5 965V1008M1856.5 981V1013M1857.5 983V1003M1858.5 978V1016M1859.5 972V1002M1860.5 974V1012M1861.5 982V1015M1862.5 973V1016M1863.5 984V1010M1864.5 986V995M1865.5 972V1006M1866.5 982V1001M1867.5 987V1018M1868.5 980V1000M1869.5 982V1013M1870.5 985V1011M1871.5 979V1001M1872.5 980V1008M1873.5 986V997M1874.5 985V998M1875.5 978V1008M1876.5 982V1011M1877.5 981V1000M1878.5 975V1015M1879.5 982V1010M1880.5 986V1000M1881.5 985V1009M1882.5 983V997M1883.5 985V1008M1884.5 986V1000M1885.5 982V997M1886.5 981V1002M1887.5 984V994M1888.5 985V1011M1889.5 977V997M1890.5 983V995M1891.5 979V1001M1892.5 981V1001M1893.5 984V1009M1894.5 982V1007M1895.5 990V1004M1896.5 986V1002M1897.5 985V1000M1898.5 983V1001M1899.5 986V1006M1900.5 987V1001M1901.5 987V999M1902.5 983V993M1903.5 989V999M1904.5 987V999M1905.5 988V996M1906.5 985V998M1907.5 989V998M1908.5 985V996M1909.5 989V998M1910.5 983V993M1911.5 985V993M1912.5 987V997M1913.5 986V999M1914.5 989V1000M1915.5 987V995M1916.5 988V995M1917.5 987V996M1918.5 990V997M1919.5 987V997M1920.5 989V997M1921.5 989V997M1922.5 990V998M1923.5 989V998M1924.5 989V994M1925.5 989V994M1926.5 990V994M1927.5 990V994M1928.5 989V993M1929.5 991V992M1930.5 981V1026M1931.5 938V1076M1932.5 936V1048M1933.5 870V1018M1934.5 848V1120M1935.5 913V1107M1936.5 809V1173M1937.5 896V1121M1938.5 866V1150M1939.5 919V1092M1940.5 844V1093M1941.5 895V1066M1942.5 923V1052M1943.5 809V1117M1944.5 748V1078M1945.5 960V1144M1946.5 910V1177M1947.5 822V1107M1948.5 924V1061M1949.5 862V1112M1950.5 850V1090M1951.5 820V1092M1952.5 907V1109M1953.5 940V1125M1954.5 870V1124M1955.5 944V1080M1956.5 927V1071M1957.5 892V1044M1958.5 965V1108M1959.5 762V1176M1960.5 902V1017M1961.5 871V1041M1962.5 886V1083M1963.5 869V1038M1964.5 848V1008M1965.5 920V1019M1966.5 850V1163M1967.5 874V1079M1968.5 909V1073M1969.5 935V1138M1970.5 879V1080M1971.5 844V1176M1972.5 910V1062M1973.5 865V1200M1974.5 910V1101M1975.5 916V1202M1976.5 946V1068M1977.5 936V1117M1978.5 962V1119M1979.5 955V1078M1980.5 977V1049M1981.5 821V1097M1982.5 868V1049M1983.5 846V1172M1984.5 898V998M1985.5 758V1038M1986.5 932V1189M1987.5 957V1116M1988.5 895V1156M1989.5 958V1008M1990.5 828V1159M1991.5 945V1135M1992.5 835V1190M1993.5 939V1132M1994.5 890V1009M1995.5 970V1065M1996.5 828V996M1997.5 938V1092M1998.5 885V1074M1999.5 894V1069M2000.5 930V1069M2001.5 946V1028M2002.5 915V995M2003.5 870V1046M2004.5 953V1041M2005.5 875V1069M2006.5 920V1071M2007.5 898V998M2008.5 914V1091M2009.5 980V1114M2010.5 921V1048M2011.5 942V1046M2012.5 908V1063M2013.5 930V1094M2014.5 884V1040M2015.5 972V1061M2016.5 952V1005M2017.5 989V1012M2018.5 989V1002M2019.5 928V1066M2020.5 891V1007M2021.5 923V1050M2022.5 930V1044M2023.5 938V1080M2024.5 956V1023M2025.5 955V998M2026.5 958V997M2027.5 958V1053M2028.5 924V1067M2029.5 923V993M2030.5 964V1033M2031.5 965V1079M2032.5 975V1050M2033.5 981V1028M2034.5 907V1024M2035.5 967V1020M2036.5 985V1054M2037.5 921V1073M2038.5 936V1019M2039.5 885V1039M2040.5 904V1091M2041.5 989V1023M2042.5 986V1042M2043.5 918V1073M2044.5 929V1056M2045.5 931V1103M2046.5 927V1002M2047.5 871V1069M2048.5 966V1097M2049.5 949V1075M2050.5 968V1081M2051.5 902V1039M2052.5 989V1097M2053.5 876V1057M2054.5 933V1023M2055.5 903V1048M2056.5 951V1079M2057.5 958V1063M2058.5 933V1066M2059.5 895V1071M2060.5 899V1093M2061.5 913V1063M2062.5 967V998M2063.5 943V1036M2064.5 943V1042M2065.5 916V1008M2066.5 877V1088M2067.5 946V1080M2068.5 947V1041M2069.5 936V1040M2070.5 927V1022M2071.5 900V1032M2072.5 916V1018M2073.5 906V1105M2074.5 976V1094M2075.5 930V1017M2076.5 894V1091M2077.5 920V1083M2078.5 920V1068M2079.5 940V1073M2080.5 985V1016M2081.5 943V1013M2082.5 908V1027M2083.5 967V1062M2084.5 844V1077M2085.5 959V996M2086.5 881V1038M2087.5 941V1046M2088.5 886V1026M2089.5 860V1046M2090.5 930V1008M2091.5 917V1076M2092.5 904V1038M2093.5 881V1090M2094.5 968V1011M2095.5 934V1104M2096.5 882V1032M2097.5 917V1041M2098.5 892V1082M2099.5 923V1001M2100.5 947V1078M2101.5 877V1039M2102.5 971V1035M2103.5 873V1008M2104.5 915V1020M2105.5 893V1000M2106.5 913V1031M2107.5 970V1038M2108.5 923V1069M2109.5 974V1064M2110.5 979V1065M2111.5 926V1058M2112.5 958V1039M2113.5 908V1044M2114.5 911V1029M2115.5 926V1072M2116.5 943V1090M2117.5 915V1036M2118.5 970V1003M2119.5 888V1020M2120.5 891V1006M2121.5 900V1093M2122.5 950V1078M2123.5 931V1027M2124.5 987V1081M2125.5 959V1019M2126.5 956V1036M2127.5 948V1031M2128.5 956V1035M2129.5 867V997M2130.5 932V1032M2131.5 924V1035M2132.5 929V1046M2133.5 956V1032M2134.5 936V1041M2135.5 951V998M2136.5 958V1058M2137.5 972V1036M2138.5 947V1068M2139.5 929V1020M2140.5 931V1043M2141.5 918V1037M2142.5 947V1044M2143.5 952V1033M2144.5 954V1049M2145.5 910V1017M2146.5 922V1085M2147.5 901V1037M2148.5 887V1074M2149.5 913V1049M2150.5 902V1056M2151.5 963V1050M2152.5 987V1055M2153.5 968V991M2154.5 958V1073M2155.5 971V1024M2156.5 912V998M2157.5 927V1041M2158.5 950V1044M2159.5 937V1019M2160.5 957V1080M2161.5 913V1037M2162.5 958V1076M2163.5 977V1042M2164.5 954V1011M2165.5 902V1081M2166.5 920V1051M2167.5 967V1097M2168.5 948V1052M2169.5 967V1076M2170.5 951V1089M2171.5 901V1067M2172.5 978V1026M2173.5 937V1004M2174.5 923V1040M2175.5 958V1067M2176.5 950V1028M2177.5 934V1020M2178.5 892V1058M2179.5 915V1060M2180.5 949V1069M2181.5 970V1032M2182.5 953V1023M2183.5 952V1027M2184.5 967V1060M2185.5 970V1031M2186.5 935V1043M2187.5 925V1035M2188.5 931V1042M2189.5 976V1052M2190.5 967V1021M2191.5 967V1030M2192.5 951V1006M2193.5 929V1011M2194.5 933V1040M2195.5 960V1022M2196.5 978V1031M2197.5 984V1062M2198.5 969V1060M2199.5 960V1028M2200.5 958V1018M2201.5 949V1021M2202.5 956V1015M2203.5 967V1015M2204.5 981V1018M2205.5 961V1044M2206.5 962V1016M2207.5 956V1016M2208.5 964V993M2209.5 962V1042M2210.5 973V1023M2211.5 956V1009M2212.5 937V1004M2213.5 962V1012M2214.5 990V997M2215.5 921V1001M2216.5 916V1016M2217.5 957V1021M2218.5 970V1007M2219.5 954V1003M2220.5 921V1003M2221.5 966V1000M2222.5 962V1000M2223.5 990V1011M2224.5 962V1006M2225.5 951V1019M2226.5 975V1013M2227.5 951V996M2228.5 948V1012M2229.5 955V1001M2230.5 982V999M2231.5 966V1006M2232.5 984V997M2233.5 980V1009M2234.5 974V1008M2235.5 977V992M2236.5 974V1005M2237.5 984V992M2238.5 971V999M2239.5 987V1004M2240.5 978V1006M2241.5 979V1010M2242.5 970V1001M2243.5 982V998M2244.5 984V1004M2245.5 989V1000M2246.5 988V1003M2247.5 980V999M2248.5 983V999M2249.5 988V997M2250.5 979V996M2251.5 975V999M2252.5 984V993M2253.5 988V1004M2254.5 983V999M2255.5 979V1000M2256.5 986V998M2257.5 977V1003M2258.5 988V995M2259.5 974V1002M2260.5 980V995M2261.5 986V999M2262.5 988V999M2263.5 985V1004M2264.5 990V999M2265.5 983V999M2266.5 978V999M2267.5 986V996M2268.5 985V1001M2269.5 990V998M2270.5 986V1001M2271.5 987V1000M2272.5 984V994M2273.5 984V993M2274.5 988V994M2275.5 987V998M2276.5 988V993M2277.5 989V997M2278.5 990V994M2279.5 987V995M2280.5 989V995M2281.5 987V996M2282.5 991V995M2283.5 988V997M2284.5 987V999M2285.5 990V996M2286.5 990V996M2287.5 988V993M2288.5 990V996M2289.5 987V995M2290.5 990V996M2291.5 990V996M2292.5 990V993M2293.5 991V992M2294.5 988V992M2295.5 990V993M2296.5 991V992M2297.5 990V994M2298.5 989V992M2299.5 988V994M2300.5 990V995M2301.5 990V993M2302.5 991V994M2303.5 990V994M2304.5 989V994M2305.5 991V993M2306.5 989V993M2307.5 990V993M2308.5 990V993M2309.5 989V991M2310.5 990V993M2311.5 990V992M2312.5 990V992M2313.5 990V992M2314.5 988V994M2315.5 989V997M2316.5 978V993M2317.5 966V993M2318.5 973V995M2319.5 976V995M2320.5 974V998M2321.5 986V995M2322.5 974V995M2323.5 985V995M2324.5 987V998M2325.5 976V994M2326.5 964V998M2327.5 968V994M2328.5 977V994M2329.5 960V1011M2330.5 960V1006M2331.5 986V1001M2332.5 986V1015M2333.5 978V999M2334.5 979V1005M2335.5 962V999M2336.5 969V992M2337.5 979V1010M2338.5 971V1008M2339.5 970V1013M2340.5 961V1000M2341.5 967V1015M2342.5 971V1002M2343.5 986V1005M2344.5 986V1010M2345.5 970V993M2346.5 980V1005M2347.5 980V993M2348.5 968V1001M2349.5 975V1003M2350.5 983V995M2351.5 989V1010M2352.5 989V1002M2353.5 989V994M2354.5 987V1007M2355.5 985V1008M2356.5 981V998M2357.5 986V1004M2358.5 991V996M2359.5 981V995M2360.5 988V1001M2361.5 982V996M2362.5 985V997M2363.5 989V995M2364.5 990V1001M2365.5 990V997M2366.5 988V993M2367.5 989V995M2368.5 989V996M2369.5 983V995M2370.5 987V995M2371.5 988V992M2372.5 990V994M2373.5 988V993M2374.5 990V994M2375.5 988V993M2376.5 990V992M2377.5 989V994M2378.5 991V993M2379.5 989V992M2380.5 990V992M2381.5 990V992M2382.5 990V992M2383.5 990V993M2384.5 990V992M2385.5 989V992M2386.5 989V992M2387.5 990V993M2388.5 991V991M2389.5 991V991M2390.5 989V992M2391.5 990V992M2392.5 991V992M2393.5 990V992M2394.5 991V991M2395.5 989V992M2396.5 991V992M2397.5 989V992M2398.5 990V991M2399.5 991V992M2400.5 991V991M2401.5 990V992M2402.5 991V991M2403.5 990V992M2404.5 991V992M2405.5 990V992M2406.5 990V992M2407.5 990V991M2408.5 989V991M2409.5 990V992M2410.5 990V992M2411.5 989V992M2412.5 990V992M2413.5 990V992M2414.5 991V991M2415.5 990V992M2416.5 990V992M2417.5 990V991M2418.5 990V992M2419.5 990V992M2420.5 991V992M2421.5 991V992M2422.5 990V992M2423.5 989V992M2424.5 990V992M2425.5 991V992M2426.5 990V992M2427.5 990V991M2428.5 990V992M2429.5 990V993M2430.5 990V992M2431.5 991V991M2432.5 991V992M2433.5 990V992M2434.5 990V992M2435.5 991V992M2436.5 990V992M2437.5 991V993M2438.5 991V991M2439.5 990V992M2440.5 990V992M2441.5 990V992M2442.5 990V992M2443.5 990V991M2444.5 991V992M2445.5 991V992M2446.5 991V992M2447.5 990V992M2448.5 990V992M2449.5 990V991M2450.5 991V992M2451.5 991V992M2452.5 991V992M2453.5 990V991M2454.5 990V992M2455.5 990V991M2456.5 990V991M2457.5 991V991M2458.5 990V992M2459.5 991V992M2460.5 984V1000M2461.5 978V1014M2462.5 981V1020M2463.5 970V1001M2464.5 950V1012M2465.5 971V1012M2466.5 968V1022M2467.5 926V1029M2468.5 977V1041M2469.5 952V1049M2470.5 866V1089M2471.5 949V1040M2472.5 961V1090M2473.5 912V1091M2474.5 842V1073M2475.5 841V1025M2476.5 826V1059M2477.5 900V1096M2478.5 947V1089M2479.5 761V1142M2480.5 862V1184M2481.5 933V1024M2482.5 934V1122M2483.5 746V1118M2484.5 896V1004M2485.5 943V1143M2486.5 837V1177M2487.5 873V1101M2488.5 949V1025M2489.5 783V1045M2490.5 900V1068M2491.5 895V1104M2492.5 929V1076M2493.5 934V1090M2494.5 965V1063M2495.5 856V1071M2496.5 818V1082M2497.5 882V1096M2498.5 888V1083M2499.5 917V1074M2500.5 877V1158M2501.5 884V1187M2502.5 898V1055M2503.5 893V1043M2504.5 776V1026M2505.5 986V1143M2506.5 782V1129M2507.5 961V1081M2508.5 917V1108M2509.5 891V1039M2510.5 838V1087M2511.5 964V1088M2512.5 903V1077M2513.5 860V1024M2514.5 800V1065M2515.5 985V1067M2516.5 888V1050M2517.5 964V1034M2518.5 830V1114M2519.5 869V1100M2520.5 964V1047M2521.5 920V1005M2522.5 847V1087M2523.5 782V1024M2524.5 783V1042M2525.5 930V1027M2526.5 896V1008M2527.5 978V1125M2528.5 910V1011M2529.5 933V1075M2530.5 971V1104M2531.5 840V1029M2532.5 900V1046M2533.5 887V1063M2534.5 944V1006M2535.5 811V1002M2536.5 779V1041M2537.5 935V1119M2538.5 939V1045M2539.5 954V1030M2540.5 953V1016M2541.5 934V1058M2542.5 908V1051M2543.5 884V1040M2544.5 923V1033M2545.5 811V1030M2546.5 929V1030M2547.5 922V1070M2548.5 971V1111M2549.5 886V1074M2550.5 907V1078M2551.5 908V1067M2552.5 914V1000M2553.5 965V1051M2554.5 943V1054M2555.5 943V1025M2556.5 919V1037M2557.5 947V994M2558.5 972V1092M2559.5 969V1029M2560.5 923V1021M2561.5 934V1017M2562.5 921V1049M2563.5 968V1015M2564.5 943V1000M2565.5 948V1035M2566.5 956V1029M2567.5 941V1012M2568.5 931V1039M2569.5 909V999M2570.5 952V1016M2571.5 961V993M2572.5 924V1020M2573.5 929V1032M2574.5 988V1027M2575.5 936V1029M2576.5 957V995M2577.5 972V1010M2578.5 941V1038M2579.5 946V997M2580.5 969V1020M2581.5 942V1033M2582.5 946V1015M2583.5 935V997M2584.5 957V1027M2585.5 938V1032M2586.5 949V1008M2587.5 978V1010M2588.5 975V1017M2589.5 947V1023M2590.5 924V1037M2591.5 943V991M2592.5 952V1026M2593.5 964V1008M2594.5 950V1019M2595.5 934V999M2596.5 950V992M2597.5 932V1004M2598.5 966V1022M2599.5 929V1007M2600.5 924V1001M2601.5 928V1014M2602.5 959V1024M2603.5 963V1014M2604.5 973V1003M2605.5 968V1011M2606.5 938V1014M2607.5 962V995M2608.5 960V1008M2609.5 945V1001M2610.5 944V1008M2611.5 990V1015M2612.5 915V1021M2613.5 977V996M2614.5 936V1007M2615.5 963V1020M2616.5 961V1005M2617.5 987V1010M2618.5 941V1028M2619.5 967V1005M2620.5 979V1010M2621.5 970V1007M2622.5 971V1026M2623.5 970V1007M2624.5 950V1029M2625.5 947V1002M2626.5 975V1000M2627.5 949V1017M2628.5 978V1014M2629.5 978V1009M2630.5 964V996M2631.5 985V1016M2632.5 968V1011M2633.5 968V1010M2634.5 988V999M2635.5 945V1000M2636.5 949V1013M2637.5 973V1001M2638.5 977V1019M2639.5 924V1012M2640.5 959V1022M2641.5 952V1020M2642.5 956V992M2643.5 967V1006M2644.5 965V995M2645.5 944V1001M2646.5 962V1005M2647.5 985V1013M2648.5 987V1003M2649.5 972V1003M2650.5 975V1010M2651.5 990V1011M2652.5 983V992M2653.5 983V999M2654.5 982V1001M2655.5 987V1006M2656.5 986V994M2657.5 982V993M2658.5 986V998M2659.5 971V998M2660.5 983V1000M2661.5 980V999M2662.5 988V996M2663.5 977V994M2664.5 981V997M2665.5 990V997M2666.5 981V999M2667.5 977V993M2668.5 977V1001M2669.5 982V996M2670.5 979V994M2671.5 982V995M2672.5 979V998M2673.5 977V994M2674.5 984V992M2675.5 985V993M2676.5 986V992M2677.5 985V997M2678.5 990V991M2679.5 987V993M2680.5 984V992M2681.5 989V995M2682.5 988V993M2683.5 984V996M2684.5 986V992M2685.5 987V993M2686.5 988V994M2687.5 991V993M2688.5 991V993M2689.5 986V992M2690.5 988V992M2691.5 988V991M2692.5 990V993M2693.5 989V992M2694.5 989V992M2695.5 990V991M2696.5 990V993M2697.5 988V992M2698.5 989V991M2699.5 991V992M2700.5 990V992M2701.5 990V991M2702.5 989V991M2703.5 990V992M2704.5 989V991M2705.5 990V992M2706.5 990V992M2707.5 990V992M2708.5 990V992M2709.5 989V992M2710.5 990V992M2711.5 989V992M2712.5 990V992M2713.5 989V991M2714.5 990V991M2715.5 991V992M2716.5 990V992M2717.5 990V992M2718.5 991V993M2719.5 990V992M2720.5 990V991M2721.5 991V992M2722.5 991V992M2723.5 991V992M2724.5 990V992M2725.5 991V992M2726.5 990V993M2727.5 989V993M2728.5 987V994M2729.5 989V996M2730.5 990V993M2731.5 981V997M2732.5 985V998M2733.5 964V1006M2734.5 991V999M2735.5 981V1001M2736.5 968V1002M2737.5 981V1003M2738.5 976V1001M2739.5 983V1007M2740.5 980V1012M2741.5 966V993M2742.5 964V1008M2743.5 954V994M2744.5 983V1005M2745.5 979V993M2746.5 981V1001M2747.5 960V1017M2748.5 982V1003M2749.5 988V1003M2750.5 959V998M2751.5 973V1003M2752.5 985V997M2753.5 973V1007M2754.5 971V1011M2755.5 981V1000M2756.5 981V1010M2757.5 973V999M2758.5 978V994M2759.5 977V992M2760.5 980V1004M2761.5 979V992M2762.5 983V993M2763.5 980V1003M2764.5 984V1002M2765.5 982V999M2766.5 977V998M2767.5 987V994M2768.5 981V995M2769.5 983V998M2770.5 986V992M2771.5 990V993M2772.5 985V994M2773.5 986V994M2774.5 991V994M2775.5 990V993M2776.5 989V993M2777.5 989V993M2778.5 990V993M2779.5 990V995M2780.5 990V991M2781.5 991V993M2782.5 991V994M2783.5 989V992M2784.5 990V995M2785.5 990V993M2786.5 990V997M2787.5 990V995M2788.5 991V994M2789.5 990V995M2790.5 990V992M2791.5 990V992M2792.5 990V993M2793.5 991V994M2794.5 991V992M2795.5 991V992M2796.5 990V993M2797.5 990V992M2798.5 991V994M2799.5 991V995M2800.5 990V991M2801.5 991V992M2802.5 990V993M2803.5 990V992M2804.5 990V992M2805.5 990V993M2806.5 989V993M2807.5 991V993M2808.5 989V992M2809.5 990V992M2810.5 989V994M2811.5 990V993M2812.5 990V992M2813.5 990V992M2814.5 991V992M2815.5 989V992M2816.5 990V993M2817.5 990V993M2818.5 991V991M2819.5 990V994M2820.5 990V993M2821.5 990V991M2822.5 990V993M2823.5 990V992M2824.5 991V992M2825.5 990V992M2826.5 990V992M2827.5 991V992M2828.5 990V992M2829.5 990V991M2830.5 991V993M2831.5 990V992M2832.5 990V992M2833.5 991V991M2834.5 991V992M2835.5 990V992M2836.5 990V992M2837.5 990V992M2838.5 991V992M2839.5 991V992M2840.5 991V991M2841.5 991V991M2842.5 990V991M2843.5 991V991M2844.5 990V992M2845.5 990V992M2846.5 991V992M2847.5 991V992M2848.5 990V992M2849.5 986V993M2850.5 984V996M2851.5 990V996M2852.5 983V998M2853.5 978V996M2854.5 985V998M2855.5 981V999M2856.5 985V998M2857.5 985V991M2858.5 983V994M2859.5 978V997M2860.5 974V997M2861.5 984V998M2862.5 972V1007M2863.5 986V1002M2864.5 985V994M2865.5 989V1003M2866.5 969V996M2867.5 974V1005M2868.5 966V1005M2869.5 984V996M2870.5 970V1014M2871.5 980V1000M2872.5 976V1012M2873.5 985V1015M2874.5 964V999M2875.5 985V992M2876.5 983V993M2877.5 977V1003M2878.5 977V999M2879.5 976V999M2880.5 979V1001M2881.5 989V996M2882.5 976V1005M2883.5 980V997M2884.5 978V993M2885.5 986V1001M2886.5 989V1001M2887.5 980V1001M2888.5 990V993M2889.5 986V1000M2890.5 982V993M2891.5 985V992M2892.5 989V994M2893.5 990V992M2894.5 988V992M2895.5 988V993M2896.5 989V991M2897.5 989V992M2898.5 989V993M2899.5 991V991M2900.5 990V993M2901.5 990V992M2902.5 990V992M2903.5 989V992M2904.5 991V991M2905.5 989V992M2906.5 989V991M2907.5 990V992M2908.5 990V993M2909.5 988V992M2910.5 989V992M2911.5 990V992M2912.5 988V991M2913.5 990V992M2914.5 990V993M2915.5 989V993M2916.5 988V992M2917.5 990V992M2918.5 990V991M2919.5 990V992M2920.5 989V992M2921.5 990V992M2922.5 990V993M2923.5 990V992M2924.5 990V992M2925.5 990V992M2926.5 989V992M2927.5 989V991M2928.5 990V993M2929.5 990V991M2930.5 991V993M2931.5 990V992M2932.5 990V993M2933.5 988V993M2934.5 988V992M2935.5 990V992M2936.5 991V992M2937.5 990V992M2938.5 988V993M2939.5 988V992M2940.5 989V992M2941.5 990V992M2942.5 989V993M2943.5 990V993M2944.5 989V992M2945.5 990V992M2946.5 990V992M2947.5 990V992M2948.5 991V992M2949.5 989V991M2950.5 990V991M2951.5 990V992M2952.5 990V991M2953.5 991V992M2954.5 990V993M2955.5 990V992M2956.5 990V992M2957.5 990V992M2958.5 991V992M2959.5 990V991M2960.5 991V992M2961.5 990V992M2962.5 990V991M2963.5 991V991M2964.5 989V992M2965.5 989V992M2966.5 990V992M2967.5 990V992M2968.5 990V991M2969.5 990V992M2970.5 990V992M2971.5 990V992M2972.5 990V992M2973.5 989V991M2974.5 990V992M2975.5 990V992M2976.5 990V991M2977.5 990V993M2978.5 990V992M2979.5 990V992M2980.5 991V992M2981.5 990V992M2982.5 991V992M2983.5 990V991M2984.5 990V992M2985.5 990V992M2986.5 991V992M2987.5 990V992M2988.5 990V991M2989.5 991V993M2990.5 985V1005M2991.5 975V1004M2992.5 972V995M2993.5 990V997M2994.5 962V1009M2995.5 931V1010M2996.5 946V1000M2997.5 959V1009M2998.5 977V1008M2999.5 937V1021M3000.5 937V1008M3001.5 973V1022M3002.5 938V1022M3003.5 975V996M3004.5 897V1022M3005.5 959V1021M3006.5 935V1040M3007.5 871V1019M3008.5 873V1003M3009.5 857V999M3010.5 985V1014M3011.5 897V1053M3012.5 927V1020M3013.5 871V1045M3014.5 929V1011M3015.5 975V1052M3016.5 900V1028M3017.5 903V1008M3018.5 928V1024M3019.5 962V996M3020.5 903V1084M3021.5 969V1054M3022.5 969V1022M3023.5 852V1020M3024.5 950V1041M3025.5 907V1034M3026.5 931V1074M3027.5 947V1085M3028.5 963V1025M3029.5 959V1057M3030.5 975V1023M3031.5 906V1083M3032.5 939V1047M3033.5 933V1044M3034.5 985V1032M3035.5 943V1044M3036.5 832V1058M3037.5 938V1046M3038.5 923V1037M3039.5 935V1035M3040.5 888V997M3041.5 933V1065M3042.5 921V1035M3043.5 967V1007M3044.5 887V1048M3045.5 878V1014M3046.5 980V1050M3047.5 950V1079M3048.5 931V1079M3049.5 857V1036M3050.5 959V1041M3051.5 872V1065M3052.5 863V1039M3053.5 975V1089M3054.5 936V1018M3055.5 951V1017M3056.5 838V1099M3057.5 945V1091M3058.5 840V1094M3059.5 917V1060M3060.5 940V1089M3061.5 931V1022M3062.5 970V1069M3063.5 953V1090M3064.5 928V1062M3065.5 929V1023M3066.5 924V1013M3067.5 866V1046M3068.5 872V1028M3069.5 920V1046M3070.5 939V1088M3071.5 908V1016M3072.5 924V1015M3073.5 950V1053M3074.5 938V1040M3075.5 931V1026M3076.5 915V1073M3077.5 901V1067M3078.5 933V1017M3079.5 898V1057M3080.5 902V1021M3081.5 946V1007M3082.5 947V1017M3083.5 977V1054M3084.5 933V1053M3085.5 979V1017M3086.5 939V1045M3087.5 960V1004M3088.5 969V1071M3089.5 934V1006M3090.5 896V1030M3091.5 936V995M3092.5 934V1041M3093.5 950V1020M3094.5 975V1047M3095.5 960V1032M3096.5 982V1023M3097.5 900V1026M3098.5 931V1038M3099.5 949V1004M3100.5 885V1032M3101.5 957V1040M3102.5 989V1028M3103.5 967V1061M3104.5 960V1004M3105.5 945V1024M3106.5 914V1032M3107.5 915V1014M3108.5 904V1035M3109.5 959V1020M3110.5 922V1021M3111.5 983V1002M3112.5 947V1056M3113.5 973V995M3114.5 965V1043M3115.5 978V1064M3116.5 972V1006M3117.5 928V1030M3118.5 959V1016M3119.5 935V1016M3120.5 956V1035M3121.5 942V1007M3122.5 939V1033M3123.5 960V997M3124.5 920V1009M3125.5 928V999M3126.5 901V1008M3127.5 881V1042M3128.5 972V1042M3129.5 909V1031M3130.5 951V1012M3131.5 963V1055M3132.5 906V1034M3133.5 946V1017M3134.5 986V1062M3135.5 919V1023M3136.5 910V1052M3137.5 982V1046M3138.5 946V1040M3139.5 966V1060M3140.5 933V1007M3141.5 934V1015M3142.5 905V1029M3143.5 928V1047M3144.5 928V1000M3145.5 882V1002M3146.5 894V1008M3147.5 938V1014M3148.5 938V1034M3149.5 936V1050M3150.5 989V1028M3151.5 946V1027M3152.5 920V998M3153.5 899V1077M3154.5 961V1034M3155.5 977V1019M3156.5 970V1054M3157.5 965V1073M3158.5 946V1037M3159.5 930V1022M3160.5 983V1015M3161.5 882V1006M3162.5 940V1016M3163.5 910V1024M3164.5 955V1037M3165.5 978V1019M3166.5 937V1032M3167.5 962V1067M3168.5 957V1033M3169.5 902V1015M3170.5 903V1032M3171.5 949V1018M3172.5 950V1009M3173.5 955V1047M3174.5 946V1080M3175.5 918V1040M3176.5 963V1046M3177.5 914V1027M3178.5 985V1026M3179.5 970V1024M3180.5 948V998M3181.5 914V1042M3182.5 986V1034M3183.5 981V1030M3184.5 949V1031M3185.5 964V1015M3186.5 930V1032M3187.5 964V1016M3188.5 938V1012M3189.5 936V1029M3190.5 906V1057M3191.5 967V1034M3192.5 985V1055M3193.5 881V1021M3194.5 916V1049M3195.5 945V1041M3196.5 946V1011M3197.5 943V1003M3198.5 934V1012M3199.5 982V1060M3200.5 934V1008M3201.5 966V1024M3202.5 886V1027M3203.5 926V1011M3204.5 964V1009M3205.5 905V1001M3206.5 889V1053M3207.5 869V1037M3208.5 919V1047M3209.5 892V1068M3210.5 981V1031M3211.5 955V1068M3212.5 974V1059M3213.5 954V1022M3214.5 938V1053M3215.5 925V1048M3216.5 976V1065M3217.5 895V1065M3218.5 975V1080M3219.5 957V1021M3220.5 928V1003M3221.5 934V1036M3222.5 944V1011M3223.5 907V1046M3224.5 906V1015M3225.5 913V1030M3226.5 982V997M3227.5 968V1039M3228.5 883V1005M3229.5 938V1046M3230.5 942V1017M3231.5 982V1043M3232.5 944V1032M3233.5 947V1051M3234.5 976V1028M3235.5 974V1033M3236.5 953V1041M3237.5 965V1017M3238.5 955V1020M3239.5 970V1027M3240.5 966V1029M3241.5 941V1027M3242.5 974V1021M3243.5 958V1000M3244.5 975V1025M3245.5 971V1014M3246.5 979V1005M3247.5 989V1009M3248.5 983V1004M3249.5 991V1005M3250.5 987V994M3251.5 985V1000M3252.5 981V1006M3253.5 991V998M3254.5 980V1008M3255.5 984V1003M3256.5 979V998M3257.5 977V1003M3258.5 977V999M3259.5 982V1002M3260.5 980V995M3261.5 988V998M3262.5 976V1001M3263.5 977V992M3264.5 977V1001M3265.5 987V994M3266.5 975V996M3267.5 983V994M3268.5 985V993M3269.5 978V994M3270.5 982V994M3271.5 984V994M3272.5 987V1006M3273.5 986V1001M3274.5 976V1002M3275.5 970V1014M3276.5 980V1030M3277.5 977V1009M3278.5 976V1006M3279.5 921V1029M3280.5 970V1018M3281.5 960V1021" stroke="#747474" stroke-width="1"/><path d="M721.5 988V992M722.5 988V992M723.5 989V995M724.5 990V995M725.5 989V993M726.5 989V993M727.5 987V995M728.5 990V995M729.5 990V995M730.5 988V995M731.5 990V995M732.5 989V992M733.5 989V994M734.5 987V995M735.5 988V992M736.5 988V992M737.5 987V993M738.5 989V992M739.5 987V993M740.5 989V992M741.5 988V992M742.5 989V992M743.5 990V993M744.5 988V994M745.5 988V994M746.5 988V992M747.5 990V994M748.5 989V993M749.5 987V993M750.5 989V995M751.5 987V994M752.5 990V993M753.5 990V994M754.5 987V992M755.5 990V992M756.5 989V993M757.5 990V992M758.5 989V992M759.5 990V993M760.5 989V993M761.5 989V993M762.5 989V992M763.5 990V993M764.5 988V992M765.5 989V995M766.5 990V992M767.5 987V992M768.5 989V993M769.5 990V992M770.5 989V993M771.5 989V992M772.5 989V992M773.5 990V993M774.5 990V992M775.5 990V992M776.5 990V992M777.5 989V993M778.5 989V992M779.5 990V992M780.5 989V992M781.5 990V992M782.5 989V992M783.5 990V992M784.5 990V992M785.5 990V993M786.5 988V992M787.5 990V993M788.5 987V993M789.5 990V993M790.5 990V993M791.5 987V992M792.5 990V993M793.5 990V992M794.5 989V994M795.5 990V992M796.5 989V993M797.5 990V992M798.5 988V992M799.5 988V993M800.5 990V992M801.5 990V994M802.5 989V993M803.5 990V992M804.5 990V993M805.5 989V994M806.5 990V992M807.5 989V992M808.5 990V992M809.5 990V992M810.5 990V992M811.5 989V992M812.5 990V992M813.5 990V992M814.5 989V992M815.5 989V992M816.5 990V992M817.5 988V994M818.5 990V992M819.5 990V992M820.5 990V992M821.5 989V992M822.5 990V993M823.5 990V992M824.5 989V992M825.5 990V993M826.5 990V993M827.5 990V992M828.5 989V992M829.5 990V992M830.5 990V994M831.5 989V992M832.5 990V992M833.5 990V992M834.5 990V992M835.5 990V992M836.5 989V993M837.5 989V992M838.5 989V993M839.5 990V993M840.5 990V992M841.5 990V992M842.5 989V992M843.5 975V996M844.5 953V1007M845.5 906V1015M846.5 935V1000M847.5 912V1026M848.5 975V1005M849.5 911V1041M850.5 959V1019M851.5 981V1003M852.5 965V1017M853.5 962V1046M854.5 956V1003M855.5 961V1004M856.5 950V1023M857.5 973V1066M858.5 951V1047M859.5 914V1018M860.5 976V1012M861.5 979V1058M862.5 968V1041M863.5 912V1085M864.5 962V1022M865.5 968V1016M866.5 979V1017M867.5 907V1024M868.5 898V1011M869.5 975V1056M870.5 977V1028M871.5 958V1024M872.5 926V1008M873.5 916V1060M874.5 968V1084M875.5 959V1013M876.5 869V1077M877.5 964V1007M878.5 982V1012M879.5 960V1010M880.5 947V1019M881.5 975V1036M882.5 970V1030M883.5 942V1084M884.5 965V1031M885.5 908V1045M886.5 923V1014M887.5 976V1010M888.5 933V1036M889.5 968V1051M890.5 978V1020M891.5 950V1042M892.5 936V1042M893.5 925V1069M894.5 970V1000M895.5 967V1000M896.5 966V1048M897.5 978V1033M898.5 962V1012M899.5 910V1046M900.5 936V1016M901.5 958V1018M902.5 950V1018M903.5 973V1074M904.5 953V1023M905.5 967V1007M906.5 934V1010M907.5 970V1004M908.5 970V1024M909.5 955V1016M910.5 923V1018M911.5 966V1021M912.5 961V1002M913.5 921V1007M914.5 964V1046M915.5 963V1009M916.5 960V1021M917.5 960V1038M918.5 932V1037M919.5 966V1028M920.5 957V1042M921.5 939V1005M922.5 966V1026M923.5 953V1027M924.5 963V1026M925.5 930V1027M926.5 964V1025M927.5 970V1014M928.5 960V1046M929.5 959V1037M930.5 973V1025M931.5 978V1013M932.5 931V1040M933.5 955V1044M934.5 981V998M935.5 958V1006M936.5 920V1044M937.5 951V1036M938.5 944V1049M939.5 942V1000M940.5 954V1023M941.5 877V1038M942.5 938V1019M943.5 919V1004M944.5 952V1016M945.5 952V1015M946.5 949V1022M947.5 968V1011M948.5 965V1007M949.5 939V1035M950.5 974V1010M951.5 930V1026M952.5 960V1024M953.5 979V1022M954.5 943V1002M955.5 975V997M956.5 960V997M957.5 879V1032M958.5 930V1041M959.5 980V1012M960.5 977V1031M961.5 963V1000M962.5 971V1021M963.5 962V1031M964.5 968V1013M965.5 980V1012M966.5 983V1002M967.5 982V1014M968.5 983V1000M969.5 986V1010M970.5 981V999M971.5 982V1004M972.5 985V1000M973.5 987V1008M974.5 981V998M975.5 986V997M976.5 982V1014M977.5 988V995M978.5 961V1019M979.5 985V1005M980.5 978V1005M981.5 984V996M982.5 989V997M983.5 979V996M984.5 988V995M985.5 971V996M986.5 985V998M987.5 987V1004M988.5 981V1004M989.5 987V996M990.5 987V999M991.5 989V1000M992.5 986V997M993.5 988V995M994.5 988V1000M995.5 988V996M996.5 989V993M997.5 987V995M998.5 988V993M999.5 989V997M1000.5 989V993M1001.5 989V993M1002.5 988V994M1003.5 989V994M1004.5 990V993M1005.5 989V993M1006.5 989V993M1007.5 990V992M1008.5 990V992M1009.5 990V992M1010.5 990V993M1011.5 988V994M1012.5 989V992M1013.5 989V992M1014.5 990V993M1015.5 990V992M1016.5 989V992M1017.5 990V992M1018.5 990V992M1019.5 990V992M1020.5 989V992M1021.5 990V992M1022.5 990V993M1023.5 990V992M1024.5 989V992M1025.5 990V993M1026.5 989V993M1027.5 989V992M1028.5 990V992M1029.5 990V992M1030.5 990V992M1031.5 990V992M1032.5 990V992M1033.5 989V992M1034.5 990V993M1035.5 990V992M1036.5 989V992M1037.5 990V992M1038.5 990V993M1039.5 990V992M1040.5 988V993M1041.5 989V994M1042.5 990V993M1043.5 990V992M1044.5 990V992M1045.5 990V992M1046.5 990V992M1047.5 990V992M1048.5 990V993M1049.5 989V992M1050.5 990V992M1051.5 990V992M1052.5 990V993M1053.5 990V992M1054.5 990V992M1055.5 990V992M1056.5 989V992M1057.5 990V992M1058.5 990V993M1059.5 990V992M1060.5 990V992M1061.5 990V992M1062.5 989V993M1063.5 990V992M1064.5 990V992M1065.5 989V994M1066.5 990V992M1067.5 990V992M1068.5 990V992M1069.5 990V992M1070.5 990V993M1071.5 989V992M1072.5 990V992M1073.5 989V992M1074.5 990V992M1075.5 990V992M1076.5 990V993M1077.5 990V992M1078.5 990V992M1079.5 990V992M1080.5 990V992M1081.5 990V992M1082.5 989V993M1083.5 990V992M1084.5 990V992M1085.5 990V992M1086.5 990V993M1087.5 990V992M1088.5 990V992M1089.5 990V992M1090.5 990V992M1091.5 990V992M1092.5 990V992M1093.5 990V992M1094.5 988V994M1095.5 990V992M1096.5 990V992M1097.5 990V992M1098.5 988V1010M1099.5 976V1000M1100.5 968V1005M1101.5 978V1097M1102.5 932V1017M1103.5 959V998M1104.5 957V1038M1105.5 933V1042M1106.5 938V1043M1107.5 944V998M1108.5 953V1032M1109.5 979V1005M1110.5 964V1067M1111.5 945V1003M1112.5 976V1012M1113.5 872V1102M1114.5 903V1078M1115.5 974V1007M1116.5 983V1011M1117.5 961V1026M1118.5 958V1066M1119.5 947V1047M1120.5 939V1025M1121.5 959V1022M1122.5 982V1031M1123.5 975V1015M1124.5 946V1060M1125.5 965V1027M1126.5 963V1002M1127.5 974V1017M1128.5 957V1015M1129.5 954V1036M1130.5 957V1026M1131.5 932V1066M1132.5 954V1005M1133.5 908V1009M1134.5 972V1018M1135.5 960V1048M1136.5 942V1072M1137.5 976V1030M1138.5 943V1020M1139.5 986V1025M1140.5 977V1003M1141.5 939V1028M1142.5 968V1013M1143.5 959V1058M1144.5 970V1004M1145.5 953V1021M1146.5 965V1030M1147.5 967V1042M1148.5 903V1004M1149.5 934V1000M1150.5 924V998M1151.5 975V1027M1152.5 969V1009M1153.5 981V1020M1154.5 953V999M1155.5 925V1030M1156.5 923V1040M1157.5 986V1031M1158.5 936V1037M1159.5 967V1023M1160.5 983V1038M1161.5 963V1014M1162.5 982V1050M1163.5 983V1014M1164.5 961V1036M1165.5 949V1009M1166.5 963V1007M1167.5 966V1008M1168.5 936V1006M1169.5 968V1002M1170.5 969V1041M1171.5 974V1031M1172.5 975V1001M1173.5 982V1007M1174.5 983V1023M1175.5 968V1012M1176.5 970V1025M1177.5 935V1009M1178.5 973V1031M1179.5 983V1016M1180.5 953V1023M1181.5 954V997M1182.5 959V1000M1183.5 956V1059M1184.5 947V1010M1185.5 982V1019M1186.5 982V1014M1187.5 974V1014M1188.5 961V1007M1189.5 975V1013M1190.5 955V1009M1191.5 936V1090M1192.5 958V1076M1193.5 956V1012M1194.5 962V1007M1195.5 971V1004M1196.5 982V1013M1197.5 979V1013M1198.5 979V1005M1199.5 976V1024M1200.5 970V1043M1201.5 968V1021M1202.5 983V1004M1203.5 981V1014M1204.5 888V1046M1205.5 969V1010M1206.5 982V1014M1207.5 984V1012M1208.5 979V1015M1209.5 980V1005M1210.5 966V999M1211.5 972V1005M1212.5 944V999M1213.5 958V1040M1214.5 970V1011M1215.5 954V1015M1216.5 973V1019M1217.5 969V995M1218.5 978V1004M1219.5 957V1037M1220.5 937V1015M1221.5 975V1013M1222.5 957V1039M1223.5 963V1031M1224.5 978V1045M1225.5 960V1006M1226.5 930V1026M1227.5 958V1012M1228.5 946V993M1229.5 955V1008M1230.5 969V1010M1231.5 984V1038M1232.5 962V1009M1233.5 962V1007M1234.5 988V1003M1235.5 958V1024M1236.5 962V1003M1237.5 960V1009M1238.5 948V1006M1239.5 968V1012M1240.5 897V1027M1241.5 969V1011M1242.5 965V1043M1243.5 955V1013M1244.5 958V1002M1245.5 960V996M1246.5 982V1006M1247.5 934V1005M1248.5 934V1009M1249.5 935V1010M1250.5 944V1059M1251.5 971V1005M1252.5 973V1007M1253.5 960V1037M1254.5 973V1024M1255.5 964V1004M1256.5 960V1017M1257.5 955V1033M1258.5 944V1036M1259.5 981V1019M1260.5 960V1011M1261.5 960V995M1262.5 965V1002M1263.5 985V1005M1264.5 938V1003M1265.5 988V1019M1266.5 971V1023M1267.5 967V1011M1268.5 974V1005M1269.5 973V1004M1270.5 951V1012M1271.5 883V1067M1272.5 971V997M1273.5 920V1037M1274.5 977V1003M1275.5 966V1025M1276.5 977V1001M1277.5 980V1037M1278.5 905V1031M1279.5 965V1003M1280.5 976V1014M1281.5 973V1000M1282.5 966V1007M1283.5 963V999M1284.5 971V1019M1285.5 971V1011M1286.5 926V1009M1287.5 980V1011M1288.5 931V1035M1289.5 927V999M1290.5 978V1015M1291.5 951V1004M1292.5 965V1040M1293.5 969V1002M1294.5 980V1005M1295.5 960V1012M1296.5 926V1061M1297.5 975V1003M1298.5 930V1030M1299.5 938V998M1300.5 958V1003M1301.5 962V1023M1302.5 980V1003M1303.5 951V1035M1304.5 962V1002M1305.5 939V1005M1306.5 958V1013M1307.5 983V1021M1308.5 977V1014M1309.5 959V1012M1310.5 949V1017M1311.5 973V1001M1312.5 969V1002M1313.5 975V1005M1314.5 982V1009M1315.5 971V999M1316.5 983V1004M1317.5 985V1010M1318.5 975V1014M1319.5 976V1003M1320.5 942V1067M1321.5 981V1004M1322.5 980V1002M1323.5 979V996M1324.5 966V1007M1325.5 978V998M1326.5 950V1069M1327.5 983V1023M1328.5 986V1007M1329.5 970V1003M1330.5 948V1011M1331.5 982V1003M1332.5 977V1010M1333.5 984V1016M1334.5 960V1018M1335.5 975V1000M1336.5 974V998M1337.5 969V1001M1338.5 956V1062M1339.5 966V1007M1340.5 983V1045M1341.5 977V996M1342.5 977V1010M1343.5 974V1005M1344.5 979V1012M1345.5 979V1024M1346.5 963V995M1347.5 979V1011M1348.5 968V1031M1349.5 967V1021M1350.5 972V1004M1351.5 984V1011M1352.5 968V1018M1353.5 979V1035M1354.5 980V1018M1355.5 974V995M1356.5 944V1050M1357.5 973V1004M1358.5 982V997M1359.5 977V1019M1360.5 972V1004M1361.5 958V1003M1362.5 956V1010M1363.5 981V998M1364.5 976V1000M1365.5 972V1028M1366.5 975V1017M1367.5 941V1043M1368.5 971V1008M1369.5 980V1010M1370.5 978V1001M1371.5 966V1003M1372.5 965V1023M1373.5 968V1004M1374.5 981V1002M1375.5 987V1001M1376.5 984V1015M1377.5 984V1000M1378.5 954V1008M1379.5 952V999M1380.5 961V999M1381.5 980V1010M1382.5 961V1011M1383.5 963V1010M1384.5 980V1007M1385.5 960V1032M1386.5 965V1005M1387.5 951V1013M1388.5 984V1033M1389.5 964V1006M1390.5 962V1024M1391.5 982V1000M1392.5 950V1009M1393.5 980V1025M1394.5 961V1003M1395.5 950V1000M1396.5 963V1016M1397.5 979V1023M1398.5 976V1008M1399.5 975V1004M1400.5 948V1025M1401.5 982V1024M1402.5 951V1004M1403.5 975V1014M1404.5 974V1005M1405.5 965V998M1406.5 971V1029M1407.5 974V1003M1408.5 972V1010M1409.5 982V999M1410.5 984V1000M1411.5 978V1030M1412.5 983V1004M1413.5 955V1008M1414.5 982V1009M1415.5 956V1002M1416.5 971V1031M1417.5 969V996M1418.5 975V1009M1419.5 960V1016M1420.5 974V1002M1421.5 957V1062M1422.5 982V996M1423.5 936V1006M1424.5 974V1002M1425.5 914V1076M1426.5 988V1000M1427.5 961V1019M1428.5 971V1004M1429.5 956V1032M1430.5 976V1011M1431.5 956V1020M1432.5 985V1007M1433.5 973V1019M1434.5 948V1011M1435.5 950V1024M1436.5 973V1011M1437.5 948V997M1438.5 933V1002M1439.5 971V1001M1440.5 964V1000M1441.5 954V1012M1442.5 964V1027M1443.5 979V1004M1444.5 980V1027M1445.5 988V1016M1446.5 975V1002M1447.5 980V1010M1448.5 965V1028M1449.5 962V1003M1450.5 960V1032M1451.5 974V1008M1452.5 976V1011M1453.5 940V998M1454.5 983V1007M1455.5 973V1005M1456.5 968V1023M1457.5 957V1082M1458.5 985V1016M1459.5 979V1003M1460.5 950V1058M1461.5 937V1071M1462.5 977V1004M1463.5 978V1013M1464.5 965V1002M1465.5 970V1026M1466.5 975V999M1467.5 975V1011M1468.5 975V995M1469.5 979V1011M1470.5 962V1014M1471.5 981V998M1472.5 974V1003M1473.5 934V1029M1474.5 985V1007M1475.5 979V1007M1476.5 962V1065M1477.5 974V1000M1478.5 980V1002M1479.5 977V1018M1480.5 969V1029M1481.5 968V1000M1482.5 968V996M1483.5 969V1009M1484.5 972V1004M1485.5 972V997M1486.5 974V1024M1487.5 954V1005M1488.5 972V1002M1489.5 981V1009M1490.5 978V1033M1491.5 969V1006M1492.5 974V1007M1493.5 971V1011M1494.5 958V1024M1495.5 972V1012M1496.5 981V1012M1497.5 965V1014M1498.5 967V999M1499.5 973V999M1500.5 983V1007M1501.5 972V998M1502.5 981V1001M1503.5 980V1003M1504.5 975V1002M1505.5 975V1013M1506.5 983V1020M1507.5 978V1019M1508.5 976V1023M1509.5 987V1002M1510.5 978V1008M1511.5 955V999M1512.5 976V1000M1513.5 979V1006M1514.5 972V1004M1515.5 963V1009M1516.5 946V1003M1517.5 966V1008M1518.5 981V1008M1519.5 976V1007M1520.5 968V1022M1521.5 966V1016M1522.5 983V1011M1523.5 912V1025M1524.5 945V1004M1525.5 957V1027M1526.5 986V1012M1527.5 966V1025M1528.5 973V1006M1529.5 965V998M1530.5 953V1009M1531.5 970V996M1532.5 966V1016M1533.5 970V1003M1534.5 978V1000M1535.5 974V998M1536.5 956V999M1537.5 948V1010M1538.5 975V999M1539.5 977V1001M1540.5 984V1022M1541.5 980V1002M1542.5 981V1014M1543.5 977V998M1544.5 982V1000M1545.5 970V1010M1546.5 983V1008M1547.5 969V1006M1548.5 969V1004M1549.5 977V1012M1550.5 959V998M1551.5 961V1010M1552.5 981V1008M1553.5 978V1007M1554.5 981V1029M1555.5 974V1072M1556.5 977V999M1557.5 973V1014M1558.5 975V1001M1559.5 977V1001M1560.5 983V1020M1561.5 972V1004M1562.5 988V1007M1563.5 988V997M1564.5 985V1008M1565.5 966V997M1566.5 973V1000M1567.5 978V999M1568.5 977V1001M1569.5 979V1022M1570.5 953V1002M1571.5 909V1046M1572.5 974V1009M1573.5 983V999M1574.5 976V1019M1575.5 956V1018M1576.5 963V1030M1577.5 960V1004M1578.5 978V1007M1579.5 969V997M1580.5 965V996M1581.5 987V1026M1582.5 982V1000M1583.5 959V998M1584.5 962V1001M1585.5 979V1009M1586.5 965V1012M1587.5 968V1007M1588.5 956V1007M1589.5 970V999M1590.5 982V1025M1591.5 915V1012M1592.5 975V998M1593.5 977V1009M1594.5 975V999M1595.5 976V1006M1596.5 979V998M1597.5 966V1010M1598.5 962V997M1599.5 964V1009M1600.5 979V1011M1601.5 978V1009M1602.5 959V1014M1603.5 986V1015M1604.5 985V1009M1605.5 970V1022M1606.5 983V1007M1607.5 973V1001M1608.5 931V1048M1609.5 980V996M1610.5 982V1026M1611.5 985V1014M1612.5 951V1033M1613.5 978V1008M1614.5 960V1009M1615.5 981V1013M1616.5 973V998M1617.5 987V1019M1618.5 977V1003M1619.5 973V1008M1620.5 975V1010M1621.5 964V1023M1622.5 986V1003M1623.5 974V1002M1624.5 963V1007M1625.5 968V1028M1626.5 970V1002M1627.5 966V1017M1628.5 957V1001M1629.5 971V1009M1630.5 974V999M1631.5 980V1011M1632.5 976V1000M1633.5 986V1010M1634.5 946V1017M1635.5 978V1003M1636.5 985V1005M1637.5 980V1006M1638.5 974V1013M1639.5 960V998M1640.5 962V1001M1641.5 972V1005M1642.5 949V1001M1643.5 975V995M1644.5 928V1036M1645.5 968V1000M1646.5 968V1012M1647.5 979V1005M1648.5 980V995M1649.5 984V1022M1650.5 986V1011M1651.5 959V1034M1652.5 985V1001M1653.5 982V997M1654.5 966V1008M1655.5 986V1020M1656.5 960V995M1657.5 974V1003M1658.5 978V994M1659.5 979V1006M1660.5 982V1018M1661.5 965V1011M1662.5 978V1019M1663.5 964V1041M1664.5 975V1004M1665.5 988V1020M1666.5 980V999M1667.5 984V1016M1668.5 987V995M1669.5 965V994M1670.5 967V996M1671.5 986V1010M1672.5 985V1005M1673.5 983V997M1674.5 975V1015M1675.5 967V1001M1676.5 984V999M1677.5 982V1003M1678.5 969V1007M1679.5 985V1005M1680.5 983V999M1681.5 985V999M1682.5 988V1002M1683.5 984V1000M1684.5 977V1003M1685.5 987V997M1686.5 971V1001M1687.5 974V998M1688.5 987V1003M1689.5 987V1011M1690.5 988V997M1691.5 983V997M1692.5 980V1000M1693.5 987V998M1694.5 984V1011M1695.5 986V999M1696.5 983V996M1697.5 984V994M1698.5 985V997M1699.5 977V1004M1700.5 986V995M1701.5 986V1006M1702.5 984V1001M1703.5 983V998M1704.5 983V993M1705.5 983V1000M1706.5 987V999M1707.5 959V1019M1708.5 979V992M1709.5 980V998M1710.5 987V995M1711.5 987V998M1712.5 971V1007M1713.5 988V1002M1714.5 986V999M1715.5 979V1000M1716.5 979V998M1717.5 981V999M1718.5 978V994M1719.5 980V996M1720.5 981V999M1721.5 988V994M1722.5 982V999M1723.5 980V1005M1724.5 977V1005M1725.5 986V1015M1726.5 981V1004M1727.5 989V997M1728.5 987V1005M1729.5 986V999M1730.5 981V996M1731.5 987V993M1732.5 982V1003M1733.5 988V1002M1734.5 982V1006M1735.5 985V994M1736.5 983V1002M1737.5 983V1009M1738.5 986V995M1739.5 975V1001M1740.5 972V994M1741.5 988V1009M1742.5 983V1009M1743.5 976V1006M1744.5 978V1001M1745.5 977V1030M1746.5 988V1003M1747.5 989V995M1748.5 960V1011M1749.5 986V997M1750.5 987V998M1751.5 984V1001M1752.5 987V1001M1753.5 985V1003M1754.5 986V1000M1755.5 984V1005M1756.5 976V1001M1757.5 988V998M1758.5 988V998M1759.5 990V1004M1760.5 987V1008M1761.5 990V998M1762.5 986V1003M1763.5 979V1000M1764.5 989V1010M1765.5 975V997M1766.5 985V999M1767.5 964V1008M1768.5 984V997M1769.5 979V993M1770.5 975V1001M1771.5 986V998M1772.5 985V1008M1773.5 984V1004M1774.5 989V996M1775.5 985V999M1776.5 985V999M1777.5 986V995M1778.5 983V995M1779.5 984V995M1780.5 990V994M1781.5 987V994M1782.5 979V996M1783.5 984V995M1784.5 985V996M1785.5 985V1029M1786.5 982V997M1787.5 988V1001M1788.5 988V999M1789.5 986V996M1790.5 989V995M1791.5 986V994M1792.5 978V997M1793.5 982V1008M1794.5 979V1004M1795.5 987V1006M1796.5 977V1005M1797.5 983V995M1798.5 989V997M1799.5 984V994M1800.5 988V995M1801.5 987V998M1802.5 987V1010M1803.5 986V999M1804.5 986V1001M1805.5 974V1007M1806.5 979V1001M1807.5 985V999M1808.5 989V997M1809.5 986V999M1810.5 986V995M1811.5 988V1001M1812.5 976V995M1813.5 988V1001M1814.5 982V1000M1815.5 988V996M1816.5 989V998M1817.5 989V998M1818.5 980V996M1819.5 987V997M1820.5 974V998M1821.5 987V994M1822.5 990V1002M1823.5 981V997M1824.5 978V1005M1825.5 984V998M1826.5 984V1003M1827.5 981V993M1828.5 983V998M1829.5 986V996M1830.5 988V1007M1831.5 988V996M1832.5 987V998M1833.5 987V1003M1834.5 989V998M1835.5 985V995M1836.5 990V1001M1837.5 986V994M1838.5 986V1002M1839.5 989V995M1840.5 983V999M1841.5 985V995M1842.5 982V993M1843.5 981V995M1844.5 983V996M1845.5 984V994M1846.5 985V994M1847.5 987V1003M1848.5 985V998M1849.5 984V1008M1850.5 985V1000M1851.5 983V999M1852.5 974V1003M1853.5 988V998M1854.5 983V996M1855.5 986V997M1856.5 988V1004M1857.5 987V995M1858.5 987V995M1859.5 972V1002M1860.5 983V995M1861.5 985V1004M1862.5 982V1003M1863.5 989V1003M1864.5 989V993M1865.5 979V995M1866.5 986V995M1867.5 987V1019M1868.5 987V994M1869.5 989V1000M1870.5 987V997M1871.5 986V996M1872.5 987V994M1873.5 989V995M1874.5 988V993M1875.5 986V994M1876.5 986V1003M1877.5 989V996M1878.5 982V995M1879.5 988V998M1880.5 988V996M1881.5 988V999M1882.5 989V993M1883.5 985V1009M1884.5 988V994M1885.5 987V993M1886.5 986V996M1887.5 990V992M1888.5 988V994M1889.5 986V993M1890.5 989V993M1891.5 987V997M1892.5 985V997M1893.5 988V997M1894.5 982V1008M1895.5 990V995M1896.5 989V998M1897.5 989V996M1898.5 989V995M1899.5 989V1000M1900.5 989V997M1901.5 989V995M1902.5 986V992M1903.5 990V994M1904.5 990V995M1905.5 990V994M1906.5 988V995M1907.5 990V995M1908.5 988V994M1909.5 989V994M1910.5 983V993M1911.5 989V992M1912.5 988V993M1913.5 989V993M1914.5 989V993M1915.5 989V994M1916.5 988V996M1917.5 989V994M1918.5 990V993M1919.5 989V992M1920.5 990V993M1921.5 990V995M1922.5 990V995M1923.5 990V995M1924.5 990V993M1925.5 989V992M1926.5 989V995M1927.5 990V992M1928.5 990V992M1929.5 990V992M1930.5 980V1027M1931.5 979V1018M1932.5 982V1001M1933.5 924V1000M1934.5 951V1072M1935.5 952V1019M1936.5 909V1090M1937.5 948V1037M1938.5 954V1030M1939.5 947V1050M1940.5 931V1008M1941.5 960V1006M1942.5 923V1052M1943.5 956V1013M1944.5 747V1078M1945.5 982V1051M1946.5 976V1102M1947.5 920V1025M1948.5 956V1009M1949.5 927V1063M1950.5 947V1024M1951.5 905V1054M1952.5 944V1028M1953.5 964V1071M1954.5 869V1124M1955.5 968V1023M1956.5 957V1039M1957.5 943V1014M1958.5 979V1014M1959.5 929V1023M1960.5 942V999M1961.5 967V1019M1962.5 937V1029M1963.5 929V1002M1964.5 918V1000M1965.5 919V1019M1966.5 904V1073M1967.5 949V1019M1968.5 960V1039M1969.5 977V1084M1970.5 951V1044M1971.5 895V1073M1972.5 951V1011M1973.5 923V1024M1974.5 943V1012M1975.5 966V1045M1976.5 971V1040M1977.5 935V1118M1978.5 978V1013M1979.5 978V1048M1980.5 983V1003M1981.5 943V1030M1982.5 911V1012M1983.5 917V1037M1984.5 942V993M1985.5 858V1021M1986.5 959V1036M1987.5 976V1071M1988.5 956V1055M1989.5 980V1002M1990.5 946V1064M1991.5 974V1052M1992.5 926V1077M1993.5 966V1062M1994.5 926V997M1995.5 985V1026M1996.5 932V992M1997.5 960V1047M1998.5 963V1004M1999.5 952V1007M2000.5 930V1070M2001.5 966V1003M2002.5 975V993M2003.5 959V1003M2004.5 984V1022M2005.5 958V1011M2006.5 969V1030M2007.5 956V995M2008.5 948V1023M2009.5 985V1069M2010.5 920V1048M2011.5 977V1024M2012.5 960V1015M2013.5 981V1042M2014.5 934V1020M2015.5 983V1021M2016.5 977V1000M2017.5 990V1000M2018.5 989V1002M2019.5 951V1028M2020.5 936V1002M2021.5 923V1050M2022.5 959V1010M2023.5 961V1017M2024.5 976V1008M2025.5 968V995M2026.5 983V994M2027.5 975V1003M2028.5 952V1012M2029.5 963V992M2030.5 974V1004M2031.5 985V1015M2032.5 988V1001M2033.5 985V1015M2034.5 941V1011M2035.5 986V1005M2036.5 985V1054M2037.5 952V1044M2038.5 974V1006M2039.5 932V1022M2040.5 954V1026M2041.5 990V1011M2042.5 989V1002M2043.5 961V1023M2044.5 970V1023M2045.5 971V1033M2046.5 927V1002M2047.5 927V1020M2048.5 980V1035M2049.5 964V1042M2050.5 978V1018M2051.5 933V1005M2052.5 989V1028M2053.5 949V1014M2054.5 959V1005M2055.5 955V1006M2056.5 981V1005M2057.5 981V1029M2058.5 932V1066M2059.5 932V1004M2060.5 949V1007M2061.5 946V1014M2062.5 975V993M2063.5 980V999M2064.5 982V1023M2065.5 966V1001M2066.5 936V1030M2067.5 962V1020M2068.5 980V1011M2069.5 977V1015M2070.5 953V1009M2071.5 933V1000M2072.5 977V1005M2073.5 967V1043M2074.5 988V1036M2075.5 957V1001M2076.5 954V1047M2077.5 959V1006M2078.5 954V1031M2079.5 967V1013M2080.5 988V995M2081.5 974V997M2082.5 975V1014M2083.5 985V1028M2084.5 906V1021M2085.5 981V993M2086.5 958V1021M2087.5 981V1021M2088.5 945V1013M2089.5 969V1019M2090.5 978V1001M2091.5 964V1030M2092.5 947V1014M2093.5 922V1039M2094.5 984V999M2095.5 966V1062M2096.5 939V1000M2097.5 952V1010M2098.5 891V1082M2099.5 955V996M2100.5 966V1025M2101.5 933V1007M2102.5 980V1003M2103.5 936V999M2104.5 970V1001M2105.5 976V993M2106.5 912V1032M2107.5 986V1006M2108.5 961V1005M2109.5 974V1065M2110.5 988V1015M2111.5 966V1032M2112.5 958V1039M2113.5 953V1008M2114.5 951V1008M2115.5 972V1040M2116.5 964V1025M2117.5 971V1010M2118.5 981V996M2119.5 974V998M2120.5 932V1000M2121.5 964V1024M2122.5 972V1022M2123.5 955V998M2124.5 989V1006M2125.5 971V1006M2126.5 979V1010M2127.5 947V1031M2128.5 979V1002M2129.5 938V994M2130.5 956V1010M2131.5 950V1002M2132.5 978V1017M2133.5 972V1012M2134.5 963V1011M2135.5 967V996M2136.5 985V1031M2137.5 985V1002M2138.5 979V1014M2139.5 962V999M2140.5 979V1009M2141.5 918V1038M2142.5 978V1014M2143.5 971V1019M2144.5 973V1005M2145.5 955V1000M2146.5 959V1012M2147.5 953V1006M2148.5 955V1044M2149.5 912V1049M2150.5 976V1014M2151.5 980V1004M2152.5 987V1056M2153.5 982V992M2154.5 981V1008M2155.5 980V1010M2156.5 955V994M2157.5 975V1016M2158.5 982V1013M2159.5 978V1004M2160.5 970V1013M2161.5 942V1009M2162.5 971V1010M2163.5 983V1018M2164.5 972V1000M2165.5 964V1008M2166.5 947V1012M2167.5 982V1016M2168.5 963V1007M2169.5 982V1024M2170.5 984V1028M2171.5 965V1018M2172.5 985V1012M2173.5 971V996M2174.5 962V1015M2175.5 974V1025M2176.5 984V1011M2177.5 961V997M2178.5 959V1016M2179.5 960V1027M2180.5 972V1025M2181.5 985V1012M2182.5 975V1000M2183.5 951V1028M2184.5 983V1022M2185.5 986V1017M2186.5 965V1009M2187.5 951V1008M2188.5 967V1003M2189.5 983V1009M2190.5 983V1010M2191.5 977V1013M2192.5 973V997M2193.5 957V996M2194.5 978V1016M2195.5 974V1003M2196.5 985V1013M2197.5 988V1005M2198.5 977V1007M2199.5 959V1028M2200.5 983V1006M2201.5 982V1006M2202.5 979V1002M2203.5 980V996M2204.5 986V1008M2205.5 977V1021M2206.5 975V1007M2207.5 976V1005M2208.5 979V992M2209.5 962V1043M2210.5 986V997M2211.5 980V1000M2212.5 977V998M2213.5 978V1002M2214.5 990V994M2215.5 978V996M2216.5 946V999M2217.5 976V1010M2218.5 985V1001M2219.5 970V999M2220.5 948V998M2221.5 984V996M2222.5 961V1001M2223.5 989V1012M2224.5 972V1000M2225.5 969V998M2226.5 988V999M2227.5 978V994M2228.5 968V1002M2229.5 983V996M2230.5 985V995M2231.5 980V996M2232.5 984V997M2233.5 985V998M2234.5 982V997M2235.5 982V992M2236.5 985V994M2237.5 989V992M2238.5 971V1000M2239.5 990V995M2240.5 986V999M2241.5 986V999M2242.5 977V997M2243.5 987V993M2244.5 989V995M2245.5 990V993M2246.5 990V994M2247.5 985V996M2248.5 986V996M2249.5 988V998M2250.5 983V994M2251.5 983V994M2252.5 988V993M2253.5 989V996M2254.5 985V996M2255.5 984V994M2256.5 990V996M2257.5 985V997M2258.5 990V992M2259.5 984V998M2260.5 980V995M2261.5 988V994M2262.5 989V995M2263.5 987V998M2264.5 990V994M2265.5 986V995M2266.5 985V995M2267.5 988V994M2268.5 988V994M2269.5 989V998M2270.5 988V996M2271.5 989V997M2272.5 986V992M2273.5 987V992M2274.5 990V993M2275.5 988V994M2276.5 990V992M2277.5 990V993M2278.5 990V993M2279.5 989V993M2280.5 990V993M2281.5 988V993M2282.5 990V992M2283.5 990V994M2284.5 990V996M2285.5 990V996M2286.5 990V993M2287.5 990V992M2288.5 990V993M2289.5 989V992M2290.5 990V995M2291.5 990V993M2292.5 990V992M2293.5 990V992M2294.5 988V993M2295.5 990V992M2296.5 990V992M2297.5 990V994M2298.5 990V992M2299.5 990V992M2300.5 990V993M2301.5 989V993M2302.5 990V993M2303.5 990V993M2304.5 990V993M2305.5 990V993M2306.5 990V992M2307.5 990V993M2308.5 990V992M2309.5 988V992M2310.5 990V992M2311.5 990V992M2312.5 990V992M2313.5 990V992M2314.5 989V993M2315.5 989V994M2316.5 982V992M2317.5 982V992M2318.5 984V992M2319.5 982V994M2320.5 988V994M2321.5 985V995M2322.5 985V993M2323.5 987V993M2324.5 986V998M2325.5 987V993M2326.5 977V993M2327.5 979V993M2328.5 984V993M2329.5 984V997M2330.5 983V999M2331.5 988V996M2332.5 988V1006M2333.5 983V994M2334.5 987V995M2335.5 980V993M2336.5 969V993M2337.5 983V1002M2338.5 978V996M2339.5 983V1001M2340.5 982V996M2341.5 980V997M2342.5 985V998M2343.5 989V998M2344.5 987V997M2345.5 979V992M2346.5 987V994M2347.5 985V992M2348.5 980V994M2349.5 986V999M2350.5 986V993M2351.5 989V1001M2352.5 990V997M2353.5 990V993M2354.5 988V995M2355.5 988V996M2356.5 988V993M2357.5 989V997M2358.5 990V993M2359.5 980V995M2360.5 989V997M2361.5 989V993M2362.5 987V995M2363.5 990V992M2364.5 989V1001M2365.5 990V993M2366.5 988V994M2367.5 990V992M2368.5 989V993M2369.5 988V994M2370.5 990V992M2371.5 990V992M2372.5 990V994M2373.5 989V992M2374.5 990V993M2375.5 989V992M2376.5 990V992M2377.5 990V992M2378.5 990V992M2379.5 990V992M2380.5 990V992M2381.5 990V992M2382.5 990V992M2383.5 990V992M2384.5 990V992M2385.5 989V992M2386.5 990V992M2387.5 990V993M2388.5 990V992M2389.5 990V992M2390.5 989V992M2391.5 990V992M2392.5 990V992M2393.5 990V992M2394.5 990V992M2395.5 989V992M2396.5 990V992M2397.5 990V992M2398.5 990V992M2399.5 990V992M2400.5 990V992M2401.5 990V992M2402.5 990V992M2403.5 990V992M2404.5 990V992M2405.5 990V992M2406.5 990V992M2407.5 990V992M2408.5 990V992M2409.5 990V992M2410.5 990V992M2411.5 990V992M2412.5 990V992M2413.5 990V992M2414.5 990V992M2415.5 990V992M2416.5 990V992M2417.5 990V992M2418.5 990V992M2419.5 990V992M2420.5 990V992M2421.5 990V992M2422.5 990V992M2423.5 990V992M2424.5 990V992M2425.5 990V992M2426.5 990V992M2427.5 990V992M2428.5 990V992M2429.5 990V992M2430.5 990V992M2431.5 990V992M2432.5 990V992M2433.5 990V992M2434.5 990V992M2435.5 990V992M2436.5 990V992M2437.5 990V992M2438.5 990V992M2439.5 990V992M2440.5 990V992M2441.5 990V992M2442.5 990V992M2443.5 990V992M2444.5 990V992M2445.5 990V992M2446.5 990V992M2447.5 990V992M2448.5 990V992M2449.5 990V992M2450.5 990V992M2451.5 990V992M2452.5 990V992M2453.5 990V992M2454.5 990V992M2455.5 990V992M2456.5 990V992M2457.5 990V992M2458.5 990V992M2459.5 990V992M2460.5 989V996M2461.5 987V1002M2462.5 987V997M2463.5 985V994M2464.5 975V998M2465.5 982V1004M2466.5 986V1003M2467.5 925V1029M2468.5 986V1017M2469.5 985V1022M2470.5 955V1041M2471.5 968V1003M2472.5 977V1019M2473.5 943V1045M2474.5 945V1008M2475.5 943V1000M2476.5 940V1006M2477.5 939V1043M2478.5 946V1090M2479.5 852V1016M2480.5 939V1047M2481.5 967V998M2482.5 957V1025M2483.5 945V1072M2484.5 932V998M2485.5 981V1084M2486.5 931V1103M2487.5 872V1101M2488.5 964V1008M2489.5 934V1008M2490.5 932V1028M2491.5 949V1063M2492.5 981V1023M2493.5 965V1030M2494.5 986V1024M2495.5 929V1024M2496.5 901V1032M2497.5 950V1027M2498.5 948V1035M2499.5 956V1042M2500.5 923V1058M2501.5 971V1079M2502.5 960V1008M2503.5 970V1025M2504.5 911V1004M2505.5 988V1040M2506.5 932V1028M2507.5 960V1082M2508.5 952V1019M2509.5 969V1006M2510.5 837V1087M2511.5 977V1053M2512.5 963V1015M2513.5 859V1025M2514.5 882V1039M2515.5 989V1035M2516.5 973V1021M2517.5 982V1018M2518.5 929V1044M2519.5 920V1024M2520.5 974V1022M2521.5 948V997M2522.5 912V1033M2523.5 946V1006M2524.5 902V1011M2525.5 953V1006M2526.5 973V1000M2527.5 987V1043M2528.5 939V1000M2529.5 979V1020M2530.5 970V1105M2531.5 902V1000M2532.5 976V1019M2533.5 969V1027M2534.5 962V995M2535.5 880V995M2536.5 882V1011M2537.5 961V1057M2538.5 938V1045M2539.5 978V1015M2540.5 969V1004M2541.5 978V1030M2542.5 944V1019M2543.5 954V1018M2544.5 951V1011M2545.5 946V1012M2546.5 971V1002M2547.5 921V1071M2548.5 980V1044M2549.5 964V1026M2550.5 955V1010M2551.5 939V1036M2552.5 964V994M2553.5 980V1005M2554.5 975V1025M2555.5 960V1010M2556.5 970V1009M2557.5 967V992M2558.5 979V1044M2559.5 984V1006M2560.5 963V997M2561.5 977V999M2562.5 977V1019M2563.5 968V1015M2564.5 943V1001M2565.5 948V1036M2566.5 974V1000M2567.5 972V1002M2568.5 964V1008M2569.5 946V994M2570.5 976V997M2571.5 972V992M2572.5 973V1002M2573.5 976V1000M2574.5 990V1001M2575.5 962V998M2576.5 983V994M2577.5 982V1003M2578.5 980V1004M2579.5 973V995M2580.5 981V1001M2581.5 962V1003M2582.5 963V1001M2583.5 957V994M2584.5 970V1012M2585.5 965V1015M2586.5 970V1002M2587.5 987V1001M2588.5 981V998M2589.5 979V1007M2590.5 961V1017M2591.5 974V992M2592.5 967V1009M2593.5 986V997M2594.5 975V998M2595.5 979V995M2596.5 971V992M2597.5 980V994M2598.5 966V1023M2599.5 957V1000M2600.5 966V998M2601.5 981V998M2602.5 976V999M2603.5 982V999M2604.5 988V998M2605.5 983V1003M2606.5 977V1002M2607.5 979V993M2608.5 971V999M2609.5 980V994M2610.5 969V996M2611.5 990V1006M2612.5 914V1021M2613.5 988V993M2614.5 935V1007M2615.5 985V1010M2616.5 975V995M2617.5 989V995M2618.5 967V998M2619.5 979V994M2620.5 984V998M2621.5 981V1000M2622.5 981V1009M2623.5 984V1001M2624.5 964V1006M2625.5 975V997M2626.5 988V995M2627.5 984V996M2628.5 984V1002M2629.5 987V996M2630.5 979V993M2631.5 989V999M2632.5 980V999M2633.5 983V999M2634.5 989V994M2635.5 972V995M2636.5 972V998M2637.5 973V1002M2638.5 988V1007M2639.5 958V1003M2640.5 971V1001M2641.5 982V1001M2642.5 980V992M2643.5 980V1001M2644.5 983V994M2645.5 963V998M2646.5 979V994M2647.5 987V998M2648.5 989V998M2649.5 985V997M2650.5 986V998M2651.5 990V1000M2652.5 986V992M2653.5 989V993M2654.5 987V993M2655.5 989V1001M2656.5 988V993M2657.5 989V992M2658.5 990V993M2659.5 987V995M2660.5 986V997M2661.5 986V993M2662.5 990V994M2663.5 986V994M2664.5 988V995M2665.5 989V998M2666.5 988V996M2667.5 986V993M2668.5 984V994M2669.5 987V994M2670.5 984V993M2671.5 981V995M2672.5 983V995M2673.5 984V993M2674.5 989V992M2675.5 989V992M2676.5 989V992M2677.5 986V993M2678.5 990V992M2679.5 986V993M2680.5 988V992M2681.5 990V994M2682.5 990V992M2683.5 988V993M2684.5 988V992M2685.5 989V993M2686.5 988V994M2687.5 990V992M2688.5 990V992M2689.5 989V992M2690.5 988V992M2691.5 990V992M2692.5 990V992M2693.5 990V992M2694.5 990V992M2695.5 990V992M2696.5 990V992M2697.5 989V992M2698.5 990V992M2699.5 990V992M2700.5 989V992M2701.5 990V992M2702.5 990V992M2703.5 990V992M2704.5 989V992M2705.5 990V992M2706.5 990V992M2707.5 990V992M2708.5 990V992M2709.5 990V992M2710.5 990V992M2711.5 990V992M2712.5 990V992M2713.5 989V992M2714.5 990V992M2715.5 990V992M2716.5 990V992M2717.5 990V992M2718.5 990V992M2719.5 990V992M2720.5 990V992M2721.5 990V992M2722.5 990V992M2723.5 990V992M2724.5 990V992M2725.5 990V992M2726.5 990V992M2727.5 989V993M2728.5 990V993M2729.5 990V993M2730.5 990V992M2731.5 984V995M2732.5 989V993M2733.5 984V995M2734.5 990V995M2735.5 985V994M2736.5 985V996M2737.5 986V997M2738.5 982V995M2739.5 986V995M2740.5 988V1000M2741.5 985V992M2742.5 981V997M2743.5 980V994M2744.5 989V995M2745.5 986V993M2746.5 988V996M2747.5 978V1004M2748.5 988V997M2749.5 989V993M2750.5 975V993M2751.5 986V994M2752.5 988V994M2753.5 985V994M2754.5 978V1004M2755.5 987V993M2756.5 984V1001M2757.5 987V995M2758.5 988V992M2759.5 987V992M2760.5 984V998M2761.5 988V992M2762.5 987V993M2763.5 986V996M2764.5 987V998M2765.5 988V993M2766.5 987V996M2767.5 990V993M2768.5 989V993M2769.5 983V999M2770.5 990V992M2771.5 990V992M2772.5 988V992M2773.5 988V993M2774.5 990V992M2775.5 990V992M2776.5 990V992M2777.5 990V992M2778.5 990V993M2779.5 990V993M2780.5 990V992M2781.5 990V992M2782.5 990V993M2783.5 990V992M2784.5 990V992M2785.5 990V992M2786.5 990V995M2787.5 990V994M2788.5 990V993M2789.5 990V993M2790.5 990V992M2791.5 990V992M2792.5 989V994M2793.5 990V994M2794.5 990V992M2795.5 990V992M2796.5 989V993M2797.5 990V992M2798.5 990V993M2799.5 990V992M2800.5 990V992M2801.5 990V992M2802.5 990V992M2803.5 990V992M2804.5 990V992M2805.5 990V992M2806.5 989V994M2807.5 990V992M2808.5 990V992M2809.5 990V992M2810.5 989V995M2811.5 990V992M2812.5 990V992M2813.5 990V992M2814.5 990V992M2815.5 990V992M2816.5 990V993M2817.5 990V992M2818.5 990V992M2819.5 990V992M2820.5 990V993M2821.5 990V992M2822.5 990V992M2823.5 990V992M2824.5 990V992M2825.5 990V992M2826.5 990V993M2827.5 990V992M2828.5 990V992M2829.5 990V992M2830.5 990V992M2831.5 990V992M2832.5 990V992M2833.5 990V992M2834.5 990V992M2835.5 990V992M2836.5 990V992M2837.5 989V992M2838.5 990V992M2839.5 990V992M2840.5 990V992M2841.5 990V992M2842.5 990V992M2843.5 990V992M2844.5 990V992M2845.5 990V992M2846.5 990V992M2847.5 990V992M2848.5 990V992M2849.5 989V992M2850.5 987V994M2851.5 990V994M2852.5 988V996M2853.5 986V993M2854.5 989V994M2855.5 985V996M2856.5 987V995M2857.5 988V992M2858.5 986V993M2859.5 986V995M2860.5 981V995M2861.5 987V995M2862.5 979V1001M2863.5 988V998M2864.5 988V993M2865.5 990V996M2866.5 978V994M2867.5 981V995M2868.5 981V997M2869.5 987V994M2870.5 982V999M2871.5 985V997M2872.5 985V1000M2873.5 989V999M2874.5 979V995M2875.5 989V992M2876.5 987V992M2877.5 984V994M2878.5 985V995M2879.5 985V995M2880.5 983V997M2881.5 990V994M2882.5 982V995M2883.5 986V993M2884.5 986V992M2885.5 988V994M2886.5 989V1001M2887.5 985V994M2888.5 990V992M2889.5 985V1001M2890.5 986V993M2891.5 988V992M2892.5 990V993M2893.5 990V992M2894.5 990V992M2895.5 989V992M2896.5 989V992M2897.5 990V992M2898.5 990V992M2899.5 990V992M2900.5 990V993M2901.5 990V992M2902.5 989V993M2903.5 990V992M2904.5 990V992M2905.5 990V992M2906.5 989V992M2907.5 990V992M2908.5 990V992M2909.5 990V992M2910.5 989V992M2911.5 990V992M2912.5 990V992M2913.5 990V992M2914.5 990V992M2915.5 990V992M2916.5 989V992M2917.5 990V992M2918.5 990V992M2919.5 990V992M2920.5 989V992M2921.5 990V992M2922.5 990V993M2923.5 990V992M2924.5 990V992M2925.5 990V992M2926.5 990V992M2927.5 990V992M2928.5 990V992M2929.5 989V992M2930.5 990V992M2931.5 990V992M2932.5 990V993M2933.5 990V992M2934.5 990V992M2935.5 990V992M2936.5 990V992M2937.5 990V992M2938.5 990V993M2939.5 990V992M2940.5 990V992M2941.5 990V992M2942.5 990V992M2943.5 990V992M2944.5 989V992M2945.5 990V992M2946.5 990V992M2947.5 990V992M2948.5 990V992M2949.5 990V992M2950.5 990V992M2951.5 990V992M2952.5 990V992M2953.5 990V992M2954.5 990V993M2955.5 990V992M2956.5 990V992M2957.5 990V992M2958.5 990V992M2959.5 990V992M2960.5 990V993M2961.5 990V992M2962.5 990V992M2963.5 990V992M2964.5 988V992M2965.5 990V992M2966.5 990V992M2967.5 990V992M2968.5 990V992M2969.5 990V992M2970.5 990V992M2971.5 990V992M2972.5 990V992M2973.5 990V992M2974.5 990V992M2975.5 990V992M2976.5 990V992M2977.5 990V992M2978.5 990V992M2979.5 990V992M2980.5 990V992M2981.5 990V992M2982.5 990V992M2983.5 990V992M2984.5 990V992M2985.5 990V992M2986.5 990V992M2987.5 990V992M2988.5 990V992M2989.5 990V992M2990.5 987V1000M2991.5 987V995M2992.5 987V993M2993.5 990V995M2994.5 985V994M2995.5 966V995M2996.5 975V993M2997.5 970V998M2998.5 986V999M2999.5 970V1004M3000.5 971V1001M3001.5 972V1023M3002.5 969V998M3003.5 981V993M3004.5 966V1000M3005.5 959V1022M3006.5 965V999M3007.5 955V1007M3008.5 940V996M3009.5 960V996M3010.5 987V1001M3011.5 932V1012M3012.5 926V1021M3013.5 969V1012M3014.5 971V998M3015.5 981V1024M3016.5 951V998M3017.5 968V1000M3018.5 979V997M3019.5 977V995M3020.5 977V1022M3021.5 976V1010M3022.5 982V996M3023.5 917V996M3024.5 983V1019M3025.5 955V998M3026.5 961V1036M3027.5 971V1048M3028.5 984V999M3029.5 980V1018M3030.5 983V1004M3031.5 968V1027M3032.5 978V1016M3033.5 969V1025M3034.5 988V1010M3035.5 942V1044M3036.5 953V1033M3037.5 980V1013M3038.5 952V1005M3039.5 934V1035M3040.5 975V993M3041.5 977V1007M3042.5 979V1008M3043.5 983V1000M3044.5 925V1025M3045.5 921V997M3046.5 984V1019M3047.5 965V1030M3048.5 975V1035M3049.5 952V1007M3050.5 981V1011M3051.5 927V1032M3052.5 950V1016M3053.5 985V1022M3054.5 957V1002M3055.5 978V1008M3056.5 919V1030M3057.5 974V1041M3058.5 902V1025M3059.5 956V1018M3060.5 982V1045M3061.5 966V1011M3062.5 983V1034M3063.5 953V1091M3064.5 967V1023M3065.5 972V1002M3066.5 968V995M3067.5 950V1018M3068.5 945V1009M3069.5 976V1009M3070.5 961V1009M3071.5 937V1006M3072.5 971V1005M3073.5 950V1054M3074.5 957V1003M3075.5 967V1005M3076.5 978V1038M3077.5 951V1005M3078.5 980V1002M3079.5 961V1016M3080.5 960V1003M3081.5 982V996M3082.5 983V999M3083.5 984V1012M3084.5 953V1008M3085.5 986V1004M3086.5 966V1022M3087.5 982V997M3088.5 983V1036M3089.5 980V995M3090.5 953V1004M3091.5 971V992M3092.5 975V1000M3093.5 982V1000M3094.5 982V1014M3095.5 978V1000M3096.5 988V1008M3097.5 976V1003M3098.5 980V1011M3099.5 976V996M3100.5 961V1016M3101.5 981V1006M3102.5 989V1005M3103.5 982V1036M3104.5 971V998M3105.5 978V1001M3106.5 958V998M3107.5 953V1005M3108.5 962V1015M3109.5 984V1008M3110.5 977V1011M3111.5 987V996M3112.5 964V1005M3113.5 986V992M3114.5 981V1012M3115.5 988V1005M3116.5 982V999M3117.5 951V1013M3118.5 985V1005M3119.5 976V998M3120.5 985V1013M3121.5 965V997M3122.5 938V1034M3123.5 982V995M3124.5 919V1010M3125.5 974V994M3126.5 937V998M3127.5 880V1042M3128.5 979V1007M3129.5 909V1031M3130.5 978V996M3131.5 980V1011M3132.5 976V1018M3133.5 983V1001M3134.5 989V1013M3135.5 967V1004M3136.5 954V1002M3137.5 988V1007M3138.5 967V1018M3139.5 976V1033M3140.5 977V997M3141.5 980V1001M3142.5 977V1001M3143.5 971V1009M3144.5 952V997M3145.5 959V997M3146.5 975V1002M3147.5 959V1000M3148.5 971V1014M3149.5 981V1009M3150.5 990V1010M3151.5 975V1002M3152.5 969V995M3153.5 951V1029M3154.5 981V1019M3155.5 986V1007M3156.5 981V1009M3157.5 985V1034M3158.5 963V1000M3159.5 967V1005M3160.5 988V1000M3161.5 935V999M3162.5 960V997M3163.5 943V1002M3164.5 981V1012M3165.5 987V1008M3166.5 973V1001M3167.5 976V1018M3168.5 978V1000M3169.5 969V996M3170.5 944V999M3171.5 948V1019M3172.5 967V997M3173.5 969V1016M3174.5 964V1048M3175.5 946V1018M3176.5 982V1000M3177.5 913V1027M3178.5 988V1009M3179.5 977V1012M3180.5 978V995M3181.5 957V1018M3182.5 988V1018M3183.5 988V1003M3184.5 975V1007M3185.5 983V999M3186.5 962V1004M3187.5 977V1002M3188.5 977V1003M3189.5 976V998M3190.5 963V1032M3191.5 981V1006M3192.5 987V1022M3193.5 953V1009M3194.5 972V1028M3195.5 977V1012M3196.5 976V1004M3197.5 981V998M3198.5 970V997M3199.5 989V1020M3200.5 965V996M3201.5 983V1002M3202.5 933V1003M3203.5 966V1003M3204.5 984V1000M3205.5 944V995M3206.5 966V1028M3207.5 943V1021M3208.5 971V1011M3209.5 944V1038M3210.5 981V1031M3211.5 983V1033M3212.5 982V1004M3213.5 984V1011M3214.5 957V1015M3215.5 949V1021M3216.5 983V1037M3217.5 968V1017M3218.5 984V1032M3219.5 976V1001M3220.5 963V996M3221.5 978V1004M3222.5 964V1001M3223.5 951V1018M3224.5 953V1002M3225.5 912V1030M3226.5 988V994M3227.5 977V1013M3228.5 961V996M3229.5 961V1003M3230.5 960V1008M3231.5 982V1044M3232.5 961V1015M3233.5 964V1020M3234.5 987V1003M3235.5 987V998M3236.5 985V1019M3237.5 974V1001M3238.5 985V1009M3239.5 980V999M3240.5 966V1030M3241.5 974V1001M3242.5 986V1005M3243.5 984V997M3244.5 986V1004M3245.5 987V1001M3246.5 987V994M3247.5 988V1009M3248.5 987V994M3249.5 990V997M3250.5 989V992M3251.5 987V998M3252.5 984V996M3253.5 990V995M3254.5 986V995M3255.5 986V999M3256.5 989V995M3257.5 986V998M3258.5 985V993M3259.5 986V994M3260.5 988V994M3261.5 990V995M3262.5 983V996M3263.5 988V992M3264.5 983V995M3265.5 989V993M3266.5 983V994M3267.5 989V994M3268.5 988V992M3269.5 987V993M3270.5 989V993M3271.5 987V993M3272.5 989V996M3273.5 988V997M3274.5 981V994M3275.5 987V1006M3276.5 984V1003M3277.5 988V994M3278.5 988V996M3279.5 971V1010M3280.5 982V1000M3281.5 977V1005" stroke="#474747" stroke-width="1"/><rect x="721" y="990.5" width="2561" height="1" fill="#3a3a3a"/><rect x="720" y="703" width="2" height="562" fill="#f4f4f4"/><rect x="1098" y="703" width="2" height="562" fill="#f4f4f4"/><rect x="1930" y="703" width="2" height="562" fill="#f4f4f4"/><rect x="2459" y="703" width="2" height="562" fill="#f4f4f4"/><rect x="2989" y="703" width="2" height="562" fill="#f4f4f4"/><path d="M1801 694H1810L1801 703Z" fill="#7b9fd4"/><path d="M1930 694H1939L1930 703Z" fill="#3d6ad0"/><path d="M2318 694H2327L2318 703Z" fill="#3d6ad0"/><path d="M2459 694H2468L2459 703Z" fill="#3d6ad0"/><path d="M2730 694H2739L2730 703Z" fill="#3d6ad0"/><path d="M2869 694H2878L2869 703Z" fill="#3d6ad0"/><path d="M2989 694H2998L2989 703Z" fill="#3d6ad0"/><path d="M3144 694H3153L3144 703Z" fill="#7b9fd4"/><rect x="736" y="1282" width="362" height="7" fill="#a3cfcf"/><rect x="1098" y="1282" width="832" height="7" fill="#8dcfcf"/><rect x="1930" y="1282" width="1352" height="7" fill="#d4a3a3"/><path d="M721 1265 L736 1280 V1288 H721 Z" fill="#acacac" stroke="#6e6e6e" stroke-width="1.5"/><path d="M1087.5 1288.5 V1272.5 L1098 1265 L1108.5 1272.5 V1288.5 Z" fill="#acacac" stroke="#777" stroke-width="1.5"/><path d="M1919.5 1288.5 V1272.5 L1930 1265 L1940.5 1272.5 V1288.5 Z" fill="#acacac" stroke="#777" stroke-width="1.5"/><path d="M2448.5 1288.5 V1272.5 L2459 1265 L2469.5 1272.5 V1288.5 Z" fill="#acacac" stroke="#777" stroke-width="1.5"/><path d="M2978.5 1288.5 V1272.5 L2989 1265 L2999.5 1272.5 V1288.5 Z" fill="#acacac" stroke="#777" stroke-width="1.5"/></svg><div style="left:694px;top:1289px;width:2588px;height:1px;background:#111"></div><div style="left:283px;top:1290px;width:2999px;height:8px;background:#525252"></div><div style="left:413px;top:1298px;width:2869px;height:1px;background:#2a2a2a"></div><div style="left:413px;top:1299px;width:2869px;height:39px;background:linear-gradient(180deg,#676767,#5c5c5c)"></div><div style="left:413px;top:1338px;width:2869px;height:1px;background:#2a2a2a"></div><div style="left:283px;top:1339px;width:2999px;height:7px;background:#525252"></div><div style="left:282px;top:1346px;width:3000px;height:2px;background:#777"></div><div style="left:273px;top:853px;width:2px;height:493px;background:#5a5a5a"></div><div style="left:275px;top:853px;width:7px;height:493px;background:#2e2e2e"></div><div style="left:282px;top:853px;width:2px;height:493px;background:#707070"></div><div style="left:284px;top:853px;width:65px;height:89px;background:#404040"></div><div style="left:284px;top:942px;width:65px;height:404px;background:#525252"></div><div style="left:284px;top:1290px;width:129px;height:56px;background:#535353"></div><div style="left:349px;top:853px;width:9px;height:493px;background:#e39d00"></div><div style="left:358px;top:853px;width:55px;height:437px;background:#545454"></div><div style="left:413px;top:853px;width:1px;height:437px;background:#2a2a2a"></div><div style="left:414px;top:853px;width:281px;height:436px;background:#404040"></div><div style="left:695px;top:853px;width:1px;height:436px;background:#111"></div><div style="left:696px;top:693px;width:24px;height:596px;background:linear-gradient(90deg,#6a6a6a,#959595 60%,#a5a5a5)"></div><div style="left:366px;top:1299px;width:39px;height:39px;background:#4e4e4e;border:1px solid #2a2a2a;border-radius:3px"></div><svg style="left:366px;top:1299px" width="39" height="39" viewBox="366 1299 39 39"><path d="M386 1314 L375.5 1320.5 L386 1327 L396.5 1320.5 Z" fill="none" stroke="#f0f0f0" stroke-width="1.6"/><path d="M386 1310.5 L375.5 1317 L386 1323.5 L396.5 1317 Z" fill="#4e4e4e" stroke="#f0f0f0" stroke-width="1.6"/><path d="M386 1306 L375.5 1312.5 L386 1319 L396.5 1312.5 Z" fill="#f4f4f4"/></svg><div style="left:414px;top:1299px;width:40px;height:39px;background:#444;border:1px solid #2a2a2a;border-radius:3px 0 0 3px"></div><svg style="left:414px;top:1299px" width="40" height="39" viewBox="414 1299 40 39"><path d="M439.6 1310.6 V1326.5 L425.6 1318.5 Z" fill="#a8a8a8"/></svg><div class="t" style="left:375.3px;top:999.6px;font-size:24px;font-weight:bold;color:#f0f0f0;transform:rotate(-90deg) scaleX(0.8698);transform-origin:0 0;">AUDIO 1 #1</div><div class="t" style="left:305.6px;top:1173.5px;font-size:24px;color:#f0f0f0;transform:rotate(-90deg) scaleX(0.8247);transform-origin:0 0;">TRACK</div><div style="left:0px;top:692px;width:282px;height:2px;background:#5a5a5a"></div><div style="left:0px;top:694px;width:273px;height:47px;background:#555555"></div><div class="t" style="left:23.7px;top:707.0px;font-size:21px;font-weight:bold;color:#fff;transform:scaleX(1.0121);transform-origin:0 0;">AUDIO</div><div style="left:0px;top:741px;width:273px;height:104px;background:#404040"></div><div class="t" style="left:6.2px;top:760.0px;font-size:22px;color:#e4e4e4;transform:scaleX(1.0578);transform-origin:0 0;">Length</div><div class="t" style="left:13.1px;top:807.7px;font-size:22px;color:#e4e4e4;transform:scaleX(1.0483);transform-origin:0 0;">Muted</div><div style="left:0px;top:845px;width:273px;height:2px;background:#555"></div><div style="left:0px;top:847px;width:273px;height:499px;background:#3d3d3d"></div><div class="t" style="left:19.7px;top:864.9px;font-size:22px;color:#e4e4e4;transform:scaleX(1.0423);transform-origin:0 0;">Mode</div><div style="left:92px;top:855px;width:174px;height:40px;border-radius:4px;background:linear-gradient(180deg,#646464,#4e4e4e);border:1px solid #2a2a2a;box-shadow:inset 0 1px 0 #707070"></div><div style="left:247px;top:871px;width:0;height:0;border-left:5px solid transparent;border-right:5px solid transparent;border-top:6px solid #f0f0f0"></div><div class="t" style="left:100.0px;top:863.9px;font-size:23px;color:#f4f4f4;transform:scaleX(1.0042);transform-origin:0 0;">Stretch</div><div class="t" style="left:-22.0px;top:914.0px;font-size:22px;color:#e4e4e4;transform:scaleX(1.0000);transform-origin:0 0;">Grain size</div><div style="left:92px;top:903px;width:174px;height:40px;border-radius:4px;background:linear-gradient(180deg,#646464,#505050);border:1px solid #2a2a2a"></div><div style="left:150px;top:903px;width:57px;height:40px;background:#ff7f00"></div><div style="left:149px;top:903px;width:1px;height:40px;background:#2a2a2a"></div><div style="left:207px;top:903px;width:1px;height:40px;background:#2a2a2a"></div><svg style="left:91px;top:903px" width="175" height="40" viewBox="91 903 175 40"><path d="M104.8 914 H112.7 C117 914 117 930.5 121.4 930.5 C125.8 930.5 125.8 914 130.5 914 H137.6" fill="none" stroke="#9a9a9a" stroke-width="1.6"/><path d="M104.8 930.5 H112.7 C117 930.5 117 914 121.4 914 C125.8 914 125.8 930.5 130.5 930.5 H137.6" fill="none" stroke="#f4f4f4" stroke-width="2.4"/><path d="M163.2 914 H171.5 C176 914 176 930.5 180 930.5 C184 930.5 184 914 188.5 914 H195.7" fill="none" stroke="#b86a20" stroke-width="1.6"/><path d="M163.2 930.5 H171.5 C176.5 930.5 175.5 914 180 914 C184.5 914 183.5 930.5 188.5 930.5 H195.7" fill="none" stroke="#1a1a1a" stroke-width="2.6"/><path d="M221 914 C226 914 224 930.5 229 930.5 H245.5 C250.5 930.5 248.5 914 253.3 914" fill="none" stroke="#9a9a9a" stroke-width="1.6"/><path d="M221 930.5 C226 930.5 224 914 229 914 H245.5 C250.5 914 248.5 930.5 253.3 930.5" fill="none" stroke="#f4f4f4" stroke-width="2.4"/></svg><div class="t" style="left:-25.0px;top:961.5px;font-size:22px;color:#e4e4e4;transform:scaleX(1.0000);transform-origin:0 0;">Transients</div><div style="left:91px;top:951px;width:128px;height:40px;border-radius:4px;background:linear-gradient(180deg,#646464,#505050);border:1px solid #2a2a2a"></div><div style="left:134px;top:951px;width:42px;height:40px;background:#ff7f00"></div><div style="left:176px;top:951px;width:1px;height:40px;background:#2a2a2a"></div><div style="left:228px;top:951px;width:38px;height:40px;border-radius:4px;background:linear-gradient(180deg,#646464,#505050);border:1px solid #2a2a2a"></div><svg style="left:91px;top:951px" width="175" height="40" viewBox="91 951 175 40"><path d="M104.5 962.5 L119.5 977 M119.5 962.5 L104.5 977" stroke="#f6f6f6" stroke-width="3.6"/><path d="M147.6 961 H162 L156.5 968.5 V978.6 H153.5 V968.5 Z" fill="#161616"/><path d="M191.7 979 V961 H204.8 L196 970 V979 Z" fill="#f6f6f6"/><path d="M239.3 965 H244 L252.3 961 V979 L244 975 H239.3 Z" fill="#f6f6f6"/></svg><div class="t" style="left:30.4px;top:1009.0px;font-size:22px;color:#e4e4e4;transform:scaleX(0.9909);transform-origin:0 0;">Rate</div><div style="left:92px;top:999px;width:174px;height:40px;border-radius:4px;background:linear-gradient(180deg,#646464,#4e4e4e);border:1px solid #2a2a2a;box-shadow:inset 0 1px 0 #707070"></div><div style="left:247px;top:1015px;width:0;height:0;border-left:5px solid transparent;border-right:5px solid transparent;border-top:6px solid #f0f0f0"></div><div class="t" style="left:100.5px;top:1007.0px;font-size:23px;color:#f4f4f4;transform:scaleX(0.9600);transform-origin:0 0;">At onsets</div><div style="left:0px;top:1046px;width:273px;height:3px;background:#555"></div><div style="left:0px;top:1049px;width:273px;height:48px;background:#404040"></div><div class="t" style="left:7.0px;top:1064.0px;font-size:22px;color:#e4e4e4;transform:scaleX(1.0677);transform-origin:0 0;">Tempo</div><div style="left:91px;top:1056px;width:175px;height:33px;border-radius:4px;background:#151515"></div><div class="t" style="left:198.1px;top:1065.0px;font-size:19px;font-weight:bold;color:#ff8a00;transform:scaleX(1.0719);transform-origin:0 0;">105.25</div><div style="left:0px;top:1097px;width:273px;height:3px;background:#555"></div><div class="t" style="left:30.3px;top:1116.0px;font-size:22px;color:#e4e4e4;transform:scaleX(1.0159);transform-origin:0 0;">Gain</div><div style="left:91px;top:1107px;width:175px;height:40px;border-radius:4px;background:#5a5a5a;border:1px solid #2e2e2e"></div><div style="left:91px;top:1107px;width:144px;height:40px;border-radius:4px 0 0 4px;background:#151515"></div><div style="left:95px;top:1111px;width:7px;height:32px;background:#474747"></div><div style="left:245px;top:1120px;width:0;height:0;border-top:7px solid transparent;border-bottom:7px solid transparent;border-left:11px solid #c8c8c8"></div><div class="t" style="left:155.7px;top:1118.0px;font-size:19px;font-weight:bold;color:#ff8a00;transform:scaleX(1.0269);transform-origin:0 0;">+0.0 dB</div><div style="left:-20px;top:1155px;width:286px;height:40px;border-radius:4px;background:linear-gradient(180deg,#5e5e5e,#555);border:1px solid #2e2e2e"></div><div style="left:42px;top:1155px;width:1px;height:40px;background:#333"></div><div style="left:116px;top:1155px;width:1px;height:40px;background:#333"></div><div style="left:190px;top:1155px;width:1px;height:40px;background:#333"></div><div class="t" style="left:-10.3px;top:1164.6px;font-size:22px;color:#e0e0e0;transform:scaleX(1.2667);transform-origin:0 0;">-6</div><div class="t" style="left:68.8px;top:1164.6px;font-size:22px;color:#e0e0e0;transform:scaleX(0.9556);transform-origin:0 0;">-1</div><div class="t" style="left:140.6px;top:1164.6px;font-size:22px;color:#e0e0e0;transform:scaleX(0.9652);transform-origin:0 0;">+1</div><div class="t" style="left:215.4px;top:1164.6px;font-size:22px;color:#e0e0e0;transform:scaleX(1.0087);transform-origin:0 0;">+6</div><div class="t" style="left:38.0px;top:1213.0px;font-size:22px;color:#e4e4e4;transform:scaleX(1.0222);transform-origin:0 0;">Pan</div><div style="left:91px;top:1203px;width:175px;height:40px;border-radius:4px;background:#5a5a5a;border:1px solid #2e2e2e"></div><div style="left:91px;top:1203px;width:144px;height:40px;border-radius:4px 0 0 4px;background:#151515"></div><div style="left:95px;top:1207px;width:7px;height:32px;background:#474747"></div><div style="left:245px;top:1216px;width:0;height:0;border-top:7px solid transparent;border-bottom:7px solid transparent;border-left:11px solid #c8c8c8"></div><div class="t" style="left:162.3px;top:1214.1px;font-size:19px;font-weight:bold;color:#ff8a00;transform:scaleX(1.0707);transform-origin:0 0;">0.00 %</div><div class="t" style="left:24.7px;top:1261.6px;font-size:22px;color:#e4e4e4;transform:scaleX(1.0848);transform-origin:0 0;">Pitch</div><div style="left:91px;top:1251px;width:175px;height:40px;border-radius:4px;background:#5a5a5a;border:1px solid #2e2e2e"></div><div style="left:91px;top:1251px;width:144px;height:40px;border-radius:4px 0 0 4px;background:#151515"></div><div style="left:245px;top:1264px;width:0;height:0;border-top:7px solid transparent;border-bottom:7px solid transparent;border-left:11px solid #c8c8c8"></div><div class="t" style="left:188.6px;top:1261.8px;font-size:19px;font-weight:bold;color:#ff8a00;transform:scaleX(1.0944);transform-origin:0 0;">0.00</div><div style="left:-20px;top:1299px;width:286px;height:40px;border-radius:4px;background:linear-gradient(180deg,#5e5e5e,#555);border:1px solid #2e2e2e"></div><div style="left:42px;top:1299px;width:1px;height:40px;background:#333"></div><div style="left:116px;top:1299px;width:1px;height:40px;background:#333"></div><div style="left:190px;top:1299px;width:1px;height:40px;background:#333"></div><div class="t" style="left:-15.1px;top:1308.8px;font-size:22px;color:#e0e0e0;transform:scaleX(1.1267);transform-origin:0 0;">-12</div><div class="t" style="left:68.8px;top:1308.8px;font-size:22px;color:#e0e0e0;transform:scaleX(0.9556);transform-origin:0 0;">-1</div><div class="t" style="left:140.6px;top:1308.8px;font-size:22px;color:#e0e0e0;transform:scaleX(0.9652);transform-origin:0 0;">+1</div><div class="t" style="left:209.3px;top:1308.8px;font-size:22px;color:#e0e0e0;transform:scaleX(0.9914);transform-origin:0 0;">+12</div><div style="left:0px;top:1346px;width:275px;height:2px;background:#6a6a6a"></div><div style="left:0px;top:1348px;width:3282px;height:38px;background:#2d2d2d"></div><div style="left:24px;top:1364px;width:2px;height:22px;background:#9a9a9a"></div><div style="left:322px;top:1364px;width:2px;height:22px;background:#9a9a9a"></div><div class="t" style="left:56.1px;top:1374.0px;font-size:22px;font-weight:bold;color:#ff8000;transform:scaleX(0.8727);transform-origin:0 0;">ARRANGE</div><div class="t" style="left:180.1px;top:1374.0px;font-size:22px;font-weight:bold;color:#d8d8d8;transform:scaleX(0.9447);transform-origin:0 0;">MIX</div><div class="t" style="left:245.1px;top:1374.0px;font-size:22px;font-weight:bold;color:#d8d8d8;transform:scaleX(0.9367);transform-origin:0 0;">EDIT</div><svg style="left:350px;top:1370px" width="26" height="16"><rect x="0" y="0" width="6" height="4" fill="#ff7f00"/><rect x="8" y="6" width="6" height="4" fill="#ff7f00"/><rect x="17" y="4" width="6" height="4" fill="#ff7f00"/><rect x="17" y="12" width="6" height="4" fill="#ff7f00"/></svg><svg style="left:408px;top:1370px" width="26" height="16"><circle cx="19" cy="7" r="5" fill="none" stroke="#bbb" stroke-width="2.5"/><path d="M15 11 L5 20" stroke="#bbb" stroke-width="3"/></svg><div style="left:465px;top:1370px;width:30px;height:30px;border:5px solid #bbb;border-radius:6px"></div><div style="left:528px;top:1372px;width:6px;height:20px;background:#bbb"></div><div style="left:536px;top:1372px;width:6px;height:20px;background:#bbb"></div><div style="left:544px;top:1372px;width:6px;height:20px;background:#bbb"></div><div class="t" style="left:606.8px;top:1375.0px;font-size:21px;font-weight:bold;color:#e8e8e8;transform:scaleX(0.8476);transform-origin:0 0;">CLICK</div><div class="t" style="left:677.4px;top:1375.0px;font-size:22px;color:#8a8a8a;transform:scaleX(1.0107);transform-origin:0 0;">Close popup</div><div style="left:92px;top:86px;width:1048px;height:767px;background:#353535;border:1px solid #161616"></div><div style="left:93px;top:720px;width:1046px;height:63px;background:#c5c5c5"></div><div class="t" style="left:107.4px;top:110.2px;font-size:20px;font-weight:bold;color:#fafafa;transform:scaleX(0.9177);transform-origin:0 0;">GRANULAR</div><div class="t" style="left:107.6px;top:466.5px;font-size:20px;font-weight:bold;color:#fafafa;transform:scaleX(0.9151);transform-origin:0 0;">SPECTRAL</div><div class="t" style="left:108.0px;top:696.2px;font-size:20px;font-weight:bold;color:#fafafa;transform:scaleX(0.9407);transform-origin:0 0;">UNSTRETCHED</div><div class="t" style="left:156.2px;top:154.2px;font-size:27px;color:#fafafa;transform:scaleX(0.9964);transform-origin:0 0;">Stretch</div><div class="t" style="left:254.9px;top:154.2px;font-size:27px;color:#8c8c8c;transform:scaleX(1.0045);transform-origin:0 0;">Granular stretching, but neutral at original pitch/tempo</div><div class="t" style="left:156.2px;top:217.4px;font-size:27px;color:#fafafa;transform:scaleX(0.9562);transform-origin:0 0;">Stretch HD</div><div class="t" style="left:295.8px;top:217.4px;font-size:27px;color:#8c8c8c;transform:scaleX(1.0067);transform-origin:0 0;">Multiband granular stretching</div><div class="t" style="left:156.3px;top:280.6px;font-size:27px;color:#fafafa;transform:scaleX(0.9421);transform-origin:0 0;">Slice</div><div class="t" style="left:225.9px;top:280.6px;font-size:27px;color:#8c8c8c;transform:scaleX(0.9807);transform-origin:0 0;">Slices audio in chunks using various methods (formant controls grain-length)</div><div class="t" style="left:156.2px;top:343.8px;font-size:27px;color:#fafafa;transform:scaleX(0.9557);transform-origin:0 0;">Cyclic</div><div class="t" style="left:237.9px;top:343.8px;font-size:27px;color:#8c8c8c;transform:scaleX(0.9851);transform-origin:0 0;">Retro stretching, inspired by classic samplers (formant controls grain-length)</div><div class="t" style="left:155.3px;top:407.0px;font-size:27px;color:#fafafa;transform:scaleX(0.9694);transform-origin:0 0;">Elastique Solo</div><div class="t" style="left:336.0px;top:407.0px;font-size:27px;color:#8c8c8c;transform:scaleX(0.9955);transform-origin:0 0;">Formant-preserving stretching, ideal for monophonic audio</div><div class="t" style="left:155.2px;top:510.0px;font-size:27px;color:#fafafa;transform:scaleX(0.9926);transform-origin:0 0;">Elastique</div><div class="t" style="left:282.2px;top:510.0px;font-size:27px;color:#8c8c8c;transform:scaleX(0.9837);transform-origin:0 0;">Transient-preserving spectral stretching</div><div class="t" style="left:155.3px;top:573.3px;font-size:27px;color:#fafafa;transform:scaleX(0.9549);transform-origin:0 0;">Elastique Eco</div><div class="t" style="left:326.5px;top:573.3px;font-size:27px;color:#8c8c8c;transform:scaleX(0.9984);transform-origin:0 0;">Smooth spectral stretching</div><div class="t" style="left:155.3px;top:636.2px;font-size:27px;color:#fafafa;transform:scaleX(0.9690);transform-origin:0 0;">Elastique Pro</div><div class="t" style="left:326.0px;top:636.2px;font-size:27px;color:#8c8c8c;transform:scaleX(1.0000);transform-origin:0 0;">Transient-preserving spectral stretching with formant control</div><div class="t" style="left:155.4px;top:739.6px;font-size:27px;color:#2a2a2a;transform:scaleX(0.9192);transform-origin:0 0;">Raw</div><div class="t" style="left:219.9px;top:739.6px;font-size:27px;color:#8c8c8c;transform:scaleX(0.9919);transform-origin:0 0;">Leaves audio untouched, providing no beat/time synchronization</div><div class="t" style="left:155.2px;top:802.4px;font-size:27px;color:#fafafa;transform:scaleX(0.9943);transform-origin:0 0;">Repitch</div><div class="t" style="left:259.7px;top:802.4px;font-size:27px;color:#8c8c8c;transform:scaleX(0.9820);transform-origin:0 0;">Alters pitch and time together (like a tape player)</div></div></body></html>
